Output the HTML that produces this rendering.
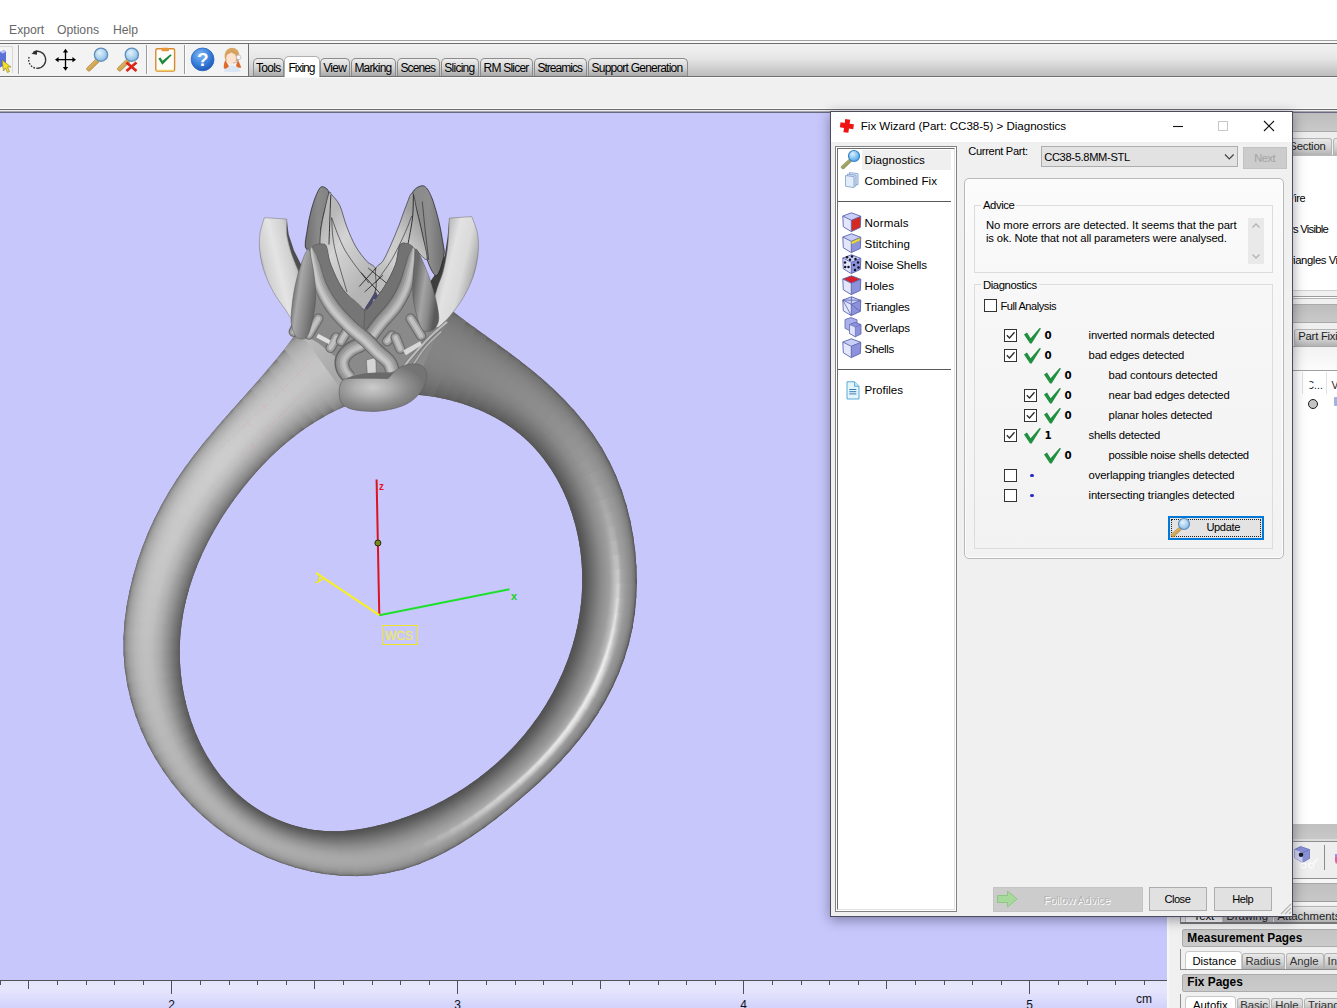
<!DOCTYPE html>
<html><head><meta charset="utf-8"><title>Fix Wizard</title>
<style>
html,body{margin:0;padding:0;}
body{width:1337px;height:1008px;overflow:hidden;position:relative;background:#fff;font-family:"Liberation Sans",sans-serif;font-size:12px;color:#000;}
.a{position:absolute;}
.t{position:absolute;white-space:nowrap;line-height:1;}
/* menu */
.menu{color:#686868;font-size:12.2px;top:23.500px;}
/* toolbar */
#tbtop{left:0;top:40px;width:1337px;height:1px;background:#a2a2a2;}
#tbtop2{left:0;top:41px;width:1337px;height:2px;background:#f9f9f9;border-bottom:1px solid #6e6e6e;}
#tb{left:0;top:44px;width:1337px;height:32px;background:#f3f3f3;}
#tabstrip{left:248px;top:44px;width:1089px;height:32px;background:linear-gradient(#f1f1f1 0%,#e6e6e6 45%,#bdbdbd 100%);border-left:1px solid #6e6e6e;}
#tbbot{left:0;top:76px;width:1337px;height:1px;background:#707070;}
#ribbon{left:0;top:77px;width:1337px;height:31px;background:#f0f0f0;border-top:1px solid #fafafa;box-sizing:border-box;}
#rb1{left:0;top:108px;width:1337px;height:1px;background:#fafafa;}
#rb2{left:0;top:109px;width:1337px;height:1px;background:#6a6a6a;border-bottom:1px solid #ededf0;}
#rb3{left:0;top:111px;width:1337px;height:1px;background:#a5a5ac;border-bottom:1px solid #6a6a82;}
.tab{position:absolute;top:58px;height:18px;box-sizing:border-box;border:1px solid #8c8c8c;border-bottom:none;border-radius:5px 5px 0 0;background:linear-gradient(#eeeeee,#d4d4d4 50%,#a8a8a8);font-size:12px;letter-spacing:-0.35px;line-height:1;padding-top:4px;text-align:center;white-space:nowrap;color:#000;}
.tab.sel{background:#fff;top:56px;height:21px;padding-top:6px;border-color:#b0b0b0;}
/* viewport */
#vp{left:0;top:113px;width:1167px;height:866px;background:#c7c7fc;overflow:hidden;}
#ruler{left:0;top:979px;width:1167px;height:29px;background:linear-gradient(#c7c7fc 0,#c7c7fc 1px,#50505a 1px,#50505a 2px,#e4e4fb 2px,#e6e6fd 10px,#d2d2fb 29px);}
/* right panel */
#rp{left:1167px;top:113px;width:170px;height:895px;background:#f0f0f0;}

/* dialog */
#dlg{left:830px;top:111px;width:463px;height:806px;background:#f0f0f0;box-sizing:border-box;border:1px solid #4c4c5c;box-shadow:0 3px 12px 0 rgba(0,0,30,.38);}
#dtitle{left:831px;top:112px;width:461px;height:30px;background:#fff;}
.seg{font-size:11.6px;}
.li{position:absolute;left:865px;white-space:nowrap;line-height:1;font-size:11.6px;}
.tx{position:absolute;white-space:nowrap;line-height:1;font-size:11.300px;}
.cb{position:absolute;width:13px;height:13px;box-sizing:border-box;border:1px solid #333;background:#fff;}
.btn{position:absolute;box-sizing:border-box;border:1px solid #adadad;background:#e1e1e1;text-align:center;font-size:12px;line-height:1;white-space:nowrap;}
.grp{position:absolute;box-sizing:border-box;border:1px solid #dcdcdc;}
.grpl{position:absolute;background:#f8f8f8;padding:0 2px;font-size:11.300px;line-height:1;white-space:nowrap;}
</style></head><body>
<!-- menu bar -->
<div class="t menu" style="left:9px">Export</div>
<div class="t menu" style="left:57px">Options</div>
<div class="t menu" style="left:113px">Help</div>
<!-- toolbar -->
<div class="a" id="tbtop"></div><div class="a" id="tbtop2"></div>
<div class="a" id="tb"></div>
<div class="a" id="tabstrip"></div>
<div class="a" id="tbbot"></div>
<div class="a" id="ribbon"></div>
<div class="a" id="rb1"></div><div class="a" id="rb2"></div><div class="a" id="rb3"></div>
<!-- toolbar icons -->
<svg class="a" style="left:0;top:44px" width="248" height="32" viewBox="0 44 248 32">
<defs>
<radialGradient id="lens" cx="40%" cy="35%" r="70%"><stop offset="0" stop-color="#e4f3fc"/><stop offset=".6" stop-color="#a9d0ee"/><stop offset="1" stop-color="#7fb2dc"/></radialGradient>
<linearGradient id="hand" x1="0" y1="0" x2="1" y2="1"><stop offset="0" stop-color="#efcf7e"/><stop offset="1" stop-color="#b98533"/></linearGradient>
<radialGradient id="helpg" cx="40%" cy="30%" r="75%"><stop offset="0" stop-color="#7fb6f4"/><stop offset=".55" stop-color="#3b82dd"/><stop offset="1" stop-color="#1c55b4"/></radialGradient>
</defs>
<!-- pressed button box + cube/cursor -->
<path d="M0 46.5H12.5V73" fill="none" stroke="#d8d8d8"/>
<path d="M0 52l4 -2 2 1.5v13l-6 3z" fill="#5b6fd8"/><path d="M0 52l4 -2 2 1.5 -3 2z" fill="#b8c4f4"/>
<path d="M2 60l1.5 11 2 -3 2 4.5 2 -1 -2 -4.5 3.5 0z" fill="#f2e02c" stroke="#8a7a10" stroke-width=".6"/>
<!-- separators -->
<path d="M18.5 45V74M146.500 45V74M184.500 45V74" stroke="#9c9c9c"/><path d="M19.5 45V74M147.500 45V74M185.500 45V74" stroke="#fdfdfd"/>
<!-- rotate -->
<path d="M33.21 52.29A8.5 8.5 0 1 1 37.94 68.27" fill="none" stroke="#333" stroke-width="1.300"/>
<path d="M37.94 68.27A8.5 8.5 0 0 1 29.21 56.89" fill="none" stroke="#333" stroke-width="1.300" stroke-dasharray="1.700 1.300"/>
<path d="M31.300 53.800l5.800 -3.800 -.2 4.800z" fill="#2a2a2a"/>
<!-- move -->
<path d="M57 59.700H74M65.500 51V68.500" stroke="#000" stroke-width="1.300"/>
<path d="M65.500 48.800l2.600 3.600h-5.200zM65.500 70.700l2.600 -3.600h-5.200zM55 59.700l3.600 -2.600v5.200zM76 59.700l-3.600 -2.600v5.200z" fill="#000"/>
<!-- zoom -->
<path d="M96.300 58.700l3 3 -9.600 9.200c-1.200 1 -4 -1.500 -3 -2.800z" fill="url(#hand)" stroke="#a9792c" stroke-width=".6"/>
<circle cx="101" cy="54.700" r="6.600" fill="url(#lens)" stroke="#5b8dbd" stroke-width="1.300"/>
<!-- zoom x -->
<path d="M127.100 58.700l3 3 -9.600 9.200c-1.200 1 -4 -1.500 -3 -2.800z" fill="url(#hand)" stroke="#a9792c" stroke-width=".6"/>
<circle cx="131.800" cy="54.700" r="6.600" fill="url(#lens)" stroke="#5b8dbd" stroke-width="1.300"/>
<path d="M126.500 62.500l10 8.500M136.500 62.500l-10 8.500" stroke="#dc2418" stroke-width="2.700"/>
<!-- clipboard -->
<rect x="155.800" y="48.800" width="18.800" height="22.300" rx="1.500" fill="#fffef8" stroke="#d98b2f" stroke-width="1.400"/>
<path d="M156.500 70.400h17.400" stroke="#f0d060" stroke-width="1.200"/>
<rect x="161.500" y="47.800" width="7.500" height="3.400" rx="1" fill="#e9963a"/>
<path d="M158.300 58.600l2.200 -1 2 3.200 8 -6.500 1.200 1 -9.400 9.500z" fill="#1c8a3c"/>
<!-- help -->
<circle cx="202.600" cy="59.400" r="11.400" fill="url(#helpg)" stroke="#2a63bd" stroke-width=".8"/>
<text x="202.700" y="66.300" font-family="Liberation Sans,sans-serif" font-weight="bold" font-size="19" fill="#fff" text-anchor="middle">?</text>
<!-- support person -->
<path d="M223.800 71.600c.6 -4 3.600 -6 8 -6s7.800 2 8.600 6c-4.500 1 -12 1 -16.600 0z" fill="#dbe6f5"/>
<path d="M225.200 60c-1 3 -1.800 5.500 -1.300 8.500 2 .5 4 -.5 5 -2.500zM238 60c1.300 2.500 2.300 5 3.300 7.500 -2 .8 -4.300 0 -5.300 -2z" fill="#de6a2c"/>
<path d="M224.600 56c0 -5.500 4 -8.200 7.400 -8.200 4 0 7.300 2.800 7.300 8 0 2 -.5 4 -1.500 5.500h-11.500c-1.200 -1.500 -1.700 -3.300 -1.700 -5.300z" fill="#d9a666"/>
<ellipse cx="231.200" cy="58.300" rx="4.900" ry="6" fill="#fde2cf"/>
<path d="M225.800 54.500c1 -3.500 4 -5 7 -4.500 2.500 .5 4.500 2 5.200 4.500 -2.500 0 -5 -.8 -6.800 -2.300 -1.400 1.500 -3.400 2.300 -5.400 2.300z" fill="#d4a262"/>
<circle cx="238.600" cy="57.300" r="2.300" fill="#f6f6fa" stroke="#b4b4c4" stroke-width=".7"/>
<path d="M238.300 59.800c-.8 2.500 -3 3.300 -5.300 3" fill="none" stroke="#a4a4b0" stroke-width=".8"/>
</svg>
<!-- ribbon tabs -->
<div class="tab" style="left:253px;width:31px"></div>
<div class="t" style="letter-spacing:-0.703px;left:256.0px;top:61.64px;font-size:12px;">Tools</div>
<div class="tab sel" style="left:284px;width:36px"></div>
<div class="t" style="letter-spacing:-1.053px;left:288.6px;top:61.64px;font-size:12px;">Fixing</div>
<div class="tab" style="left:320px;width:30px"></div>
<div class="t" style="letter-spacing:-0.749px;left:323.3px;top:61.64px;font-size:12px;">View</div>
<div class="tab" style="left:351px;width:45px"></div>
<div class="t" style="letter-spacing:-0.812px;left:354.4px;top:61.64px;font-size:12px;">Marking</div>
<div class="tab" style="left:397px;width:43px"></div>
<div class="t" style="letter-spacing:-0.905px;left:400.5px;top:61.64px;font-size:12px;">Scenes</div>
<div class="tab" style="left:441px;width:38px"></div>
<div class="t" style="letter-spacing:-0.737px;left:444.3px;top:61.64px;font-size:12px;">Slicing</div>
<div class="tab" style="left:480px;width:53px"></div>
<div class="t" style="letter-spacing:-0.768px;left:483.5px;top:61.64px;font-size:12px;">RM Slicer</div>
<div class="tab" style="left:534px;width:53px"></div>
<div class="t" style="letter-spacing:-0.960px;left:537.4px;top:61.64px;font-size:12px;">Streamics</div>
<div class="tab" style="left:588px;width:100px"></div>
<div class="t" style="letter-spacing:-0.769px;left:591.5px;top:61.64px;font-size:12px;">Support Generation</div>
<!-- viewport -->
<div class="a" id="vp"></div>
<div class="a" id="ruler"></div>
<svg class="a" style="left:0;top:113px" width="1167" height="866" viewBox="0 113 1167 866">
<defs><linearGradient id="b0" gradientUnits="userSpaceOnUse" x1="343.3" y1="407.2" x2="292.2" y2="338.6"><stop offset="0" stop-color="#6c6c6c"/><stop offset="0.04" stop-color="#848484"/><stop offset="0.1" stop-color="#949494"/><stop offset="0.2" stop-color="#a7a7a7"/><stop offset="0.35" stop-color="#bbbbbb"/><stop offset="0.5" stop-color="#c4c4c4"/><stop offset="0.6" stop-color="#c4c4c4"/><stop offset="0.66" stop-color="#c2c2c2"/><stop offset="0.72" stop-color="#bfbfbf"/><stop offset="0.8" stop-color="#b9b9b9"/><stop offset="0.9" stop-color="#ababab"/><stop offset="0.96" stop-color="#9c9c9c"/><stop offset="1" stop-color="#808080"/></linearGradient><linearGradient id="b1" gradientUnits="userSpaceOnUse" x1="329.4" y1="413.8" x2="280.4" y2="354.1"><stop offset="0" stop-color="#6b6b6b"/><stop offset="0.04" stop-color="#838383"/><stop offset="0.1" stop-color="#949494"/><stop offset="0.2" stop-color="#a7a7a7"/><stop offset="0.35" stop-color="#bbbbbb"/><stop offset="0.5" stop-color="#c5c5c5"/><stop offset="0.6" stop-color="#c5c5c5"/><stop offset="0.66" stop-color="#c3c3c3"/><stop offset="0.72" stop-color="#c0c0c0"/><stop offset="0.8" stop-color="#bababa"/><stop offset="0.9" stop-color="#ababab"/><stop offset="0.96" stop-color="#9c9c9c"/><stop offset="1" stop-color="#7f7f7f"/></linearGradient><linearGradient id="b2" gradientUnits="userSpaceOnUse" x1="319.3" y1="419.4" x2="272.4" y2="364.0"><stop offset="0" stop-color="#6a6a6a"/><stop offset="0.04" stop-color="#838383"/><stop offset="0.1" stop-color="#939393"/><stop offset="0.2" stop-color="#a7a7a7"/><stop offset="0.35" stop-color="#bcbcbc"/><stop offset="0.5" stop-color="#c6c6c6"/><stop offset="0.6" stop-color="#c6c6c6"/><stop offset="0.66" stop-color="#c4c4c4"/><stop offset="0.72" stop-color="#c1c1c1"/><stop offset="0.8" stop-color="#bbbbbb"/><stop offset="0.9" stop-color="#acacac"/><stop offset="0.96" stop-color="#9c9c9c"/><stop offset="1" stop-color="#7e7e7e"/></linearGradient><linearGradient id="b3" gradientUnits="userSpaceOnUse" x1="309.3" y1="425.7" x2="264.0" y2="373.8"><stop offset="0" stop-color="#6a6a6a"/><stop offset="0.04" stop-color="#828282"/><stop offset="0.1" stop-color="#929292"/><stop offset="0.2" stop-color="#a6a6a6"/><stop offset="0.35" stop-color="#bcbcbc"/><stop offset="0.5" stop-color="#c7c7c7"/><stop offset="0.6" stop-color="#c7c7c7"/><stop offset="0.66" stop-color="#c5c5c5"/><stop offset="0.72" stop-color="#c2c2c2"/><stop offset="0.8" stop-color="#bbbbbb"/><stop offset="0.9" stop-color="#acacac"/><stop offset="0.96" stop-color="#9c9c9c"/><stop offset="1" stop-color="#7e7e7e"/></linearGradient><linearGradient id="b4" gradientUnits="userSpaceOnUse" x1="299.4" y1="432.6" x2="255.1" y2="384.0"><stop offset="0" stop-color="#696969"/><stop offset="0.04" stop-color="#818181"/><stop offset="0.1" stop-color="#919191"/><stop offset="0.2" stop-color="#a6a6a6"/><stop offset="0.35" stop-color="#bcbcbc"/><stop offset="0.5" stop-color="#c8c8c8"/><stop offset="0.6" stop-color="#c8c8c8"/><stop offset="0.66" stop-color="#c6c6c6"/><stop offset="0.72" stop-color="#c3c3c3"/><stop offset="0.8" stop-color="#bcbcbc"/><stop offset="0.9" stop-color="#adadad"/><stop offset="0.96" stop-color="#9c9c9c"/><stop offset="1" stop-color="#7d7d7d"/></linearGradient><linearGradient id="b5" gradientUnits="userSpaceOnUse" x1="289.9" y1="439.9" x2="246.0" y2="394.3"><stop offset="0" stop-color="#686868"/><stop offset="0.04" stop-color="#808080"/><stop offset="0.1" stop-color="#919191"/><stop offset="0.2" stop-color="#a6a6a6"/><stop offset="0.35" stop-color="#bdbdbd"/><stop offset="0.5" stop-color="#c8c8c8"/><stop offset="0.6" stop-color="#c9c9c9"/><stop offset="0.66" stop-color="#c7c7c7"/><stop offset="0.72" stop-color="#c4c4c4"/><stop offset="0.8" stop-color="#bdbdbd"/><stop offset="0.9" stop-color="#adadad"/><stop offset="0.96" stop-color="#9c9c9c"/><stop offset="1" stop-color="#7c7c7c"/></linearGradient><linearGradient id="b6" gradientUnits="userSpaceOnUse" x1="280.6" y1="447.8" x2="236.8" y2="404.6"><stop offset="0" stop-color="#686868"/><stop offset="0.04" stop-color="#7f7f7f"/><stop offset="0.1" stop-color="#909090"/><stop offset="0.2" stop-color="#a5a5a5"/><stop offset="0.35" stop-color="#bdbdbd"/><stop offset="0.5" stop-color="#c9c9c9"/><stop offset="0.6" stop-color="#cacaca"/><stop offset="0.66" stop-color="#c8c8c8"/><stop offset="0.72" stop-color="#c5c5c5"/><stop offset="0.8" stop-color="#bebebe"/><stop offset="0.9" stop-color="#aeaeae"/><stop offset="0.96" stop-color="#9d9d9d"/><stop offset="1" stop-color="#7c7c7c"/></linearGradient><linearGradient id="b7" gradientUnits="userSpaceOnUse" x1="271.3" y1="456.5" x2="227.7" y2="414.9"><stop offset="0" stop-color="#676767"/><stop offset="0.04" stop-color="#7e7e7e"/><stop offset="0.1" stop-color="#8f8f8f"/><stop offset="0.2" stop-color="#a5a5a5"/><stop offset="0.35" stop-color="#bebebe"/><stop offset="0.5" stop-color="#cacaca"/><stop offset="0.6" stop-color="#cbcbcb"/><stop offset="0.66" stop-color="#c9c9c9"/><stop offset="0.72" stop-color="#c6c6c6"/><stop offset="0.8" stop-color="#bfbfbf"/><stop offset="0.9" stop-color="#aeaeae"/><stop offset="0.96" stop-color="#9d9d9d"/><stop offset="1" stop-color="#7b7b7b"/></linearGradient><linearGradient id="b8" gradientUnits="userSpaceOnUse" x1="262.4" y1="465.5" x2="218.5" y2="425.5"><stop offset="0" stop-color="#666666"/><stop offset="0.04" stop-color="#7d7d7d"/><stop offset="0.1" stop-color="#8e8e8e"/><stop offset="0.2" stop-color="#a5a5a5"/><stop offset="0.35" stop-color="#bebebe"/><stop offset="0.5" stop-color="#cbcbcb"/><stop offset="0.6" stop-color="#cccccc"/><stop offset="0.66" stop-color="#cacaca"/><stop offset="0.72" stop-color="#c7c7c7"/><stop offset="0.8" stop-color="#bfbfbf"/><stop offset="0.9" stop-color="#afafaf"/><stop offset="0.96" stop-color="#9d9d9d"/><stop offset="1" stop-color="#7a7a7a"/></linearGradient><linearGradient id="b9" gradientUnits="userSpaceOnUse" x1="253.8" y1="474.9" x2="209.1" y2="436.6"><stop offset="0" stop-color="#666666"/><stop offset="0.04" stop-color="#7c7c7c"/><stop offset="0.1" stop-color="#8d8d8d"/><stop offset="0.2" stop-color="#a4a4a4"/><stop offset="0.35" stop-color="#bebebe"/><stop offset="0.5" stop-color="#cccccc"/><stop offset="0.6" stop-color="#cdcdcd"/><stop offset="0.66" stop-color="#cccccc"/><stop offset="0.72" stop-color="#c8c8c8"/><stop offset="0.8" stop-color="#c0c0c0"/><stop offset="0.9" stop-color="#afafaf"/><stop offset="0.96" stop-color="#9d9d9d"/><stop offset="1" stop-color="#7a7a7a"/></linearGradient><linearGradient id="b10" gradientUnits="userSpaceOnUse" x1="245.6" y1="484.6" x2="199.8" y2="448.0"><stop offset="0" stop-color="#656565"/><stop offset="0.04" stop-color="#7b7b7b"/><stop offset="0.1" stop-color="#8c8c8c"/><stop offset="0.2" stop-color="#a3a3a3"/><stop offset="0.35" stop-color="#bebebe"/><stop offset="0.5" stop-color="#cccccc"/><stop offset="0.6" stop-color="#cdcdcd"/><stop offset="0.66" stop-color="#cccccc"/><stop offset="0.72" stop-color="#c8c8c8"/><stop offset="0.8" stop-color="#c0c0c0"/><stop offset="0.9" stop-color="#afafaf"/><stop offset="0.96" stop-color="#9d9d9d"/><stop offset="1" stop-color="#797979"/></linearGradient><linearGradient id="b11" gradientUnits="userSpaceOnUse" x1="237.8" y1="494.7" x2="190.8" y2="459.6"><stop offset="0" stop-color="#646464"/><stop offset="0.04" stop-color="#7a7a7a"/><stop offset="0.1" stop-color="#8a8a8a"/><stop offset="0.2" stop-color="#a2a2a2"/><stop offset="0.35" stop-color="#bdbdbd"/><stop offset="0.5" stop-color="#cbcbcb"/><stop offset="0.6" stop-color="#cdcdcd"/><stop offset="0.66" stop-color="#cbcbcb"/><stop offset="0.72" stop-color="#c7c7c7"/><stop offset="0.8" stop-color="#c0c0c0"/><stop offset="0.9" stop-color="#aeaeae"/><stop offset="0.96" stop-color="#9c9c9c"/><stop offset="1" stop-color="#787878"/></linearGradient><linearGradient id="b12" gradientUnits="userSpaceOnUse" x1="230.2" y1="505.2" x2="182.1" y2="471.8"><stop offset="0" stop-color="#646464"/><stop offset="0.04" stop-color="#787878"/><stop offset="0.1" stop-color="#898989"/><stop offset="0.2" stop-color="#a0a0a0"/><stop offset="0.35" stop-color="#bbbbbb"/><stop offset="0.5" stop-color="#cacaca"/><stop offset="0.6" stop-color="#cccccc"/><stop offset="0.66" stop-color="#cacaca"/><stop offset="0.72" stop-color="#c7c7c7"/><stop offset="0.8" stop-color="#bfbfbf"/><stop offset="0.9" stop-color="#aeaeae"/><stop offset="0.96" stop-color="#9b9b9b"/><stop offset="1" stop-color="#787878"/></linearGradient><linearGradient id="b13" gradientUnits="userSpaceOnUse" x1="223.0" y1="515.9" x2="173.7" y2="484.4"><stop offset="0" stop-color="#636363"/><stop offset="0.04" stop-color="#767676"/><stop offset="0.1" stop-color="#878787"/><stop offset="0.2" stop-color="#9e9e9e"/><stop offset="0.35" stop-color="#bababa"/><stop offset="0.5" stop-color="#c9c9c9"/><stop offset="0.6" stop-color="#cbcbcb"/><stop offset="0.66" stop-color="#c9c9c9"/><stop offset="0.72" stop-color="#c6c6c6"/><stop offset="0.8" stop-color="#bebebe"/><stop offset="0.9" stop-color="#adadad"/><stop offset="0.96" stop-color="#9a9a9a"/><stop offset="1" stop-color="#777777"/></linearGradient><linearGradient id="b14" gradientUnits="userSpaceOnUse" x1="216.5" y1="526.6" x2="165.8" y2="497.4"><stop offset="0" stop-color="#626262"/><stop offset="0.04" stop-color="#757575"/><stop offset="0.1" stop-color="#858585"/><stop offset="0.2" stop-color="#9d9d9d"/><stop offset="0.35" stop-color="#b9b9b9"/><stop offset="0.5" stop-color="#c8c8c8"/><stop offset="0.6" stop-color="#cacaca"/><stop offset="0.66" stop-color="#c9c9c9"/><stop offset="0.72" stop-color="#c5c5c5"/><stop offset="0.8" stop-color="#bebebe"/><stop offset="0.9" stop-color="#acacac"/><stop offset="0.96" stop-color="#9a9a9a"/><stop offset="1" stop-color="#767676"/></linearGradient><linearGradient id="b15" gradientUnits="userSpaceOnUse" x1="210.2" y1="537.7" x2="158.6" y2="510.8"><stop offset="0" stop-color="#616161"/><stop offset="0.04" stop-color="#737373"/><stop offset="0.1" stop-color="#838383"/><stop offset="0.2" stop-color="#9b9b9b"/><stop offset="0.35" stop-color="#b7b7b7"/><stop offset="0.5" stop-color="#c7c7c7"/><stop offset="0.6" stop-color="#c9c9c9"/><stop offset="0.66" stop-color="#c8c8c8"/><stop offset="0.72" stop-color="#c5c5c5"/><stop offset="0.8" stop-color="#bdbdbd"/><stop offset="0.9" stop-color="#ababab"/><stop offset="0.96" stop-color="#999999"/><stop offset="1" stop-color="#757575"/></linearGradient><linearGradient id="b16" gradientUnits="userSpaceOnUse" x1="204.5" y1="549.1" x2="151.9" y2="524.5"><stop offset="0" stop-color="#606060"/><stop offset="0.04" stop-color="#727272"/><stop offset="0.1" stop-color="#828282"/><stop offset="0.2" stop-color="#999999"/><stop offset="0.35" stop-color="#b6b6b6"/><stop offset="0.5" stop-color="#c7c7c7"/><stop offset="0.6" stop-color="#c9c9c9"/><stop offset="0.66" stop-color="#c7c7c7"/><stop offset="0.72" stop-color="#c4c4c4"/><stop offset="0.8" stop-color="#bcbcbc"/><stop offset="0.9" stop-color="#ababab"/><stop offset="0.96" stop-color="#989898"/><stop offset="1" stop-color="#747474"/></linearGradient><linearGradient id="b17" gradientUnits="userSpaceOnUse" x1="199.3" y1="560.6" x2="145.9" y2="538.5"><stop offset="0" stop-color="#5f5f5f"/><stop offset="0.04" stop-color="#707070"/><stop offset="0.1" stop-color="#808080"/><stop offset="0.2" stop-color="#989898"/><stop offset="0.35" stop-color="#b5b5b5"/><stop offset="0.5" stop-color="#c6c6c6"/><stop offset="0.6" stop-color="#c8c8c8"/><stop offset="0.66" stop-color="#c6c6c6"/><stop offset="0.72" stop-color="#c3c3c3"/><stop offset="0.8" stop-color="#bbbbbb"/><stop offset="0.9" stop-color="#aaaaaa"/><stop offset="0.96" stop-color="#979797"/><stop offset="1" stop-color="#737373"/></linearGradient><linearGradient id="b18" gradientUnits="userSpaceOnUse" x1="194.7" y1="572.2" x2="140.5" y2="552.7"><stop offset="0" stop-color="#5e5e5e"/><stop offset="0.04" stop-color="#6f6f6f"/><stop offset="0.1" stop-color="#7e7e7e"/><stop offset="0.2" stop-color="#969696"/><stop offset="0.35" stop-color="#b4b4b4"/><stop offset="0.5" stop-color="#c5c5c5"/><stop offset="0.6" stop-color="#c7c7c7"/><stop offset="0.66" stop-color="#c6c6c6"/><stop offset="0.72" stop-color="#c2c2c2"/><stop offset="0.8" stop-color="#bbbbbb"/><stop offset="0.9" stop-color="#a9a9a9"/><stop offset="0.96" stop-color="#969696"/><stop offset="1" stop-color="#727272"/></linearGradient><linearGradient id="b19" gradientUnits="userSpaceOnUse" x1="190.7" y1="584.0" x2="135.8" y2="567.1"><stop offset="0" stop-color="#5d5d5d"/><stop offset="0.04" stop-color="#6d6d6d"/><stop offset="0.1" stop-color="#7c7c7c"/><stop offset="0.2" stop-color="#949494"/><stop offset="0.35" stop-color="#b2b2b2"/><stop offset="0.5" stop-color="#c4c4c4"/><stop offset="0.6" stop-color="#c6c6c6"/><stop offset="0.66" stop-color="#c5c5c5"/><stop offset="0.72" stop-color="#c2c2c2"/><stop offset="0.8" stop-color="#bababa"/><stop offset="0.9" stop-color="#a8a8a8"/><stop offset="0.96" stop-color="#969696"/><stop offset="1" stop-color="#717171"/></linearGradient><linearGradient id="b20" gradientUnits="userSpaceOnUse" x1="187.2" y1="595.9" x2="131.9" y2="581.6"><stop offset="0" stop-color="#5c5c5c"/><stop offset="0.04" stop-color="#6b6b6b"/><stop offset="0.1" stop-color="#7b7b7b"/><stop offset="0.2" stop-color="#939393"/><stop offset="0.35" stop-color="#b1b1b1"/><stop offset="0.5" stop-color="#c3c3c3"/><stop offset="0.6" stop-color="#c5c5c5"/><stop offset="0.66" stop-color="#c4c4c4"/><stop offset="0.72" stop-color="#c1c1c1"/><stop offset="0.8" stop-color="#b9b9b9"/><stop offset="0.9" stop-color="#a8a8a8"/><stop offset="0.96" stop-color="#959595"/><stop offset="1" stop-color="#707070"/></linearGradient><linearGradient id="b21" gradientUnits="userSpaceOnUse" x1="184.4" y1="608.1" x2="128.5" y2="596.6"><stop offset="0" stop-color="#5b5b5b"/><stop offset="0.04" stop-color="#6a6a6a"/><stop offset="0.1" stop-color="#797979"/><stop offset="0.2" stop-color="#919191"/><stop offset="0.35" stop-color="#afafaf"/><stop offset="0.5" stop-color="#c1c1c1"/><stop offset="0.6" stop-color="#c4c4c4"/><stop offset="0.66" stop-color="#c3c3c3"/><stop offset="0.72" stop-color="#c0c0c0"/><stop offset="0.8" stop-color="#b8b8b8"/><stop offset="0.9" stop-color="#a7a7a7"/><stop offset="0.96" stop-color="#949494"/><stop offset="1" stop-color="#6f6f6f"/></linearGradient><linearGradient id="b22" gradientUnits="userSpaceOnUse" x1="182.2" y1="620.1" x2="126.0" y2="611.8"><stop offset="0" stop-color="#5a5a5a"/><stop offset="0.04" stop-color="#696969"/><stop offset="0.1" stop-color="#777777"/><stop offset="0.2" stop-color="#8f8f8f"/><stop offset="0.35" stop-color="#aeaeae"/><stop offset="0.5" stop-color="#c0c0c0"/><stop offset="0.6" stop-color="#c3c3c3"/><stop offset="0.66" stop-color="#c2c2c2"/><stop offset="0.72" stop-color="#bfbfbf"/><stop offset="0.8" stop-color="#b7b7b7"/><stop offset="0.9" stop-color="#a6a6a6"/><stop offset="0.96" stop-color="#939393"/><stop offset="1" stop-color="#6e6e6e"/></linearGradient><linearGradient id="b23" gradientUnits="userSpaceOnUse" x1="180.7" y1="632.3" x2="124.3" y2="627.4"><stop offset="0" stop-color="#595959"/><stop offset="0.04" stop-color="#676767"/><stop offset="0.1" stop-color="#767676"/><stop offset="0.2" stop-color="#8e8e8e"/><stop offset="0.35" stop-color="#acacac"/><stop offset="0.5" stop-color="#bfbfbf"/><stop offset="0.6" stop-color="#c2c2c2"/><stop offset="0.66" stop-color="#c1c1c1"/><stop offset="0.72" stop-color="#bdbdbd"/><stop offset="0.8" stop-color="#b6b6b6"/><stop offset="0.9" stop-color="#a5a5a5"/><stop offset="0.96" stop-color="#929292"/><stop offset="1" stop-color="#6d6d6d"/></linearGradient><linearGradient id="b24" gradientUnits="userSpaceOnUse" x1="179.9" y1="644.6" x2="123.6" y2="643.4"><stop offset="0" stop-color="#585858"/><stop offset="0.04" stop-color="#666666"/><stop offset="0.1" stop-color="#747474"/><stop offset="0.2" stop-color="#8c8c8c"/><stop offset="0.35" stop-color="#ababab"/><stop offset="0.5" stop-color="#bdbdbd"/><stop offset="0.6" stop-color="#c1c1c1"/><stop offset="0.66" stop-color="#bfbfbf"/><stop offset="0.72" stop-color="#bcbcbc"/><stop offset="0.8" stop-color="#b5b5b5"/><stop offset="0.9" stop-color="#a4a4a4"/><stop offset="0.96" stop-color="#919191"/><stop offset="1" stop-color="#6c6c6c"/></linearGradient><linearGradient id="b25" gradientUnits="userSpaceOnUse" x1="179.9" y1="656.8" x2="124.2" y2="659.4"><stop offset="0" stop-color="#585858"/><stop offset="0.04" stop-color="#656565"/><stop offset="0.1" stop-color="#737373"/><stop offset="0.2" stop-color="#8a8a8a"/><stop offset="0.35" stop-color="#a9a9a9"/><stop offset="0.5" stop-color="#bcbcbc"/><stop offset="0.6" stop-color="#bfbfbf"/><stop offset="0.66" stop-color="#bebebe"/><stop offset="0.72" stop-color="#bbbbbb"/><stop offset="0.8" stop-color="#b4b4b4"/><stop offset="0.9" stop-color="#a3a3a3"/><stop offset="0.96" stop-color="#909090"/><stop offset="1" stop-color="#6c6c6c"/></linearGradient><linearGradient id="b26" gradientUnits="userSpaceOnUse" x1="180.5" y1="669.0" x2="125.9" y2="675.2"><stop offset="0" stop-color="#585858"/><stop offset="0.04" stop-color="#646464"/><stop offset="0.1" stop-color="#727272"/><stop offset="0.2" stop-color="#898989"/><stop offset="0.35" stop-color="#a8a8a8"/><stop offset="0.5" stop-color="#bbbbbb"/><stop offset="0.6" stop-color="#bebebe"/><stop offset="0.66" stop-color="#bdbdbd"/><stop offset="0.72" stop-color="#bababa"/><stop offset="0.8" stop-color="#b3b3b3"/><stop offset="0.9" stop-color="#a2a2a2"/><stop offset="0.96" stop-color="#8f8f8f"/><stop offset="1" stop-color="#6c6c6c"/></linearGradient><linearGradient id="b27" gradientUnits="userSpaceOnUse" x1="181.8" y1="681.2" x2="128.8" y2="690.9"><stop offset="0" stop-color="#575757"/><stop offset="0.04" stop-color="#636363"/><stop offset="0.1" stop-color="#717171"/><stop offset="0.2" stop-color="#888888"/><stop offset="0.35" stop-color="#a6a6a6"/><stop offset="0.5" stop-color="#b9b9b9"/><stop offset="0.6" stop-color="#bdbdbd"/><stop offset="0.66" stop-color="#bcbcbc"/><stop offset="0.72" stop-color="#b9b9b9"/><stop offset="0.8" stop-color="#b2b2b2"/><stop offset="0.9" stop-color="#a1a1a1"/><stop offset="0.96" stop-color="#8f8f8f"/><stop offset="1" stop-color="#6b6b6b"/></linearGradient><linearGradient id="b28" gradientUnits="userSpaceOnUse" x1="183.9" y1="693.5" x2="132.7" y2="706.0"><stop offset="0" stop-color="#575757"/><stop offset="0.04" stop-color="#626262"/><stop offset="0.1" stop-color="#707070"/><stop offset="0.2" stop-color="#868686"/><stop offset="0.35" stop-color="#a5a5a5"/><stop offset="0.5" stop-color="#b8b8b8"/><stop offset="0.6" stop-color="#bcbcbc"/><stop offset="0.66" stop-color="#bbbbbb"/><stop offset="0.72" stop-color="#b8b8b8"/><stop offset="0.8" stop-color="#b1b1b1"/><stop offset="0.9" stop-color="#a0a0a0"/><stop offset="0.96" stop-color="#8e8e8e"/><stop offset="1" stop-color="#6b6b6b"/></linearGradient><linearGradient id="b29" gradientUnits="userSpaceOnUse" x1="186.6" y1="705.6" x2="137.6" y2="720.9"><stop offset="0" stop-color="#575757"/><stop offset="0.04" stop-color="#616161"/><stop offset="0.1" stop-color="#6e6e6e"/><stop offset="0.2" stop-color="#858585"/><stop offset="0.35" stop-color="#a4a4a4"/><stop offset="0.5" stop-color="#b7b7b7"/><stop offset="0.6" stop-color="#bbbbbb"/><stop offset="0.66" stop-color="#bababa"/><stop offset="0.72" stop-color="#b7b7b7"/><stop offset="0.8" stop-color="#b0b0b0"/><stop offset="0.9" stop-color="#a0a0a0"/><stop offset="0.96" stop-color="#8e8e8e"/><stop offset="1" stop-color="#6b6b6b"/></linearGradient><linearGradient id="b30" gradientUnits="userSpaceOnUse" x1="190.0" y1="717.4" x2="143.6" y2="735.3"><stop offset="0" stop-color="#565656"/><stop offset="0.04" stop-color="#606060"/><stop offset="0.1" stop-color="#6d6d6d"/><stop offset="0.2" stop-color="#848484"/><stop offset="0.35" stop-color="#a2a2a2"/><stop offset="0.5" stop-color="#b5b5b5"/><stop offset="0.6" stop-color="#b9b9b9"/><stop offset="0.66" stop-color="#b9b9b9"/><stop offset="0.72" stop-color="#b6b6b6"/><stop offset="0.8" stop-color="#afafaf"/><stop offset="0.9" stop-color="#9f9f9f"/><stop offset="0.96" stop-color="#8d8d8d"/><stop offset="1" stop-color="#6b6b6b"/></linearGradient><linearGradient id="b31" gradientUnits="userSpaceOnUse" x1="194.1" y1="728.9" x2="150.4" y2="749.2"><stop offset="0" stop-color="#565656"/><stop offset="0.04" stop-color="#5f5f5f"/><stop offset="0.1" stop-color="#6c6c6c"/><stop offset="0.2" stop-color="#828282"/><stop offset="0.35" stop-color="#a1a1a1"/><stop offset="0.5" stop-color="#b4b4b4"/><stop offset="0.6" stop-color="#b8b8b8"/><stop offset="0.66" stop-color="#b7b7b7"/><stop offset="0.72" stop-color="#b5b5b5"/><stop offset="0.8" stop-color="#aeaeae"/><stop offset="0.9" stop-color="#9e9e9e"/><stop offset="0.96" stop-color="#8d8d8d"/><stop offset="1" stop-color="#6a6a6a"/></linearGradient><linearGradient id="b32" gradientUnits="userSpaceOnUse" x1="198.9" y1="740.3" x2="157.9" y2="762.4"><stop offset="0" stop-color="#565656"/><stop offset="0.04" stop-color="#5f5f5f"/><stop offset="0.1" stop-color="#6b6b6b"/><stop offset="0.2" stop-color="#818181"/><stop offset="0.35" stop-color="#9f9f9f"/><stop offset="0.5" stop-color="#b3b3b3"/><stop offset="0.6" stop-color="#b7b7b7"/><stop offset="0.66" stop-color="#b6b6b6"/><stop offset="0.72" stop-color="#b4b4b4"/><stop offset="0.8" stop-color="#adadad"/><stop offset="0.9" stop-color="#9d9d9d"/><stop offset="0.96" stop-color="#8c8c8c"/><stop offset="1" stop-color="#6a6a6a"/></linearGradient><linearGradient id="b33" gradientUnits="userSpaceOnUse" x1="204.6" y1="751.4" x2="166.3" y2="775.1"><stop offset="0" stop-color="#555555"/><stop offset="0.04" stop-color="#5e5e5e"/><stop offset="0.1" stop-color="#6a6a6a"/><stop offset="0.2" stop-color="#808080"/><stop offset="0.35" stop-color="#9e9e9e"/><stop offset="0.5" stop-color="#b1b1b1"/><stop offset="0.6" stop-color="#b6b6b6"/><stop offset="0.66" stop-color="#b5b5b5"/><stop offset="0.72" stop-color="#b3b3b3"/><stop offset="0.8" stop-color="#acacac"/><stop offset="0.9" stop-color="#9d9d9d"/><stop offset="0.96" stop-color="#8b8b8b"/><stop offset="1" stop-color="#6a6a6a"/></linearGradient><linearGradient id="b34" gradientUnits="userSpaceOnUse" x1="210.8" y1="761.9" x2="175.5" y2="787.2"><stop offset="0" stop-color="#555555"/><stop offset="0.04" stop-color="#5d5d5d"/><stop offset="0.1" stop-color="#696969"/><stop offset="0.2" stop-color="#7e7e7e"/><stop offset="0.35" stop-color="#9c9c9c"/><stop offset="0.5" stop-color="#b0b0b0"/><stop offset="0.6" stop-color="#b5b5b5"/><stop offset="0.66" stop-color="#b4b4b4"/><stop offset="0.72" stop-color="#b2b2b2"/><stop offset="0.8" stop-color="#ababab"/><stop offset="0.9" stop-color="#9c9c9c"/><stop offset="0.96" stop-color="#8b8b8b"/><stop offset="1" stop-color="#6a6a6a"/></linearGradient><linearGradient id="b35" gradientUnits="userSpaceOnUse" x1="217.8" y1="771.9" x2="185.5" y2="798.8"><stop offset="0" stop-color="#555555"/><stop offset="0.04" stop-color="#5c5c5c"/><stop offset="0.1" stop-color="#686868"/><stop offset="0.2" stop-color="#7d7d7d"/><stop offset="0.35" stop-color="#9b9b9b"/><stop offset="0.5" stop-color="#afafaf"/><stop offset="0.6" stop-color="#b3b3b3"/><stop offset="0.66" stop-color="#b3b3b3"/><stop offset="0.72" stop-color="#b1b1b1"/><stop offset="0.8" stop-color="#ababab"/><stop offset="0.9" stop-color="#9b9b9b"/><stop offset="0.96" stop-color="#8a8a8a"/><stop offset="1" stop-color="#696969"/></linearGradient><linearGradient id="b36" gradientUnits="userSpaceOnUse" x1="225.6" y1="781.5" x2="196.0" y2="809.6"><stop offset="0" stop-color="#545454"/><stop offset="0.04" stop-color="#5c5c5c"/><stop offset="0.1" stop-color="#676767"/><stop offset="0.2" stop-color="#7c7c7c"/><stop offset="0.35" stop-color="#999999"/><stop offset="0.5" stop-color="#adadad"/><stop offset="0.6" stop-color="#b2b2b2"/><stop offset="0.66" stop-color="#b2b2b2"/><stop offset="0.72" stop-color="#b0b0b0"/><stop offset="0.8" stop-color="#aaaaaa"/><stop offset="0.9" stop-color="#9b9b9b"/><stop offset="0.96" stop-color="#8a8a8a"/><stop offset="1" stop-color="#696969"/></linearGradient><linearGradient id="b37" gradientUnits="userSpaceOnUse" x1="234.1" y1="790.5" x2="207.1" y2="819.7"><stop offset="0" stop-color="#545454"/><stop offset="0.04" stop-color="#5b5b5b"/><stop offset="0.1" stop-color="#666666"/><stop offset="0.2" stop-color="#7b7b7b"/><stop offset="0.35" stop-color="#989898"/><stop offset="0.5" stop-color="#acacac"/><stop offset="0.6" stop-color="#b1b1b1"/><stop offset="0.66" stop-color="#b1b1b1"/><stop offset="0.72" stop-color="#afafaf"/><stop offset="0.8" stop-color="#a9a9a9"/><stop offset="0.9" stop-color="#9a9a9a"/><stop offset="0.96" stop-color="#898989"/><stop offset="1" stop-color="#696969"/></linearGradient><linearGradient id="b38" gradientUnits="userSpaceOnUse" x1="243.1" y1="798.6" x2="219.1" y2="829.3"><stop offset="0" stop-color="#545454"/><stop offset="0.04" stop-color="#5a5a5a"/><stop offset="0.1" stop-color="#656565"/><stop offset="0.2" stop-color="#7a7a7a"/><stop offset="0.35" stop-color="#979797"/><stop offset="0.5" stop-color="#ababab"/><stop offset="0.6" stop-color="#b0b0b0"/><stop offset="0.66" stop-color="#b0b0b0"/><stop offset="0.72" stop-color="#aeaeae"/><stop offset="0.8" stop-color="#a8a8a8"/><stop offset="0.9" stop-color="#999999"/><stop offset="0.96" stop-color="#898989"/><stop offset="1" stop-color="#696969"/></linearGradient><linearGradient id="b39" gradientUnits="userSpaceOnUse" x1="252.9" y1="805.9" x2="231.5" y2="838.0"><stop offset="0" stop-color="#535353"/><stop offset="0.04" stop-color="#5a5a5a"/><stop offset="0.1" stop-color="#656565"/><stop offset="0.2" stop-color="#797979"/><stop offset="0.35" stop-color="#959595"/><stop offset="0.5" stop-color="#a9a9a9"/><stop offset="0.6" stop-color="#afafaf"/><stop offset="0.66" stop-color="#afafaf"/><stop offset="0.72" stop-color="#adadad"/><stop offset="0.8" stop-color="#a7a7a7"/><stop offset="0.9" stop-color="#999999"/><stop offset="0.96" stop-color="#888888"/><stop offset="1" stop-color="#696969"/></linearGradient><linearGradient id="b40" gradientUnits="userSpaceOnUse" x1="263.3" y1="812.4" x2="244.2" y2="845.7"><stop offset="0" stop-color="#535353"/><stop offset="0.04" stop-color="#595959"/><stop offset="0.1" stop-color="#646464"/><stop offset="0.2" stop-color="#787878"/><stop offset="0.35" stop-color="#949494"/><stop offset="0.5" stop-color="#a8a8a8"/><stop offset="0.6" stop-color="#adadad"/><stop offset="0.66" stop-color="#aeaeae"/><stop offset="0.72" stop-color="#acacac"/><stop offset="0.8" stop-color="#a6a6a6"/><stop offset="0.9" stop-color="#989898"/><stop offset="0.96" stop-color="#888888"/><stop offset="1" stop-color="#686868"/></linearGradient><linearGradient id="b41" gradientUnits="userSpaceOnUse" x1="274.1" y1="817.9" x2="257.6" y2="852.8"><stop offset="0" stop-color="#535353"/><stop offset="0.04" stop-color="#595959"/><stop offset="0.1" stop-color="#636363"/><stop offset="0.2" stop-color="#777777"/><stop offset="0.35" stop-color="#939393"/><stop offset="0.5" stop-color="#a6a6a6"/><stop offset="0.6" stop-color="#acacac"/><stop offset="0.66" stop-color="#acacac"/><stop offset="0.72" stop-color="#ababab"/><stop offset="0.8" stop-color="#a5a5a5"/><stop offset="0.9" stop-color="#979797"/><stop offset="0.96" stop-color="#878787"/><stop offset="1" stop-color="#686868"/></linearGradient><linearGradient id="b42" gradientUnits="userSpaceOnUse" x1="285.4" y1="822.6" x2="271.4" y2="859.0"><stop offset="0" stop-color="#525252"/><stop offset="0.04" stop-color="#585858"/><stop offset="0.1" stop-color="#626262"/><stop offset="0.2" stop-color="#767676"/><stop offset="0.35" stop-color="#929292"/><stop offset="0.5" stop-color="#a5a5a5"/><stop offset="0.6" stop-color="#ababab"/><stop offset="0.66" stop-color="#acacac"/><stop offset="0.72" stop-color="#aaaaaa"/><stop offset="0.8" stop-color="#a4a4a4"/><stop offset="0.9" stop-color="#979797"/><stop offset="0.96" stop-color="#878787"/><stop offset="1" stop-color="#686868"/></linearGradient><linearGradient id="b43" gradientUnits="userSpaceOnUse" x1="297.1" y1="826.3" x2="285.5" y2="864.3"><stop offset="0" stop-color="#525252"/><stop offset="0.04" stop-color="#585858"/><stop offset="0.1" stop-color="#626262"/><stop offset="0.2" stop-color="#757575"/><stop offset="0.35" stop-color="#919191"/><stop offset="0.5" stop-color="#a5a5a5"/><stop offset="0.6" stop-color="#ababab"/><stop offset="0.66" stop-color="#ababab"/><stop offset="0.72" stop-color="#a9a9a9"/><stop offset="0.8" stop-color="#a4a4a4"/><stop offset="0.9" stop-color="#969696"/><stop offset="0.96" stop-color="#878787"/><stop offset="1" stop-color="#686868"/></linearGradient><linearGradient id="b44" gradientUnits="userSpaceOnUse" x1="309.1" y1="829.0" x2="300.2" y2="868.7"><stop offset="0" stop-color="#525252"/><stop offset="0.04" stop-color="#575757"/><stop offset="0.1" stop-color="#616161"/><stop offset="0.2" stop-color="#747474"/><stop offset="0.35" stop-color="#909090"/><stop offset="0.5" stop-color="#a4a4a4"/><stop offset="0.6" stop-color="#aaaaaa"/><stop offset="0.66" stop-color="#aaaaaa"/><stop offset="0.72" stop-color="#a9a9a9"/><stop offset="0.8" stop-color="#a4a4a4"/><stop offset="0.9" stop-color="#969696"/><stop offset="0.96" stop-color="#868686"/><stop offset="1" stop-color="#676767"/></linearGradient><linearGradient id="b45" gradientUnits="userSpaceOnUse" x1="320.9" y1="830.6" x2="315.0" y2="872.1"><stop offset="0" stop-color="#515151"/><stop offset="0.04" stop-color="#565656"/><stop offset="0.1" stop-color="#606060"/><stop offset="0.2" stop-color="#737373"/><stop offset="0.35" stop-color="#8f8f8f"/><stop offset="0.5" stop-color="#a3a3a3"/><stop offset="0.6" stop-color="#a9a9a9"/><stop offset="0.66" stop-color="#aaaaaa"/><stop offset="0.72" stop-color="#a8a8a8"/><stop offset="0.8" stop-color="#a3a3a3"/><stop offset="0.9" stop-color="#969696"/><stop offset="0.96" stop-color="#868686"/><stop offset="1" stop-color="#676767"/></linearGradient><linearGradient id="b46" gradientUnits="userSpaceOnUse" x1="332.9" y1="831.2" x2="330.3" y2="874.4"><stop offset="0" stop-color="#515151"/><stop offset="0.04" stop-color="#565656"/><stop offset="0.1" stop-color="#606060"/><stop offset="0.2" stop-color="#727272"/><stop offset="0.35" stop-color="#8e8e8e"/><stop offset="0.5" stop-color="#a2a2a2"/><stop offset="0.6" stop-color="#a8a8a8"/><stop offset="0.66" stop-color="#a9a9a9"/><stop offset="0.72" stop-color="#a8a8a8"/><stop offset="0.8" stop-color="#a3a3a3"/><stop offset="0.9" stop-color="#959595"/><stop offset="0.96" stop-color="#868686"/><stop offset="1" stop-color="#676767"/></linearGradient><linearGradient id="b47" gradientUnits="userSpaceOnUse" x1="345.1" y1="830.8" x2="345.9" y2="875.7"><stop offset="0" stop-color="#515151"/><stop offset="0.04" stop-color="#555555"/><stop offset="0.1" stop-color="#5f5f5f"/><stop offset="0.2" stop-color="#727272"/><stop offset="0.35" stop-color="#8d8d8d"/><stop offset="0.5" stop-color="#a1a1a1"/><stop offset="0.6" stop-color="#a8a8a8"/><stop offset="0.66" stop-color="#a9a9a9"/><stop offset="0.72" stop-color="#a7a7a7"/><stop offset="0.8" stop-color="#a2a2a2"/><stop offset="0.9" stop-color="#959595"/><stop offset="0.96" stop-color="#858585"/><stop offset="1" stop-color="#676767"/></linearGradient><linearGradient id="b48" gradientUnits="userSpaceOnUse" x1="357.3" y1="829.4" x2="361.4" y2="875.7"><stop offset="0" stop-color="#505050"/><stop offset="0.04" stop-color="#555555"/><stop offset="0.1" stop-color="#5e5e5e"/><stop offset="0.2" stop-color="#717171"/><stop offset="0.35" stop-color="#8c8c8c"/><stop offset="0.5" stop-color="#a0a0a0"/><stop offset="0.6" stop-color="#a7a7a7"/><stop offset="0.66" stop-color="#a8a8a8"/><stop offset="0.72" stop-color="#a7a7a7"/><stop offset="0.8" stop-color="#a2a2a2"/><stop offset="0.9" stop-color="#959595"/><stop offset="0.96" stop-color="#858585"/><stop offset="1" stop-color="#666666"/></linearGradient><linearGradient id="b49" gradientUnits="userSpaceOnUse" x1="369.6" y1="827.3" x2="377.2" y2="874.4"><stop offset="0" stop-color="#505050"/><stop offset="0.04" stop-color="#545454"/><stop offset="0.1" stop-color="#5e5e5e"/><stop offset="0.2" stop-color="#707070"/><stop offset="0.35" stop-color="#8b8b8b"/><stop offset="0.5" stop-color="#a0a0a0"/><stop offset="0.6" stop-color="#a6a6a6"/><stop offset="0.66" stop-color="#a7a7a7"/><stop offset="0.72" stop-color="#a6a6a6"/><stop offset="0.8" stop-color="#a2a2a2"/><stop offset="0.9" stop-color="#949494"/><stop offset="0.96" stop-color="#858585"/><stop offset="1" stop-color="#666666"/></linearGradient><linearGradient id="b50" gradientUnits="userSpaceOnUse" x1="381.8" y1="824.5" x2="393.0" y2="871.6"><stop offset="0" stop-color="#505050"/><stop offset="0.04" stop-color="#545454"/><stop offset="0.1" stop-color="#5d5d5d"/><stop offset="0.2" stop-color="#707070"/><stop offset="0.35" stop-color="#8b8b8b"/><stop offset="0.5" stop-color="#9f9f9f"/><stop offset="0.6" stop-color="#a6a6a6"/><stop offset="0.66" stop-color="#a7a7a7"/><stop offset="0.72" stop-color="#a6a6a6"/><stop offset="0.8" stop-color="#a1a1a1"/><stop offset="0.9" stop-color="#949494"/><stop offset="0.96" stop-color="#848484"/><stop offset="1" stop-color="#656565"/></linearGradient><linearGradient id="b51" gradientUnits="userSpaceOnUse" x1="394.0" y1="821.0" x2="408.6" y2="867.5"><stop offset="0" stop-color="#505050"/><stop offset="0.04" stop-color="#545454"/><stop offset="0.1" stop-color="#5d5d5d"/><stop offset="0.2" stop-color="#6f6f6f"/><stop offset="0.35" stop-color="#8a8a8a"/><stop offset="0.5" stop-color="#9e9e9e"/><stop offset="0.6" stop-color="#a5a5a5"/><stop offset="0.66" stop-color="#a6a6a6"/><stop offset="0.72" stop-color="#a5a5a5"/><stop offset="0.8" stop-color="#a0a0a0"/><stop offset="0.9" stop-color="#939393"/><stop offset="0.96" stop-color="#838383"/><stop offset="1" stop-color="#646464"/></linearGradient><linearGradient id="b52" gradientUnits="userSpaceOnUse" x1="406.1" y1="817.0" x2="423.4" y2="862.2"><stop offset="0" stop-color="#505050"/><stop offset="0.04" stop-color="#545454"/><stop offset="0.1" stop-color="#5d5d5d"/><stop offset="0.2" stop-color="#6f6f6f"/><stop offset="0.35" stop-color="#8a8a8a"/><stop offset="0.5" stop-color="#9e9e9e"/><stop offset="0.6" stop-color="#a5a5a5"/><stop offset="0.66" stop-color="#a9a9a9"/><stop offset="0.72" stop-color="#a7a7a7"/><stop offset="0.8" stop-color="#a0a0a0"/><stop offset="0.9" stop-color="#929292"/><stop offset="0.96" stop-color="#828282"/><stop offset="1" stop-color="#626262"/></linearGradient><linearGradient id="b53" gradientUnits="userSpaceOnUse" x1="418.0" y1="812.3" x2="437.5" y2="855.9"><stop offset="0" stop-color="#505050"/><stop offset="0.04" stop-color="#545454"/><stop offset="0.1" stop-color="#5d5d5d"/><stop offset="0.2" stop-color="#6f6f6f"/><stop offset="0.35" stop-color="#8a8a8a"/><stop offset="0.5" stop-color="#9d9d9d"/><stop offset="0.6" stop-color="#a6a6a6"/><stop offset="0.66" stop-color="#b0b0b0"/><stop offset="0.72" stop-color="#acacac"/><stop offset="0.8" stop-color="#9f9f9f"/><stop offset="0.9" stop-color="#919191"/><stop offset="0.96" stop-color="#818181"/><stop offset="1" stop-color="#616161"/></linearGradient><linearGradient id="b54" gradientUnits="userSpaceOnUse" x1="429.7" y1="807.2" x2="451.1" y2="848.8"><stop offset="0" stop-color="#505050"/><stop offset="0.04" stop-color="#545454"/><stop offset="0.1" stop-color="#5d5d5d"/><stop offset="0.2" stop-color="#6f6f6f"/><stop offset="0.35" stop-color="#898989"/><stop offset="0.5" stop-color="#9d9d9d"/><stop offset="0.6" stop-color="#a7a7a7"/><stop offset="0.66" stop-color="#b7b7b7"/><stop offset="0.72" stop-color="#b0b0b0"/><stop offset="0.8" stop-color="#9f9f9f"/><stop offset="0.9" stop-color="#909090"/><stop offset="0.96" stop-color="#808080"/><stop offset="1" stop-color="#5f5f5f"/></linearGradient><linearGradient id="b55" gradientUnits="userSpaceOnUse" x1="441.1" y1="801.5" x2="464.2" y2="841.1"><stop offset="0" stop-color="#505050"/><stop offset="0.04" stop-color="#545454"/><stop offset="0.1" stop-color="#5d5d5d"/><stop offset="0.2" stop-color="#6f6f6f"/><stop offset="0.35" stop-color="#898989"/><stop offset="0.5" stop-color="#9c9c9c"/><stop offset="0.6" stop-color="#a8a8a8"/><stop offset="0.66" stop-color="#bdbdbd"/><stop offset="0.72" stop-color="#b5b5b5"/><stop offset="0.8" stop-color="#9f9f9f"/><stop offset="0.9" stop-color="#909090"/><stop offset="0.96" stop-color="#7f7f7f"/><stop offset="1" stop-color="#5e5e5e"/></linearGradient><linearGradient id="b56" gradientUnits="userSpaceOnUse" x1="452.5" y1="795.2" x2="476.6" y2="832.9"><stop offset="0" stop-color="#505050"/><stop offset="0.04" stop-color="#545454"/><stop offset="0.1" stop-color="#5d5d5d"/><stop offset="0.2" stop-color="#6e6e6e"/><stop offset="0.35" stop-color="#898989"/><stop offset="0.5" stop-color="#9c9c9c"/><stop offset="0.6" stop-color="#a9a9a9"/><stop offset="0.66" stop-color="#c4c4c4"/><stop offset="0.72" stop-color="#bababa"/><stop offset="0.8" stop-color="#9e9e9e"/><stop offset="0.9" stop-color="#8f8f8f"/><stop offset="0.96" stop-color="#7e7e7e"/><stop offset="1" stop-color="#5c5c5c"/></linearGradient><linearGradient id="b57" gradientUnits="userSpaceOnUse" x1="463.4" y1="788.5" x2="488.4" y2="824.5"><stop offset="0" stop-color="#505050"/><stop offset="0.04" stop-color="#545454"/><stop offset="0.1" stop-color="#5d5d5d"/><stop offset="0.2" stop-color="#6e6e6e"/><stop offset="0.35" stop-color="#888888"/><stop offset="0.5" stop-color="#9c9c9c"/><stop offset="0.6" stop-color="#aaaaaa"/><stop offset="0.66" stop-color="#cbcbcb"/><stop offset="0.72" stop-color="#bebebe"/><stop offset="0.8" stop-color="#9e9e9e"/><stop offset="0.9" stop-color="#8e8e8e"/><stop offset="0.96" stop-color="#7d7d7d"/><stop offset="1" stop-color="#5b5b5b"/></linearGradient><linearGradient id="b58" gradientUnits="userSpaceOnUse" x1="474.0" y1="781.2" x2="499.9" y2="815.7"><stop offset="0" stop-color="#505050"/><stop offset="0.04" stop-color="#545454"/><stop offset="0.1" stop-color="#5d5d5d"/><stop offset="0.2" stop-color="#6e6e6e"/><stop offset="0.35" stop-color="#888888"/><stop offset="0.5" stop-color="#9b9b9b"/><stop offset="0.6" stop-color="#aaaaaa"/><stop offset="0.66" stop-color="#d0d0d0"/><stop offset="0.72" stop-color="#c2c2c2"/><stop offset="0.8" stop-color="#9d9d9d"/><stop offset="0.9" stop-color="#8d8d8d"/><stop offset="0.96" stop-color="#7c7c7c"/><stop offset="1" stop-color="#595959"/></linearGradient><linearGradient id="b59" gradientUnits="userSpaceOnUse" x1="484.3" y1="773.4" x2="511.1" y2="806.6"><stop offset="0" stop-color="#505050"/><stop offset="0.04" stop-color="#545454"/><stop offset="0.1" stop-color="#5d5d5d"/><stop offset="0.2" stop-color="#6e6e6e"/><stop offset="0.35" stop-color="#888888"/><stop offset="0.5" stop-color="#9b9b9b"/><stop offset="0.6" stop-color="#ababab"/><stop offset="0.66" stop-color="#d4d4d4"/><stop offset="0.72" stop-color="#c5c5c5"/><stop offset="0.8" stop-color="#9d9d9d"/><stop offset="0.9" stop-color="#8d8d8d"/><stop offset="0.96" stop-color="#7b7b7b"/><stop offset="1" stop-color="#585858"/></linearGradient><linearGradient id="b60" gradientUnits="userSpaceOnUse" x1="494.2" y1="765.3" x2="522.0" y2="797.4"><stop offset="0" stop-color="#505050"/><stop offset="0.04" stop-color="#545454"/><stop offset="0.1" stop-color="#5d5d5d"/><stop offset="0.2" stop-color="#6e6e6e"/><stop offset="0.35" stop-color="#878787"/><stop offset="0.5" stop-color="#9a9a9a"/><stop offset="0.6" stop-color="#ababab"/><stop offset="0.66" stop-color="#d9d9d9"/><stop offset="0.72" stop-color="#c8c8c8"/><stop offset="0.8" stop-color="#9c9c9c"/><stop offset="0.9" stop-color="#8c8c8c"/><stop offset="0.96" stop-color="#7a7a7a"/><stop offset="1" stop-color="#565656"/></linearGradient><linearGradient id="b61" gradientUnits="userSpaceOnUse" x1="503.6" y1="756.7" x2="532.8" y2="788.0"><stop offset="0" stop-color="#505050"/><stop offset="0.04" stop-color="#545454"/><stop offset="0.1" stop-color="#5c5c5c"/><stop offset="0.2" stop-color="#6e6e6e"/><stop offset="0.35" stop-color="#878787"/><stop offset="0.5" stop-color="#9a9a9a"/><stop offset="0.6" stop-color="#acacac"/><stop offset="0.66" stop-color="#dddddd"/><stop offset="0.72" stop-color="#cbcbcb"/><stop offset="0.8" stop-color="#9c9c9c"/><stop offset="0.9" stop-color="#8b8b8b"/><stop offset="0.96" stop-color="#797979"/><stop offset="1" stop-color="#555555"/></linearGradient><linearGradient id="b62" gradientUnits="userSpaceOnUse" x1="512.8" y1="747.5" x2="543.4" y2="778.2"><stop offset="0" stop-color="#505050"/><stop offset="0.04" stop-color="#545454"/><stop offset="0.1" stop-color="#5c5c5c"/><stop offset="0.2" stop-color="#6e6e6e"/><stop offset="0.35" stop-color="#878787"/><stop offset="0.5" stop-color="#9a9a9a"/><stop offset="0.6" stop-color="#acacac"/><stop offset="0.66" stop-color="#e2e2e2"/><stop offset="0.72" stop-color="#cecece"/><stop offset="0.8" stop-color="#9c9c9c"/><stop offset="0.9" stop-color="#8b8b8b"/><stop offset="0.96" stop-color="#787878"/><stop offset="1" stop-color="#545454"/></linearGradient><linearGradient id="b63" gradientUnits="userSpaceOnUse" x1="521.5" y1="737.9" x2="554.0" y2="767.9"><stop offset="0" stop-color="#505050"/><stop offset="0.04" stop-color="#545454"/><stop offset="0.1" stop-color="#5c5c5c"/><stop offset="0.2" stop-color="#6d6d6d"/><stop offset="0.35" stop-color="#878787"/><stop offset="0.5" stop-color="#9a9a9a"/><stop offset="0.6" stop-color="#adadad"/><stop offset="0.66" stop-color="#e6e6e6"/><stop offset="0.72" stop-color="#d1d1d1"/><stop offset="0.8" stop-color="#9c9c9c"/><stop offset="0.9" stop-color="#8b8b8b"/><stop offset="0.96" stop-color="#787878"/><stop offset="1" stop-color="#545454"/></linearGradient><linearGradient id="b64" gradientUnits="userSpaceOnUse" x1="529.6" y1="728.1" x2="564.1" y2="757.2"><stop offset="0" stop-color="#505050"/><stop offset="0.04" stop-color="#545454"/><stop offset="0.1" stop-color="#5c5c5c"/><stop offset="0.2" stop-color="#6d6d6d"/><stop offset="0.35" stop-color="#878787"/><stop offset="0.5" stop-color="#999999"/><stop offset="0.6" stop-color="#adadad"/><stop offset="0.66" stop-color="#e9e9e9"/><stop offset="0.72" stop-color="#d3d3d3"/><stop offset="0.8" stop-color="#9c9c9c"/><stop offset="0.9" stop-color="#8a8a8a"/><stop offset="0.96" stop-color="#787878"/><stop offset="1" stop-color="#545454"/></linearGradient><linearGradient id="b65" gradientUnits="userSpaceOnUse" x1="537.1" y1="717.8" x2="573.8" y2="746.1"><stop offset="0" stop-color="#505050"/><stop offset="0.04" stop-color="#545454"/><stop offset="0.1" stop-color="#5c5c5c"/><stop offset="0.2" stop-color="#6d6d6d"/><stop offset="0.35" stop-color="#878787"/><stop offset="0.5" stop-color="#999999"/><stop offset="0.6" stop-color="#adadad"/><stop offset="0.66" stop-color="#eaeaea"/><stop offset="0.72" stop-color="#d4d4d4"/><stop offset="0.8" stop-color="#9b9b9b"/><stop offset="0.9" stop-color="#8a8a8a"/><stop offset="0.96" stop-color="#787878"/><stop offset="1" stop-color="#545454"/></linearGradient><linearGradient id="b66" gradientUnits="userSpaceOnUse" x1="544.2" y1="707.2" x2="583.2" y2="734.4"><stop offset="0" stop-color="#505050"/><stop offset="0.04" stop-color="#545454"/><stop offset="0.1" stop-color="#5c5c5c"/><stop offset="0.2" stop-color="#6d6d6d"/><stop offset="0.35" stop-color="#868686"/><stop offset="0.5" stop-color="#999999"/><stop offset="0.6" stop-color="#adadad"/><stop offset="0.66" stop-color="#ebebeb"/><stop offset="0.72" stop-color="#d5d5d5"/><stop offset="0.8" stop-color="#9b9b9b"/><stop offset="0.9" stop-color="#8a8a8a"/><stop offset="0.96" stop-color="#787878"/><stop offset="1" stop-color="#545454"/></linearGradient><linearGradient id="b67" gradientUnits="userSpaceOnUse" x1="550.6" y1="696.5" x2="592.1" y2="722.0"><stop offset="0" stop-color="#505050"/><stop offset="0.04" stop-color="#545454"/><stop offset="0.1" stop-color="#5c5c5c"/><stop offset="0.2" stop-color="#6d6d6d"/><stop offset="0.35" stop-color="#868686"/><stop offset="0.5" stop-color="#999999"/><stop offset="0.6" stop-color="#adadad"/><stop offset="0.66" stop-color="#ececec"/><stop offset="0.72" stop-color="#d5d5d5"/><stop offset="0.8" stop-color="#9b9b9b"/><stop offset="0.9" stop-color="#8a8a8a"/><stop offset="0.96" stop-color="#787878"/><stop offset="1" stop-color="#545454"/></linearGradient><linearGradient id="b68" gradientUnits="userSpaceOnUse" x1="556.6" y1="685.3" x2="600.4" y2="709.2"><stop offset="0" stop-color="#505050"/><stop offset="0.04" stop-color="#545454"/><stop offset="0.1" stop-color="#5c5c5c"/><stop offset="0.2" stop-color="#6d6d6d"/><stop offset="0.35" stop-color="#868686"/><stop offset="0.5" stop-color="#999999"/><stop offset="0.6" stop-color="#aeaeae"/><stop offset="0.66" stop-color="#ededed"/><stop offset="0.72" stop-color="#d6d6d6"/><stop offset="0.8" stop-color="#9b9b9b"/><stop offset="0.9" stop-color="#8a8a8a"/><stop offset="0.96" stop-color="#787878"/><stop offset="1" stop-color="#545454"/></linearGradient><linearGradient id="b69" gradientUnits="userSpaceOnUse" x1="562.0" y1="673.8" x2="607.9" y2="696.0"><stop offset="0" stop-color="#505050"/><stop offset="0.04" stop-color="#545454"/><stop offset="0.1" stop-color="#5c5c5c"/><stop offset="0.2" stop-color="#6d6d6d"/><stop offset="0.35" stop-color="#878787"/><stop offset="0.5" stop-color="#999999"/><stop offset="0.6" stop-color="#afafaf"/><stop offset="0.66" stop-color="#efefef"/><stop offset="0.72" stop-color="#d8d8d8"/><stop offset="0.8" stop-color="#9c9c9c"/><stop offset="0.9" stop-color="#8a8a8a"/><stop offset="0.96" stop-color="#787878"/><stop offset="1" stop-color="#545454"/></linearGradient><linearGradient id="b70" gradientUnits="userSpaceOnUse" x1="566.7" y1="662.3" x2="614.6" y2="682.4"><stop offset="0" stop-color="#505050"/><stop offset="0.04" stop-color="#545454"/><stop offset="0.1" stop-color="#5d5d5d"/><stop offset="0.2" stop-color="#6e6e6e"/><stop offset="0.35" stop-color="#878787"/><stop offset="0.5" stop-color="#9a9a9a"/><stop offset="0.6" stop-color="#b1b1b1"/><stop offset="0.66" stop-color="#f0f0f0"/><stop offset="0.72" stop-color="#d4d4d4"/><stop offset="0.8" stop-color="#9c9c9c"/><stop offset="0.9" stop-color="#8b8b8b"/><stop offset="0.96" stop-color="#787878"/><stop offset="1" stop-color="#545454"/></linearGradient><linearGradient id="b71" gradientUnits="userSpaceOnUse" x1="570.8" y1="650.5" x2="620.7" y2="668.2"><stop offset="0" stop-color="#505050"/><stop offset="0.04" stop-color="#545454"/><stop offset="0.1" stop-color="#5d5d5d"/><stop offset="0.2" stop-color="#6e6e6e"/><stop offset="0.35" stop-color="#888888"/><stop offset="0.5" stop-color="#9b9b9b"/><stop offset="0.6" stop-color="#b4b4b4"/><stop offset="0.66" stop-color="#efefef"/><stop offset="0.72" stop-color="#cbcbcb"/><stop offset="0.8" stop-color="#9b9b9b"/><stop offset="0.9" stop-color="#8b8b8b"/><stop offset="0.96" stop-color="#787878"/><stop offset="1" stop-color="#545454"/></linearGradient><linearGradient id="b72" gradientUnits="userSpaceOnUse" x1="574.4" y1="638.6" x2="625.8" y2="653.4"><stop offset="0" stop-color="#505050"/><stop offset="0.04" stop-color="#545454"/><stop offset="0.1" stop-color="#5d5d5d"/><stop offset="0.2" stop-color="#6f6f6f"/><stop offset="0.35" stop-color="#898989"/><stop offset="0.5" stop-color="#9c9c9c"/><stop offset="0.6" stop-color="#b8b8b8"/><stop offset="0.66" stop-color="#ececec"/><stop offset="0.72" stop-color="#c3c3c3"/><stop offset="0.8" stop-color="#9b9b9b"/><stop offset="0.9" stop-color="#8b8b8b"/><stop offset="0.96" stop-color="#787878"/><stop offset="1" stop-color="#545454"/></linearGradient><linearGradient id="b73" gradientUnits="userSpaceOnUse" x1="577.3" y1="626.5" x2="630.0" y2="638.2"><stop offset="0" stop-color="#505050"/><stop offset="0.04" stop-color="#545454"/><stop offset="0.1" stop-color="#5d5d5d"/><stop offset="0.2" stop-color="#6f6f6f"/><stop offset="0.35" stop-color="#8a8a8a"/><stop offset="0.5" stop-color="#9d9d9d"/><stop offset="0.6" stop-color="#bbbbbb"/><stop offset="0.66" stop-color="#e8e8e8"/><stop offset="0.72" stop-color="#bcbcbc"/><stop offset="0.8" stop-color="#9b9b9b"/><stop offset="0.9" stop-color="#8b8b8b"/><stop offset="0.96" stop-color="#787878"/><stop offset="1" stop-color="#545454"/></linearGradient><linearGradient id="b74" gradientUnits="userSpaceOnUse" x1="579.5" y1="614.2" x2="633.2" y2="622.8"><stop offset="0" stop-color="#505050"/><stop offset="0.04" stop-color="#545454"/><stop offset="0.1" stop-color="#5d5d5d"/><stop offset="0.2" stop-color="#707070"/><stop offset="0.35" stop-color="#8b8b8b"/><stop offset="0.5" stop-color="#9e9e9e"/><stop offset="0.6" stop-color="#bebebe"/><stop offset="0.66" stop-color="#e3e3e3"/><stop offset="0.72" stop-color="#b6b6b6"/><stop offset="0.8" stop-color="#9b9b9b"/><stop offset="0.9" stop-color="#8b8b8b"/><stop offset="0.96" stop-color="#787878"/><stop offset="1" stop-color="#545454"/></linearGradient><linearGradient id="b75" gradientUnits="userSpaceOnUse" x1="581.1" y1="601.8" x2="635.2" y2="607.4"><stop offset="0" stop-color="#505050"/><stop offset="0.04" stop-color="#545454"/><stop offset="0.1" stop-color="#5e5e5e"/><stop offset="0.2" stop-color="#707070"/><stop offset="0.35" stop-color="#8b8b8b"/><stop offset="0.5" stop-color="#9e9e9e"/><stop offset="0.6" stop-color="#c0c0c0"/><stop offset="0.66" stop-color="#dddddd"/><stop offset="0.72" stop-color="#b1b1b1"/><stop offset="0.8" stop-color="#9b9b9b"/><stop offset="0.9" stop-color="#8b8b8b"/><stop offset="0.96" stop-color="#787878"/><stop offset="1" stop-color="#545454"/></linearGradient><linearGradient id="b76" gradientUnits="userSpaceOnUse" x1="582.0" y1="589.4" x2="636.4" y2="591.8"><stop offset="0" stop-color="#505050"/><stop offset="0.04" stop-color="#545454"/><stop offset="0.1" stop-color="#5e5e5e"/><stop offset="0.2" stop-color="#707070"/><stop offset="0.35" stop-color="#8b8b8b"/><stop offset="0.5" stop-color="#9e9e9e"/><stop offset="0.6" stop-color="#c0c0c0"/><stop offset="0.66" stop-color="#d4d4d4"/><stop offset="0.72" stop-color="#acacac"/><stop offset="0.8" stop-color="#9a9a9a"/><stop offset="0.9" stop-color="#8a8a8a"/><stop offset="0.96" stop-color="#787878"/><stop offset="1" stop-color="#545454"/></linearGradient><linearGradient id="b77" gradientUnits="userSpaceOnUse" x1="582.2" y1="577.0" x2="636.5" y2="576.2"><stop offset="0" stop-color="#505050"/><stop offset="0.04" stop-color="#545454"/><stop offset="0.1" stop-color="#5e5e5e"/><stop offset="0.2" stop-color="#707070"/><stop offset="0.35" stop-color="#8b8b8b"/><stop offset="0.5" stop-color="#9e9e9e"/><stop offset="0.6" stop-color="#bfbfbf"/><stop offset="0.66" stop-color="#cacaca"/><stop offset="0.72" stop-color="#a7a7a7"/><stop offset="0.8" stop-color="#999999"/><stop offset="0.9" stop-color="#898989"/><stop offset="0.96" stop-color="#777777"/><stop offset="1" stop-color="#545454"/></linearGradient><linearGradient id="b78" gradientUnits="userSpaceOnUse" x1="581.7" y1="564.9" x2="635.9" y2="560.9"><stop offset="0" stop-color="#505050"/><stop offset="0.04" stop-color="#545454"/><stop offset="0.1" stop-color="#5e5e5e"/><stop offset="0.2" stop-color="#707070"/><stop offset="0.35" stop-color="#8b8b8b"/><stop offset="0.5" stop-color="#9e9e9e"/><stop offset="0.6" stop-color="#bcbcbc"/><stop offset="0.66" stop-color="#c0c0c0"/><stop offset="0.72" stop-color="#a4a4a4"/><stop offset="0.8" stop-color="#989898"/><stop offset="0.9" stop-color="#888888"/><stop offset="0.96" stop-color="#777777"/><stop offset="1" stop-color="#545454"/></linearGradient><linearGradient id="b79" gradientUnits="userSpaceOnUse" x1="580.5" y1="552.5" x2="634.4" y2="545.6"><stop offset="0" stop-color="#505050"/><stop offset="0.04" stop-color="#545454"/><stop offset="0.1" stop-color="#5e5e5e"/><stop offset="0.2" stop-color="#707070"/><stop offset="0.35" stop-color="#8b8b8b"/><stop offset="0.5" stop-color="#9e9e9e"/><stop offset="0.6" stop-color="#b7b7b7"/><stop offset="0.66" stop-color="#b6b6b6"/><stop offset="0.72" stop-color="#a1a1a1"/><stop offset="0.8" stop-color="#989898"/><stop offset="0.9" stop-color="#888888"/><stop offset="0.96" stop-color="#767676"/><stop offset="1" stop-color="#545454"/></linearGradient><linearGradient id="b80" gradientUnits="userSpaceOnUse" x1="578.6" y1="540.2" x2="632.1" y2="530.5"><stop offset="0" stop-color="#505050"/><stop offset="0.04" stop-color="#555555"/><stop offset="0.1" stop-color="#5e5e5e"/><stop offset="0.2" stop-color="#717171"/><stop offset="0.35" stop-color="#8c8c8c"/><stop offset="0.5" stop-color="#9d9d9d"/><stop offset="0.6" stop-color="#b2b2b2"/><stop offset="0.66" stop-color="#aeaeae"/><stop offset="0.72" stop-color="#9f9f9f"/><stop offset="0.8" stop-color="#979797"/><stop offset="0.9" stop-color="#878787"/><stop offset="0.96" stop-color="#767676"/><stop offset="1" stop-color="#545454"/></linearGradient><linearGradient id="b81" gradientUnits="userSpaceOnUse" x1="576.0" y1="528.3" x2="628.9" y2="515.3"><stop offset="0" stop-color="#515151"/><stop offset="0.04" stop-color="#565656"/><stop offset="0.1" stop-color="#5f5f5f"/><stop offset="0.2" stop-color="#727272"/><stop offset="0.35" stop-color="#8c8c8c"/><stop offset="0.5" stop-color="#9d9d9d"/><stop offset="0.6" stop-color="#adadad"/><stop offset="0.66" stop-color="#a8a8a8"/><stop offset="0.72" stop-color="#9e9e9e"/><stop offset="0.8" stop-color="#969696"/><stop offset="0.9" stop-color="#878787"/><stop offset="0.96" stop-color="#767676"/><stop offset="1" stop-color="#555555"/></linearGradient><linearGradient id="b82" gradientUnits="userSpaceOnUse" x1="572.8" y1="516.5" x2="624.8" y2="500.4"><stop offset="0" stop-color="#515151"/><stop offset="0.04" stop-color="#575757"/><stop offset="0.1" stop-color="#606060"/><stop offset="0.2" stop-color="#737373"/><stop offset="0.35" stop-color="#8c8c8c"/><stop offset="0.5" stop-color="#9c9c9c"/><stop offset="0.6" stop-color="#aaaaaa"/><stop offset="0.66" stop-color="#a4a4a4"/><stop offset="0.72" stop-color="#9c9c9c"/><stop offset="0.8" stop-color="#959595"/><stop offset="0.9" stop-color="#868686"/><stop offset="0.96" stop-color="#767676"/><stop offset="1" stop-color="#565656"/></linearGradient><linearGradient id="b83" gradientUnits="userSpaceOnUse" x1="568.9" y1="505.0" x2="619.8" y2="485.8"><stop offset="0" stop-color="#525252"/><stop offset="0.04" stop-color="#575757"/><stop offset="0.1" stop-color="#616161"/><stop offset="0.2" stop-color="#737373"/><stop offset="0.35" stop-color="#8b8b8b"/><stop offset="0.5" stop-color="#9a9a9a"/><stop offset="0.6" stop-color="#a4a4a4"/><stop offset="0.66" stop-color="#9f9f9f"/><stop offset="0.72" stop-color="#999999"/><stop offset="0.8" stop-color="#939393"/><stop offset="0.9" stop-color="#848484"/><stop offset="0.96" stop-color="#757575"/><stop offset="1" stop-color="#575757"/></linearGradient><linearGradient id="b84" gradientUnits="userSpaceOnUse" x1="564.2" y1="493.6" x2="613.9" y2="471.3"><stop offset="0" stop-color="#525252"/><stop offset="0.04" stop-color="#585858"/><stop offset="0.1" stop-color="#626262"/><stop offset="0.2" stop-color="#737373"/><stop offset="0.35" stop-color="#8a8a8a"/><stop offset="0.5" stop-color="#989898"/><stop offset="0.6" stop-color="#9f9f9f"/><stop offset="0.66" stop-color="#9b9b9b"/><stop offset="0.72" stop-color="#979797"/><stop offset="0.8" stop-color="#919191"/><stop offset="0.9" stop-color="#838383"/><stop offset="0.96" stop-color="#747474"/><stop offset="1" stop-color="#585858"/></linearGradient><linearGradient id="b85" gradientUnits="userSpaceOnUse" x1="558.8" y1="482.6" x2="606.8" y2="457.1"><stop offset="0" stop-color="#535353"/><stop offset="0.04" stop-color="#595959"/><stop offset="0.1" stop-color="#626262"/><stop offset="0.2" stop-color="#737373"/><stop offset="0.35" stop-color="#898989"/><stop offset="0.5" stop-color="#969696"/><stop offset="0.6" stop-color="#9a9a9a"/><stop offset="0.66" stop-color="#979797"/><stop offset="0.72" stop-color="#949494"/><stop offset="0.8" stop-color="#8f8f8f"/><stop offset="0.9" stop-color="#828282"/><stop offset="0.96" stop-color="#737373"/><stop offset="1" stop-color="#585858"/></linearGradient><linearGradient id="b86" gradientUnits="userSpaceOnUse" x1="552.9" y1="472.3" x2="598.8" y2="443.3"><stop offset="0" stop-color="#535353"/><stop offset="0.04" stop-color="#5a5a5a"/><stop offset="0.1" stop-color="#636363"/><stop offset="0.2" stop-color="#737373"/><stop offset="0.35" stop-color="#888888"/><stop offset="0.5" stop-color="#949494"/><stop offset="0.6" stop-color="#969696"/><stop offset="0.66" stop-color="#959595"/><stop offset="0.72" stop-color="#929292"/><stop offset="0.8" stop-color="#8d8d8d"/><stop offset="0.9" stop-color="#808080"/><stop offset="0.96" stop-color="#737373"/><stop offset="1" stop-color="#595959"/></linearGradient><linearGradient id="b87" gradientUnits="userSpaceOnUse" x1="546.3" y1="462.5" x2="590.1" y2="430.5"><stop offset="0" stop-color="#545454"/><stop offset="0.04" stop-color="#5a5a5a"/><stop offset="0.1" stop-color="#636363"/><stop offset="0.2" stop-color="#737373"/><stop offset="0.35" stop-color="#878787"/><stop offset="0.5" stop-color="#929292"/><stop offset="0.6" stop-color="#939393"/><stop offset="0.66" stop-color="#929292"/><stop offset="0.72" stop-color="#909090"/><stop offset="0.8" stop-color="#8b8b8b"/><stop offset="0.9" stop-color="#7f7f7f"/><stop offset="0.96" stop-color="#727272"/><stop offset="1" stop-color="#5a5a5a"/></linearGradient><linearGradient id="b88" gradientUnits="userSpaceOnUse" x1="538.9" y1="453.1" x2="580.7" y2="418.4"><stop offset="0" stop-color="#545454"/><stop offset="0.04" stop-color="#5b5b5b"/><stop offset="0.1" stop-color="#646464"/><stop offset="0.2" stop-color="#727272"/><stop offset="0.35" stop-color="#868686"/><stop offset="0.5" stop-color="#909090"/><stop offset="0.6" stop-color="#919191"/><stop offset="0.66" stop-color="#909090"/><stop offset="0.72" stop-color="#8e8e8e"/><stop offset="0.8" stop-color="#898989"/><stop offset="0.9" stop-color="#7d7d7d"/><stop offset="0.96" stop-color="#727272"/><stop offset="1" stop-color="#5b5b5b"/></linearGradient><linearGradient id="b89" gradientUnits="userSpaceOnUse" x1="531.0" y1="444.5" x2="570.7" y2="406.7"><stop offset="0" stop-color="#555555"/><stop offset="0.04" stop-color="#5c5c5c"/><stop offset="0.1" stop-color="#646464"/><stop offset="0.2" stop-color="#727272"/><stop offset="0.35" stop-color="#848484"/><stop offset="0.5" stop-color="#8e8e8e"/><stop offset="0.6" stop-color="#8f8f8f"/><stop offset="0.66" stop-color="#8e8e8e"/><stop offset="0.72" stop-color="#8b8b8b"/><stop offset="0.8" stop-color="#878787"/><stop offset="0.9" stop-color="#7c7c7c"/><stop offset="0.96" stop-color="#717171"/><stop offset="1" stop-color="#5c5c5c"/></linearGradient><linearGradient id="b90" gradientUnits="userSpaceOnUse" x1="522.5" y1="436.5" x2="560.1" y2="395.7"><stop offset="0" stop-color="#555555"/><stop offset="0.04" stop-color="#5c5c5c"/><stop offset="0.1" stop-color="#656565"/><stop offset="0.2" stop-color="#727272"/><stop offset="0.35" stop-color="#848484"/><stop offset="0.5" stop-color="#8d8d8d"/><stop offset="0.6" stop-color="#8d8d8d"/><stop offset="0.66" stop-color="#8c8c8c"/><stop offset="0.72" stop-color="#8a8a8a"/><stop offset="0.8" stop-color="#858585"/><stop offset="0.9" stop-color="#7b7b7b"/><stop offset="0.96" stop-color="#717171"/><stop offset="1" stop-color="#5c5c5c"/></linearGradient><linearGradient id="b91" gradientUnits="userSpaceOnUse" x1="513.4" y1="429.3" x2="549.2" y2="385.3"><stop offset="0" stop-color="#565656"/><stop offset="0.04" stop-color="#5d5d5d"/><stop offset="0.1" stop-color="#666666"/><stop offset="0.2" stop-color="#737373"/><stop offset="0.35" stop-color="#848484"/><stop offset="0.5" stop-color="#8c8c8c"/><stop offset="0.6" stop-color="#8c8c8c"/><stop offset="0.66" stop-color="#8b8b8b"/><stop offset="0.72" stop-color="#898989"/><stop offset="0.8" stop-color="#848484"/><stop offset="0.9" stop-color="#7b7b7b"/><stop offset="0.96" stop-color="#717171"/><stop offset="1" stop-color="#5d5d5d"/></linearGradient><linearGradient id="b92" gradientUnits="userSpaceOnUse" x1="503.7" y1="422.7" x2="538.1" y2="375.5"><stop offset="0" stop-color="#565656"/><stop offset="0.04" stop-color="#5e5e5e"/><stop offset="0.1" stop-color="#666666"/><stop offset="0.2" stop-color="#737373"/><stop offset="0.35" stop-color="#838383"/><stop offset="0.5" stop-color="#8b8b8b"/><stop offset="0.6" stop-color="#8b8b8b"/><stop offset="0.66" stop-color="#8a8a8a"/><stop offset="0.72" stop-color="#888888"/><stop offset="0.8" stop-color="#848484"/><stop offset="0.9" stop-color="#7a7a7a"/><stop offset="0.96" stop-color="#717171"/><stop offset="1" stop-color="#5e5e5e"/></linearGradient><linearGradient id="b93" gradientUnits="userSpaceOnUse" x1="493.5" y1="416.8" x2="526.7" y2="366.2"><stop offset="0" stop-color="#575757"/><stop offset="0.04" stop-color="#5f5f5f"/><stop offset="0.1" stop-color="#676767"/><stop offset="0.2" stop-color="#747474"/><stop offset="0.35" stop-color="#838383"/><stop offset="0.5" stop-color="#8a8a8a"/><stop offset="0.6" stop-color="#8a8a8a"/><stop offset="0.66" stop-color="#898989"/><stop offset="0.72" stop-color="#878787"/><stop offset="0.8" stop-color="#838383"/><stop offset="0.9" stop-color="#7a7a7a"/><stop offset="0.96" stop-color="#717171"/><stop offset="1" stop-color="#5f5f5f"/></linearGradient><linearGradient id="b94" gradientUnits="userSpaceOnUse" x1="482.9" y1="411.6" x2="515.2" y2="357.3"><stop offset="0" stop-color="#585858"/><stop offset="0.04" stop-color="#606060"/><stop offset="0.1" stop-color="#686868"/><stop offset="0.2" stop-color="#747474"/><stop offset="0.35" stop-color="#838383"/><stop offset="0.5" stop-color="#898989"/><stop offset="0.6" stop-color="#898989"/><stop offset="0.66" stop-color="#888888"/><stop offset="0.72" stop-color="#868686"/><stop offset="0.8" stop-color="#828282"/><stop offset="0.9" stop-color="#797979"/><stop offset="0.96" stop-color="#717171"/><stop offset="1" stop-color="#606060"/></linearGradient><linearGradient id="b95" gradientUnits="userSpaceOnUse" x1="472.1" y1="407.2" x2="503.9" y2="348.9"><stop offset="0" stop-color="#595959"/><stop offset="0.04" stop-color="#616161"/><stop offset="0.1" stop-color="#696969"/><stop offset="0.2" stop-color="#757575"/><stop offset="0.35" stop-color="#828282"/><stop offset="0.5" stop-color="#888888"/><stop offset="0.6" stop-color="#888888"/><stop offset="0.66" stop-color="#878787"/><stop offset="0.72" stop-color="#858585"/><stop offset="0.8" stop-color="#818181"/><stop offset="0.9" stop-color="#797979"/><stop offset="0.96" stop-color="#707070"/><stop offset="1" stop-color="#606060"/></linearGradient><linearGradient id="b96" gradientUnits="userSpaceOnUse" x1="461.3" y1="403.4" x2="492.6" y2="340.7"><stop offset="0" stop-color="#595959"/><stop offset="0.04" stop-color="#626262"/><stop offset="0.1" stop-color="#6a6a6a"/><stop offset="0.2" stop-color="#757575"/><stop offset="0.35" stop-color="#828282"/><stop offset="0.5" stop-color="#878787"/><stop offset="0.6" stop-color="#878787"/><stop offset="0.66" stop-color="#868686"/><stop offset="0.72" stop-color="#848484"/><stop offset="0.8" stop-color="#808080"/><stop offset="0.9" stop-color="#797979"/><stop offset="0.96" stop-color="#707070"/><stop offset="1" stop-color="#616161"/></linearGradient><linearGradient id="b97" gradientUnits="userSpaceOnUse" x1="450.3" y1="400.3" x2="481.7" y2="332.8"><stop offset="0" stop-color="#5a5a5a"/><stop offset="0.04" stop-color="#636363"/><stop offset="0.1" stop-color="#6b6b6b"/><stop offset="0.2" stop-color="#757575"/><stop offset="0.35" stop-color="#828282"/><stop offset="0.5" stop-color="#868686"/><stop offset="0.6" stop-color="#868686"/><stop offset="0.66" stop-color="#858585"/><stop offset="0.72" stop-color="#838383"/><stop offset="0.8" stop-color="#7f7f7f"/><stop offset="0.9" stop-color="#787878"/><stop offset="0.96" stop-color="#707070"/><stop offset="1" stop-color="#626262"/></linearGradient><linearGradient id="b98" gradientUnits="userSpaceOnUse" x1="439.3" y1="397.8" x2="471.2" y2="325.2"><stop offset="0" stop-color="#5b5b5b"/><stop offset="0.04" stop-color="#646464"/><stop offset="0.1" stop-color="#6b6b6b"/><stop offset="0.2" stop-color="#767676"/><stop offset="0.35" stop-color="#818181"/><stop offset="0.5" stop-color="#858585"/><stop offset="0.6" stop-color="#858585"/><stop offset="0.66" stop-color="#848484"/><stop offset="0.72" stop-color="#828282"/><stop offset="0.8" stop-color="#7f7f7f"/><stop offset="0.9" stop-color="#787878"/><stop offset="0.96" stop-color="#717171"/><stop offset="1" stop-color="#636363"/></linearGradient><linearGradient id="b99" gradientUnits="userSpaceOnUse" x1="421.9" y1="395.4" x2="456.5" y2="314.2"><stop offset="0" stop-color="#5c5c5c"/><stop offset="0.04" stop-color="#656565"/><stop offset="0.1" stop-color="#6c6c6c"/><stop offset="0.2" stop-color="#767676"/><stop offset="0.35" stop-color="#818181"/><stop offset="0.5" stop-color="#848484"/><stop offset="0.6" stop-color="#848484"/><stop offset="0.66" stop-color="#838383"/><stop offset="0.72" stop-color="#818181"/><stop offset="0.8" stop-color="#7e7e7e"/><stop offset="0.9" stop-color="#777777"/><stop offset="0.96" stop-color="#717171"/><stop offset="1" stop-color="#646464"/></linearGradient></defs>
<path d="M300.0 328.1L297.8 331.2L295.6 334.3L293.4 337.3L291.1 340.4L288.8 343.4L286.5 346.4L284.2 349.4L281.8 352.4L279.4 355.4L277.0 358.4L274.6 361.3L272.2 364.2L269.7 367.2L267.2 370.1L264.7 373.0L262.2 375.9L259.7 378.8L257.2 381.7L254.7 384.5L252.1 387.4L249.6 390.3L247.1 393.1L244.5 396.0L241.9 398.9L239.4 401.7L236.8 404.6L234.3 407.5L231.7 410.3L229.2 413.2L226.7 416.1L224.1 419.0L221.6 421.8L219.1 424.7L216.6 427.6L214.1 430.6L211.6 433.5L209.2 436.4L206.7 439.3L204.3 442.3L201.9 445.3L199.5 448.2L197.2 451.2L194.8 454.2L192.5 457.3L190.2 460.3L188.0 463.4L185.7 466.5L183.5 469.6L181.3 472.7L179.2 475.8L177.1 479.0L175.0 482.2L173.0 485.4L171.0 488.6L169.0 491.9L167.1 495.2L165.2 498.5L163.3 501.8L161.5 505.1L159.7 508.5L157.9 511.9L156.2 515.3L154.5 518.7L152.9 522.2L151.3 525.6L149.7 529.1L148.2 532.6L146.7 536.1L145.3 539.7L143.9 543.2L142.6 546.8L141.2 550.4L140.0 554.0L138.7 557.6L137.5 561.3L136.4 564.9L135.3 568.6L134.2 572.3L133.2 576.0L132.2 579.7L131.3 583.5L130.4 587.2L129.6 591.0L128.8 594.8L128.0 598.6L127.3 602.4L126.7 606.2L126.1 610.0L125.6 613.8L125.1 617.7L124.7 621.5L124.3 625.3L124.0 629.2L123.8 633.0L123.6 636.8L123.5 640.7L123.5 644.5L123.5 648.3L123.6 652.1L123.8 656.0L124.0 659.8L124.3 663.5L124.7 667.3L125.2 671.1L125.7 674.9L126.3 678.6L126.9 682.4L127.6 686.1L128.4 689.8L129.2 693.5L130.1 697.2L131.1 700.9L132.1 704.5L133.2 708.2L134.3 711.8L135.5 715.4L136.8 719.0L138.1 722.5L139.5 726.1L140.9 729.6L142.4 733.1L144.0 736.5L145.6 740.0L147.3 743.4L149.0 746.8L150.8 750.2L152.6 753.5L154.5 756.8L156.4 760.1L158.4 763.3L160.5 766.6L162.5 769.7L164.7 772.9L166.9 776.0L169.1 779.1L171.4 782.2L173.8 785.2L176.2 788.2L178.6 791.1L181.1 794.0L183.6 796.9L186.2 799.8L188.8 802.6L191.5 805.3L194.2 808.0L196.9 810.7L199.7 813.3L202.6 815.9L205.5 818.4L208.4 820.9L211.4 823.4L214.4 825.8L217.4 828.2L220.5 830.5L223.6 832.7L226.8 834.9L230.0 837.1L233.2 839.2L236.5 841.3L239.8 843.3L243.1 845.2L246.5 847.1L249.9 849.0L253.3 850.8L256.7 852.5L260.2 854.2L263.7 855.8L267.2 857.4L270.8 858.9L274.3 860.3L277.9 861.7L281.5 863.0L285.2 864.3L288.8 865.5L292.5 866.6L296.2 867.7L299.9 868.7L303.6 869.7L307.3 870.6L311.0 871.4L314.7 872.2L318.5 872.9L322.3 873.5L326.0 874.0L329.8 874.5L333.6 875.0L337.3 875.3L341.1 875.6L344.9 875.8L348.7 875.9L352.5 876.0L356.2 876.0L360.0 875.9L363.8 875.7L367.6 875.5L371.3 875.2L375.1 874.8L378.8 874.3L382.6 873.8L386.3 873.2L390.0 872.5L393.7 871.7L397.4 870.8L401.1 869.9L404.7 868.8L408.4 867.7L412.0 866.6L415.6 865.3L419.2 864.0L422.7 862.6L426.3 861.1L429.8 859.6L433.3 858.0L436.8 856.4L440.3 854.7L443.7 852.9L447.1 851.1L450.5 849.3L453.9 847.4L457.2 845.4L460.5 843.4L463.8 841.4L467.1 839.3L470.3 837.2L473.5 835.1L476.7 832.9L479.9 830.7L483.0 828.5L486.1 826.3L489.1 824.0L492.2 821.7L495.2 819.4L498.2 817.0L501.2 814.7L504.2 812.3L507.2 809.9L510.1 807.5L513.1 805.0L516.0 802.6L518.9 800.1L521.8 797.6L524.7 795.1L527.6 792.6L530.5 790.1L533.4 787.5L536.2 785.0L539.0 782.4L541.8 779.8L544.6 777.2L547.3 774.5L550.1 771.8L552.8 769.1L555.5 766.4L558.1 763.7L560.8 760.9L563.4 758.1L565.9 755.3L568.5 752.4L571.0 749.5L573.5 746.6L575.9 743.7L578.3 740.7L580.7 737.8L583.0 734.7L585.3 731.7L587.6 728.6L589.8 725.5L592.0 722.3L594.1 719.2L596.2 716.0L598.3 712.8L600.3 709.5L602.3 706.2L604.2 702.9L606.0 699.6L607.9 696.3L609.6 692.9L611.4 689.5L613.0 686.1L614.7 682.6L616.2 679.2L617.7 675.7L619.2 672.2L620.6 668.6L622.0 665.1L623.3 661.5L624.5 657.9L625.7 654.3L626.8 650.6L627.9 647.0L628.9 643.3L629.8 639.6L630.7 635.9L631.5 632.2L632.3 628.4L633.0 624.7L633.6 620.9L634.2 617.1L634.7 613.3L635.1 609.5L635.5 605.7L635.9 601.8L636.1 598.0L636.4 594.2L636.5 590.3L636.6 586.5L636.7 582.6L636.7 578.8L636.6 574.9L636.5 571.1L636.4 567.2L636.1 563.4L635.9 559.5L635.6 555.7L635.2 551.9L634.8 548.0L634.3 544.2L633.8 540.4L633.2 536.6L632.6 532.9L631.9 529.1L631.2 525.3L630.4 521.6L629.6 517.9L628.7 514.2L627.8 510.5L626.8 506.8L625.7 503.1L624.6 499.5L623.5 495.9L622.3 492.2L621.0 488.7L619.7 485.1L618.3 481.6L616.9 478.0L615.4 474.5L613.9 471.1L612.3 467.6L610.6 464.2L608.9 460.8L607.2 457.4L605.3 454.1L603.5 450.8L601.5 447.5L599.5 444.3L597.5 441.0L595.4 437.9L593.2 434.7L591.0 431.6L588.8 428.5L586.4 425.4L584.1 422.4L581.7 419.4L579.3 416.4L576.8 413.5L574.3 410.6L571.7 407.7L569.1 404.9L566.5 402.0L563.8 399.3L561.1 396.5L558.4 393.8L555.6 391.1L552.8 388.5L550.0 385.9L547.2 383.3L544.3 380.8L541.4 378.3L538.5 375.8L535.6 373.3L532.6 370.9L529.7 368.5L526.7 366.1L523.7 363.8L520.7 361.4L517.6 359.1L514.6 356.8L511.6 354.5L508.5 352.3L505.4 350.0L502.3 347.7L499.3 345.5L496.2 343.3L493.1 341.0L490.0 338.8L486.9 336.6L483.8 334.3L480.7 332.1L477.6 329.9L474.5 327.6L471.4 325.4L468.3 323.1L465.3 320.9L462.2 318.6L459.1 316.3L456.1 314.0L453.0 311.7L450.0 309.4L447.0 307.0L410.1 394.1L413.1 394.3L416.2 394.5L419.2 394.8L422.3 395.1L425.4 395.4L428.4 395.9L431.5 396.3L434.6 396.8L437.7 397.4L440.8 398.0L443.9 398.7L446.9 399.4L450.0 400.1L453.1 400.9L456.1 401.8L459.2 402.7L462.2 403.6L465.3 404.6L468.3 405.7L471.3 406.8L474.3 407.9L477.2 409.1L480.2 410.3L483.1 411.6L486.0 412.9L488.8 414.3L491.7 415.8L494.5 417.2L497.3 418.8L500.0 420.4L502.7 422.0L505.4 423.7L508.0 425.4L510.6 427.2L513.2 429.0L515.7 430.9L518.1 432.8L520.6 434.8L522.9 436.8L525.3 438.8L527.5 441.0L529.8 443.1L532.0 445.3L534.1 447.6L536.2 449.9L538.2 452.2L540.2 454.6L542.2 457.0L544.1 459.4L545.9 461.9L547.8 464.4L549.5 467.0L551.2 469.6L552.9 472.2L554.5 474.9L556.1 477.6L557.6 480.3L559.1 483.0L560.6 485.8L562.0 488.6L563.3 491.5L564.6 494.3L565.8 497.2L567.1 500.1L568.2 503.0L569.3 506.0L570.4 508.9L571.4 511.9L572.4 514.9L573.3 518.0L574.2 521.0L575.0 524.1L575.8 527.1L576.6 530.2L577.3 533.3L577.9 536.4L578.5 539.5L579.1 542.6L579.6 545.8L580.1 548.9L580.5 552.0L580.9 555.2L581.2 558.3L581.5 561.5L581.7 564.6L581.9 567.8L582.1 570.9L582.2 574.1L582.2 577.2L582.3 580.4L582.2 583.5L582.1 586.7L582.0 589.8L581.9 592.9L581.7 596.1L581.4 599.2L581.1 602.3L580.8 605.4L580.4 608.5L580.0 611.6L579.5 614.7L579.0 617.8L578.4 620.9L577.9 623.9L577.2 627.0L576.6 630.0L575.8 633.1L575.1 636.1L574.3 639.1L573.5 642.1L572.6 645.1L571.7 648.1L570.7 651.1L569.8 654.1L568.7 657.0L567.7 659.9L566.6 662.9L565.4 665.8L564.3 668.7L563.1 671.6L561.8 674.4L560.5 677.3L559.2 680.1L557.9 682.9L556.5 685.7L555.0 688.5L553.6 691.3L552.1 694.0L550.6 696.8L549.0 699.5L547.4 702.2L545.8 704.9L544.1 707.5L542.4 710.2L540.7 712.8L538.9 715.4L537.2 717.9L535.3 720.5L533.5 723.0L531.6 725.5L529.7 728.0L527.7 730.5L525.8 732.9L523.8 735.4L521.7 737.8L519.7 740.1L517.6 742.5L515.5 744.8L513.3 747.1L511.1 749.4L508.9 751.6L506.7 753.8L504.4 756.0L502.2 758.2L499.9 760.3L497.5 762.4L495.2 764.5L492.8 766.6L490.4 768.6L488.0 770.6L485.5 772.6L483.0 774.6L480.5 776.5L478.0 778.4L475.5 780.2L472.9 782.1L470.3 783.9L467.7 785.7L465.1 787.4L462.5 789.2L459.8 790.8L457.1 792.5L454.4 794.1L451.7 795.7L449.0 797.3L446.2 798.8L443.4 800.4L440.7 801.8L437.9 803.3L435.0 804.7L432.2 806.1L429.4 807.4L426.5 808.7L423.6 810.0L420.7 811.3L417.8 812.5L414.9 813.7L412.0 814.8L409.1 816.0L406.1 817.0L403.1 818.1L400.2 819.1L397.2 820.1L394.2 821.0L391.2 822.0L388.2 822.8L385.1 823.7L382.1 824.5L379.1 825.2L376.0 826.0L373.0 826.7L369.9 827.3L366.8 827.9L363.8 828.5L360.7 829.0L357.6 829.5L354.5 829.9L351.4 830.3L348.3 830.6L345.2 830.9L342.1 831.1L339.0 831.2L335.8 831.3L332.7 831.3L329.6 831.2L326.5 831.1L323.4 830.9L320.2 830.6L317.1 830.3L314.0 829.9L310.9 829.4L307.7 828.9L304.6 828.2L301.5 827.5L298.5 826.8L295.4 825.9L292.3 825.0L289.3 824.1L286.3 823.0L283.3 821.9L280.3 820.8L277.4 819.6L274.5 818.3L271.6 816.9L268.8 815.5L266.0 814.1L263.2 812.5L260.5 811.0L257.8 809.3L255.2 807.6L252.6 805.9L250.1 804.1L247.6 802.2L245.1 800.3L242.7 798.4L240.4 796.4L238.0 794.3L235.8 792.2L233.5 790.1L231.4 787.9L229.2 785.7L227.1 783.4L225.1 781.1L223.1 778.8L221.1 776.4L219.2 773.9L217.3 771.5L215.5 768.9L213.7 766.4L212.0 763.8L210.3 761.2L208.6 758.6L207.0 755.9L205.5 753.2L203.9 750.4L202.5 747.7L201.1 744.9L199.7 742.1L198.3 739.2L197.1 736.3L195.8 733.4L194.6 730.5L193.5 727.6L192.4 724.6L191.3 721.6L190.3 718.6L189.3 715.6L188.4 712.6L187.5 709.5L186.7 706.5L185.9 703.4L185.2 700.3L184.5 697.2L183.9 694.1L183.3 691.0L182.7 687.8L182.2 684.7L181.8 681.5L181.4 678.4L181.0 675.2L180.7 672.1L180.4 668.9L180.2 665.7L180.0 662.6L179.9 659.4L179.8 656.2L179.7 653.1L179.7 649.9L179.8 646.8L179.9 643.6L180.0 640.5L180.2 637.3L180.5 634.2L180.8 631.1L181.1 628.0L181.5 624.9L181.9 621.8L182.4 618.7L182.9 615.6L183.4 612.5L184.0 609.5L184.6 606.4L185.3 603.4L186.0 600.3L186.8 597.3L187.6 594.3L188.4 591.3L189.3 588.3L190.2 585.3L191.1 582.3L192.1 579.3L193.1 576.4L194.2 573.4L195.3 570.5L196.4 567.6L197.5 564.6L198.7 561.7L200.0 558.9L201.2 556.0L202.5 553.1L203.9 550.3L205.2 547.4L206.6 544.6L208.0 541.8L209.5 539.0L211.0 536.2L212.5 533.5L214.0 530.7L215.6 528.0L217.2 525.3L218.8 522.6L220.4 519.9L222.1 517.2L223.8 514.6L225.5 511.9L227.3 509.3L229.1 506.7L230.9 504.1L232.7 501.5L234.5 499.0L236.4 496.4L238.3 493.9L240.2 491.4L242.1 488.9L244.1 486.4L246.1 484.0L248.1 481.6L250.1 479.2L252.1 476.8L254.2 474.4L256.3 472.1L258.4 469.7L260.5 467.4L262.6 465.2L264.8 462.9L267.0 460.7L269.2 458.5L271.4 456.3L273.7 454.1L275.9 452.0L278.2 449.9L280.5 447.8L282.9 445.7L285.3 443.7L287.6 441.7L290.1 439.7L292.5 437.8L294.9 435.9L297.4 434.0L299.9 432.1L302.5 430.3L305.0 428.5L307.6 426.7L310.2 425.0L312.8 423.3L315.5 421.6L318.1 420.0L320.9 418.4L323.6 416.9L326.3 415.3L329.1 413.8L331.9 412.4L334.7 410.9L337.6 409.6L340.5 408.2L343.4 406.9L346.3 405.6L349.3 404.4L352.2 403.2Z" fill="#666"/>
<path d="M352.2 403.2L300.0 328.1L279.7 355.5L329.0 413.5Z" fill="url(#b0)"/>
<path d="M334.4 411.1L284.4 349.2L274.0 362.0L321.4 418.0Z" fill="url(#b1)"/>
<path d="M324.4 416.4L276.4 359.1L265.8 371.7L311.3 424.2Z" fill="url(#b2)"/>
<path d="M314.3 422.4L268.3 368.8L257.1 381.9L301.2 431.0Z" fill="url(#b3)"/>
<path d="M304.3 429.0L259.7 378.9L247.8 392.3L291.7 438.3Z" fill="url(#b4)"/>
<path d="M294.6 436.2L250.6 389.2L238.7 402.6L282.4 446.0Z" fill="url(#b5)"/>
<path d="M285.2 443.7L241.4 399.5L229.5 412.9L273.1 454.5Z" fill="url(#b6)"/>
<path d="M275.9 452.0L232.2 409.8L220.4 423.2L263.9 463.6Z" fill="url(#b7)"/>
<path d="M266.7 460.9L223.1 420.1L211.0 434.2L255.5 472.7Z" fill="url(#b8)"/>
<path d="M258.1 470.0L213.8 430.9L201.5 445.6L247.0 482.7Z" fill="url(#b9)"/>
<path d="M249.6 479.7L204.4 442.2L192.5 457.2L239.3 492.4Z" fill="url(#b10)"/>
<path d="M241.7 489.5L195.2 453.8L183.7 469.1L231.5 503.0Z" fill="url(#b11)"/>
<path d="M233.9 499.9L186.4 465.5L175.1 481.7L224.2 513.8Z" fill="url(#b12)"/>
<path d="M226.4 510.6L177.7 478.0L167.2 494.7L217.6 524.3Z" fill="url(#b13)"/>
<path d="M219.7 521.2L169.6 490.8L159.8 508.0L211.4 535.3Z" fill="url(#b14)"/>
<path d="M213.3 532.0L162.1 504.0L153.0 521.6L205.4 546.9Z" fill="url(#b15)"/>
<path d="M207.2 543.5L155.1 517.6L146.8 535.5L200.1 558.2Z" fill="url(#b16)"/>
<path d="M201.8 554.8L148.7 531.4L141.3 549.8L195.4 569.8Z" fill="url(#b17)"/>
<path d="M196.9 566.3L143.0 545.5L136.4 564.3L191.2 581.5Z" fill="url(#b18)"/>
<path d="M192.5 578.0L138.0 560.0L132.4 578.4L187.6 593.5Z" fill="url(#b19)"/>
<path d="M188.8 589.9L133.7 574.1L128.9 593.5L184.7 605.6Z" fill="url(#b20)"/>
<path d="M185.6 602.0L130.0 589.1L126.1 608.7L182.4 617.8Z" fill="url(#b21)"/>
<path d="M183.1 614.2L127.0 604.2L124.2 624.0L180.8 629.7Z" fill="url(#b22)"/>
<path d="M181.3 626.1L124.9 619.5L123.3 640.0L179.8 642.3Z" fill="url(#b23)"/>
<path d="M180.2 638.6L123.7 635.3L123.6 656.5L179.6 654.3Z" fill="url(#b24)"/>
<path d="M179.7 650.7L123.6 651.6L125.0 671.9L180.1 666.6Z" fill="url(#b25)"/>
<path d="M180.0 662.9L124.7 667.2L127.8 688.0L181.3 678.8Z" fill="url(#b26)"/>
<path d="M181.0 675.1L127.1 683.2L131.5 703.1L183.1 690.9Z" fill="url(#b27)"/>
<path d="M182.6 687.3L130.4 698.5L136.2 718.0L185.8 703.4Z" fill="url(#b28)"/>
<path d="M185.1 699.7L134.9 713.5L142.0 732.6L189.0 715.1Z" fill="url(#b29)"/>
<path d="M188.1 711.6L140.4 728.2L148.7 746.8L193.0 726.7Z" fill="url(#b30)"/>
<path d="M191.9 723.2L146.8 742.5L156.1 759.9L197.6 738.0Z" fill="url(#b31)"/>
<path d="M196.3 734.6L154.0 755.9L164.3 772.7L203.2 749.4Z" fill="url(#b32)"/>
<path d="M201.6 745.9L161.9 768.8L173.4 785.0L209.4 760.2Z" fill="url(#b33)"/>
<path d="M207.6 756.9L170.7 781.3L183.2 796.7L216.0 770.0Z" fill="url(#b34)"/>
<path d="M214.1 767.0L180.3 793.2L193.7 807.8L223.7 779.9Z" fill="url(#b35)"/>
<path d="M221.5 776.9L190.6 804.5L204.5 817.8L232.1 789.0Z" fill="url(#b36)"/>
<path d="M229.7 786.2L201.3 814.7L216.5 827.7L241.2 797.3Z" fill="url(#b37)"/>
<path d="M238.5 794.8L213.0 824.7L229.0 836.7L250.5 804.6Z" fill="url(#b38)"/>
<path d="M247.7 802.4L225.3 833.9L241.5 844.5L261.1 811.5Z" fill="url(#b39)"/>
<path d="M258.0 809.4L237.8 842.0L254.6 851.6L271.7 817.2Z" fill="url(#b40)"/>
<path d="M268.5 815.4L250.7 849.4L268.7 858.2L283.0 822.0Z" fill="url(#b41)"/>
<path d="M279.7 820.5L264.5 856.2L282.4 863.5L294.7 825.9Z" fill="url(#b42)"/>
<path d="M291.2 824.7L278.3 861.8L297.2 868.2L306.6 828.8Z" fill="url(#b43)"/>
<path d="M303.0 827.9L292.8 866.7L312.0 871.8L318.7 830.7Z" fill="url(#b44)"/>
<path d="M315.1 830.0L307.6 870.7L327.0 874.4L330.2 831.4Z" fill="url(#b45)"/>
<path d="M326.7 831.1L322.5 873.5L342.7 875.9L342.9 831.2Z" fill="url(#b46)"/>
<path d="M339.2 831.2L338.1 875.4L358.3 876.2L354.7 830.1Z" fill="url(#b47)"/>
<path d="M351.1 830.3L353.7 876.0L373.9 875.2L367.2 828.0Z" fill="url(#b48)"/>
<path d="M363.5 828.6L369.2 875.4L389.9 872.7L379.4 825.3Z" fill="url(#b49)"/>
<path d="M375.7 826.0L385.2 873.3L405.6 868.9L391.5 822.0Z" fill="url(#b50)"/>
<path d="M387.8 822.9L400.9 869.9L421.0 863.6L403.9 817.9Z" fill="url(#b51)"/>
<path d="M400.2 819.1L416.4 865.0L434.8 857.6L415.6 813.6Z" fill="url(#b52)"/>
<path d="M412.0 814.8L430.5 859.3L448.5 850.6L427.6 808.4Z" fill="url(#b53)"/>
<path d="M424.0 809.9L444.4 852.6L461.9 842.8L438.8 802.9Z" fill="url(#b54)"/>
<path d="M435.4 804.5L457.9 845.1L474.3 834.8L450.4 796.7Z" fill="url(#b55)"/>
<path d="M446.9 798.5L470.5 837.1L486.3 826.2L461.5 789.9Z" fill="url(#b56)"/>
<path d="M458.1 791.9L482.7 828.7L497.5 817.7L471.8 783.0Z" fill="url(#b57)"/>
<path d="M468.7 785.0L494.1 820.2L509.1 808.4L482.4 775.2Z" fill="url(#b58)"/>
<path d="M479.2 777.5L505.7 811.1L519.9 799.3L492.5 767.0Z" fill="url(#b59)"/>
<path d="M489.4 769.4L516.6 802.1L530.7 790.0L501.8 758.7Z" fill="url(#b60)"/>
<path d="M498.9 761.2L527.5 792.8L541.2 780.4L511.1 749.5Z" fill="url(#b61)"/>
<path d="M508.3 752.2L538.1 783.3L552.0 770.1L519.9 740.0Z" fill="url(#b62)"/>
<path d="M517.3 742.8L548.8 773.1L562.3 759.5L528.3 730.1Z" fill="url(#b63)"/>
<path d="M525.7 733.0L559.1 762.6L572.1 748.5L535.7 720.1Z" fill="url(#b64)"/>
<path d="M533.4 723.1L569.1 751.7L581.4 737.1L543.1 709.4Z" fill="url(#b65)"/>
<path d="M540.9 712.5L578.6 740.5L590.6 724.7L549.5 698.8Z" fill="url(#b66)"/>
<path d="M547.5 702.0L587.8 728.3L599.0 712.0L555.5 687.8Z" fill="url(#b67)"/>
<path d="M553.7 691.1L596.4 715.7L606.7 698.8L561.2 676.1Z" fill="url(#b68)"/>
<path d="M559.5 679.5L604.3 702.7L613.6 685.3L566.0 664.7Z" fill="url(#b69)"/>
<path d="M564.5 668.1L611.5 689.3L619.7 671.3L570.3 653.0Z" fill="url(#b70)"/>
<path d="M568.9 656.5L617.8 675.5L625.2 656.5L573.9 641.1Z" fill="url(#b71)"/>
<path d="M572.8 644.6L623.5 660.8L629.6 641.4L576.9 629.0Z" fill="url(#b72)"/>
<path d="M576.0 632.6L628.2 645.9L633.0 626.0L579.3 616.7Z" fill="url(#b73)"/>
<path d="M578.5 620.4L631.9 630.6L635.3 610.3L581.0 604.4Z" fill="url(#b74)"/>
<path d="M580.5 608.1L634.5 615.0L636.5 595.2L582.1 591.9Z" fill="url(#b75)"/>
<path d="M581.7 595.6L636.0 599.8L636.9 579.1L582.4 579.4Z" fill="url(#b76)"/>
<path d="M582.2 583.1L636.7 583.9L636.3 563.9L582.0 567.3Z" fill="url(#b77)"/>
<path d="M582.1 571.0L636.4 568.5L635.0 548.6L581.0 555.2Z" fill="url(#b78)"/>
<path d="M581.3 558.8L635.3 553.2L632.9 533.4L579.2 542.5Z" fill="url(#b79)"/>
<path d="M579.7 546.3L633.4 538.0L629.9 518.5L576.8 530.6Z" fill="url(#b80)"/>
<path d="M577.5 534.2L630.7 523.0L625.9 503.1L573.7 518.8Z" fill="url(#b81)"/>
<path d="M574.6 522.4L627.0 507.7L621.2 488.8L569.9 507.2Z" fill="url(#b82)"/>
<path d="M571.0 510.7L622.6 493.2L615.4 474.1L565.5 495.9Z" fill="url(#b83)"/>
<path d="M566.7 499.3L617.1 478.5L608.7 459.9L560.0 484.5Z" fill="url(#b84)"/>
<path d="M561.6 487.9L610.6 464.2L600.7 445.7L554.2 474.1Z" fill="url(#b85)"/>
<path d="M555.9 477.2L603.0 450.0L592.0 432.7L547.9 464.4Z" fill="url(#b86)"/>
<path d="M549.8 467.4L594.6 436.7L582.9 420.6L540.6 454.8Z" fill="url(#b87)"/>
<path d="M542.8 457.7L585.6 424.3L573.0 408.9L532.7 445.8Z" fill="url(#b88)"/>
<path d="M535.0 448.6L575.9 412.4L562.4 397.7L524.5 437.9Z" fill="url(#b89)"/>
<path d="M526.9 440.3L565.5 401.1L551.4 387.0L515.5 430.5Z" fill="url(#b90)"/>
<path d="M518.1 432.8L554.7 390.2L540.4 377.3L505.9 423.8Z" fill="url(#b91)"/>
<path d="M508.7 425.8L543.7 380.3L529.1 367.9L495.7 417.7Z" fill="url(#b92)"/>
<path d="M498.7 419.6L532.4 370.8L517.5 358.9L485.2 412.4Z" fill="url(#b93)"/>
<path d="M488.3 414.1L520.9 361.6L506.2 350.5L474.2 407.7Z" fill="url(#b94)"/>
<path d="M477.5 409.2L509.6 353.1L494.7 342.1L463.5 403.9Z" fill="url(#b95)"/>
<path d="M466.8 405.1L498.1 344.7L483.7 334.2L452.6 400.7Z" fill="url(#b96)"/>
<path d="M455.8 401.7L487.0 336.7L473.1 326.6L441.5 398.0Z" fill="url(#b97)"/>
<path d="M444.8 398.9L476.3 328.9L463.0 319.2L430.4 396.0Z" fill="url(#b98)"/>
<path d="M433.7 396.7L466.0 321.5L447.0 307.0L410.1 394.1Z" fill="url(#b99)"/>
<g fill="none" stroke="#e39aa4" stroke-width=".6" opacity=".55"><path d="M309.500 363.500L217.800 451" stroke-dasharray="7 3 2 2 5 4 3 3"/><path d="M303 392L232 466" stroke-dasharray="4 3 6 2 2 3 8 4"/><path d="M296 371l5 5M280 387l6 5M262 404l6 6M246 421l5 5M268 425l7 6M250 443l6 5"/></g>
<defs><linearGradient id="hL" gradientUnits="userSpaceOnUse" x1="259.9" y1="264.8" x2="298.5" y2="255.8"><stop offset="0" stop-color="#9c9c9c"/><stop offset="0.12" stop-color="#d0d0d0"/><stop offset="0.45" stop-color="#e4e4e4"/><stop offset="0.8" stop-color="#d0d0d0"/><stop offset="1" stop-color="#a8a8a8"/></linearGradient><linearGradient id="hR" gradientUnits="userSpaceOnUse" x1="440.3" y1="255.8" x2="478.0" y2="264.8"><stop offset="0" stop-color="#b8b8b8"/><stop offset="0.3" stop-color="#e2e2e2"/><stop offset="0.65" stop-color="#dadada"/><stop offset="0.9" stop-color="#b4b4b4"/><stop offset="1" stop-color="#8c8c8c"/></linearGradient><linearGradient id="hBL" gradientUnits="userSpaceOnUse" x1="307.4" y1="219.9" x2="329.0" y2="219.9"><stop offset="0" stop-color="#747474"/><stop offset="0.5" stop-color="#8a8a8a"/><stop offset="1" stop-color="#828282"/></linearGradient><linearGradient id="hBR" gradientUnits="userSpaceOnUse" x1="415.1" y1="219.9" x2="443.9" y2="219.9"><stop offset="0" stop-color="#8a8a8a"/><stop offset="0.5" stop-color="#8e8e8e"/><stop offset="1" stop-color="#6e6e6e"/></linearGradient><linearGradient id="hVL" gradientUnits="userSpaceOnUse" x1="321.8" y1="228.9" x2="375.7" y2="268.3"><stop offset="0" stop-color="#b8b8b8"/><stop offset="0.35" stop-color="#d4d4d4"/><stop offset="0.7" stop-color="#c4c4c4"/><stop offset="1" stop-color="#b4b4b4"/></linearGradient><linearGradient id="hVR" gradientUnits="userSpaceOnUse" x1="425.9" y1="228.9" x2="375.7" y2="268.3"><stop offset="0" stop-color="#a0a0a0"/><stop offset="0.35" stop-color="#c6c6c6"/><stop offset="0.7" stop-color="#d0d0d0"/><stop offset="1" stop-color="#bcbcbc"/></linearGradient><linearGradient id="hTL" gradientUnits="userSpaceOnUse" x1="291.6" y1="291.7" x2="315.5" y2="295.3"><stop offset="0" stop-color="#606060"/><stop offset="0.3" stop-color="#a8a8a8"/><stop offset="0.6" stop-color="#8e8e8e"/><stop offset="1" stop-color="#6a6a6a"/></linearGradient><linearGradient id="hTR" gradientUnits="userSpaceOnUse" x1="413.4" y1="291.7" x2="437.6" y2="295.3"><stop offset="0" stop-color="#6a6a6a"/><stop offset="0.4" stop-color="#a4a4a4"/><stop offset="0.7" stop-color="#8a8a8a"/><stop offset="1" stop-color="#5a5a5a"/></linearGradient><radialGradient id="hC" gradientUnits="userSpaceOnUse" cx="372.5" cy="387.4" r="52" gradientTransform="translate(372.5 387.4) scale(1 .5) translate(-372.5 -387.4)"><stop offset="0" stop-color="#cccccc"/><stop offset=".35" stop-color="#b0b0b0"/><stop offset=".7" stop-color="#8c8c8c"/><stop offset="1" stop-color="#747474"/></radialGradient><linearGradient id="hE" gradientUnits="userSpaceOnUse" x1="295.5" y1="329.9" x2="340.6" y2="376.3"><stop offset="0" stop-color="#c2c2c2"/><stop offset="1" stop-color="#a6a6a6"/></linearGradient></defs>
<path d="M291.6 335.1L301.4 331.2L317.4 335.1L340.6 350.6L343.2 376.3L341.1 389.2L301.9 335.1Z" fill="url(#hE)"/>
<path d="M295.7 329.9L307.0 309.2L316.4 286.5L365.4 318.6L412.5 286.5L421.9 309.2L446.4 324.2L433.3 343.1L421.9 369.5L395.6 377.0L346.5 377.0L337.1 358.2L318.3 343.1Z" fill="#8a8a8a"/>
<path d="M286.8 219.0L288.6 234.2L294.0 250.4L301.2 264.8L309.2 282.7L303.9 289.9L295.8 268.3L290.4 250.4L286.4 234.2Z" fill="#4e4e4e"/>
<path d="M264.4 217.7C264.4 217.7 286.8 219.0 286.8 219.0C286.8 219.0 286.2 229.0 286.8 234.2C287.4 239.5 288.9 245.3 290.4 250.4C291.9 255.5 294.0 260.0 295.8 264.8C297.6 269.5 299.8 273.1 301.2 279.1C302.5 285.1 304.9 293.8 303.9 300.7C302.8 307.5 298.2 319.2 294.9 320.4C291.6 321.6 287.7 312.6 284.1 307.8C280.5 303.0 276.6 297.7 273.3 291.7C270.0 285.7 266.6 278.5 264.4 271.9C262.1 265.4 260.6 258.5 259.9 252.2C259.1 245.9 259.1 240.0 259.9 234.2C260.6 228.5 264.4 217.7 264.4 217.7Z" fill="url(#hL)" stroke="#707070" stroke-width="0.5" stroke-linejoin="round"/>
<path d="M449.3 218.1L447.5 237.8L444.8 255.8L436.7 271.9L429.5 282.7L433.1 304.2L440.3 300.7L440.3 286.3L443.9 275.5L448.4 255.8L450.1 236.0Z" fill="#3e3e3e"/>
<path d="M449.3 218.1C449.3 218.1 471.7 216.6 471.7 216.6C471.7 216.6 476.6 228.0 477.6 234.2C478.7 240.5 478.7 247.1 478.0 254.0C477.3 260.9 475.9 268.3 473.5 275.5C471.1 282.7 467.7 290.2 463.6 297.1C459.6 303.9 453.7 311.7 449.3 316.8C444.8 321.9 440.0 327.3 436.7 327.6C433.4 327.9 429.5 324.9 429.5 318.6C429.5 312.3 434.4 297.7 436.7 289.9C438.9 282.1 441.3 278.2 443.0 271.9C444.7 265.7 446.0 258.2 446.9 252.2C447.8 246.2 448.1 241.7 448.5 236.0C448.9 230.3 449.3 218.1 449.3 218.1Z" fill="url(#hR)" stroke="#6a6a6a" stroke-width="0.5" stroke-linejoin="round"/>
<path d="M446.4 322.4C443.6 324.9 435.5 331.5 429.5 337.4C423.5 343.4 415.7 352.2 410.6 358.2C405.6 364.1 401.2 370.7 399.3 373.3" fill="none" stroke="#6e6e6e" stroke-width="3.6" stroke-linecap="round" stroke-linejoin="round"/>
<path d="M446.4 322.4C443.6 324.9 435.5 331.5 429.5 337.4C423.5 343.4 415.7 352.2 410.6 358.2C405.6 364.1 401.2 370.7 399.3 373.3" fill="none" stroke="#a4a4a4" stroke-width="2.664" stroke-linecap="round" stroke-linejoin="round"/>
<path d="M446.4 322.4C443.6 324.9 435.5 331.5 429.5 337.4C423.5 343.4 415.7 352.2 410.6 358.2C405.6 364.1 401.2 370.7 399.3 373.3" fill="none" stroke="#c0c0c0" stroke-width="1.4400000000000002" stroke-linecap="round" stroke-linejoin="round"/>
<path d="M440.8 331.8C438.3 334.3 430.4 341.2 425.7 346.9C421.0 352.5 415.7 361.0 412.5 365.7C409.4 370.4 407.8 373.6 406.9 375.1" fill="none" stroke="#6e6e6e" stroke-width="3" stroke-linecap="round" stroke-linejoin="round"/>
<path d="M440.8 331.8C438.3 334.3 430.4 341.2 425.7 346.9C421.0 352.5 415.7 361.0 412.5 365.7C409.4 370.4 407.8 373.6 406.9 375.1" fill="none" stroke="#9c9c9c" stroke-width="2.2199999999999998" stroke-linecap="round" stroke-linejoin="round"/>
<path d="M440.8 331.8C438.3 334.3 430.4 341.2 425.7 346.9C421.0 352.5 415.7 361.0 412.5 365.7C409.4 370.4 407.8 373.6 406.9 375.1" fill="none" stroke="#b4b4b4" stroke-width="1.2000000000000002" stroke-linecap="round" stroke-linejoin="round"/>
<path d="M321.8 186.7C323.9 186.4 328.5 188.9 329.0 193.0C329.4 197.0 325.8 204.9 324.5 210.9C323.1 216.9 321.6 222.6 320.9 228.9C320.2 235.1 322.8 245.3 320.4 248.6C317.9 251.9 308.2 251.9 306.0 248.6C303.9 245.3 306.6 235.1 307.4 228.9C308.3 222.6 309.5 216.6 311.0 210.9C312.5 205.2 314.6 198.8 316.4 194.7C318.2 190.7 319.7 187.0 321.8 186.7Z" fill="url(#hBL)" stroke="#1a1a1a" stroke-width="0.7" stroke-linejoin="round"/>
<path d="M423.2 185.8C426.4 186.4 428.8 190.9 431.3 196.5C433.8 202.2 436.5 212.1 438.5 219.9C440.4 227.7 442.1 237.2 443.0 243.2C443.9 249.2 444.9 250.4 443.9 255.8C442.8 261.2 439.4 274.6 436.7 275.5C434.0 276.4 430.1 268.0 427.7 261.2C425.3 254.3 424.1 242.6 422.3 234.2C420.5 225.9 418.6 217.8 416.9 210.9C415.3 204.0 411.4 197.1 412.5 193.0C413.5 188.8 420.1 185.2 423.2 185.8Z" fill="url(#hBR)" stroke="#1a1a1a" stroke-width="0.7" stroke-linejoin="round"/>
<path d="M329.0 193.0C330.2 190.3 329.9 192.7 331.7 194.7C333.5 196.8 337.2 200.1 339.8 205.5C342.3 210.9 344.2 220.2 346.9 227.1C349.6 233.9 352.6 241.1 355.9 246.8C359.2 252.5 363.4 257.4 366.7 261.2C370.0 264.9 374.2 264.5 375.7 269.2C377.2 274.0 377.4 283.2 375.7 289.9C373.9 296.6 370.3 309.6 364.9 309.6C359.5 309.6 349.0 297.4 343.3 289.9C337.7 282.4 333.8 272.2 330.8 264.8C327.8 257.3 327.1 248.0 325.4 245.0C323.7 242.0 321.1 249.5 320.4 246.8C319.6 244.1 320.2 234.8 320.9 228.9C321.6 222.9 323.1 216.9 324.5 210.9C325.8 204.9 327.8 195.6 329.0 193.0Z" fill="url(#hVL)" stroke="#222" stroke-width="0.6" stroke-linejoin="round"/>
<path d="M412.5 193.0C410.7 192.1 408.4 200.1 406.2 205.5C403.9 210.9 401.7 218.4 399.0 225.3C396.3 232.1 392.7 240.8 390.0 246.8C387.3 252.8 385.2 257.4 382.8 261.2C380.4 264.9 376.9 264.5 375.7 269.2C374.5 274.0 377.4 283.2 375.7 289.9C373.9 296.6 366.1 306.6 364.9 309.6C363.7 312.6 365.2 311.7 368.5 307.8C371.8 303.9 380.1 293.5 384.6 286.3C389.1 279.1 392.7 271.8 395.4 264.8C398.1 257.7 397.8 247.0 400.8 244.1C403.8 241.3 409.0 245.2 413.4 247.7C417.7 250.2 425.3 261.6 426.8 259.4C428.3 257.1 424.0 242.3 422.3 234.2C420.7 226.2 418.6 217.8 416.9 210.9C415.3 204.0 414.2 193.8 412.5 193.0Z" fill="url(#hVR)" stroke="#222" stroke-width="0.6" stroke-linejoin="round"/>
<path d="M330.8 195.1C330.6 198.9 330.2 209.9 329.9 218.1C329.6 226.2 329.1 239.8 329.0 244.1" fill="none" stroke="#111" stroke-width="0.8" stroke-linecap="round" stroke-linejoin="round"/>
<path d="M331.7 218.1C332.1 222.9 331.8 234.5 334.4 246.8C336.9 259.1 344.8 284.2 346.9 291.7" fill="none" stroke="#222" stroke-width="0.6" stroke-linecap="round" stroke-linejoin="round"/>
<path d="M331.7 218.1C333.9 223.5 339.0 239.6 345.1 250.4C351.3 261.2 364.6 277.3 368.5 282.7" fill="none" stroke="#222" stroke-width="0.6" stroke-linecap="round" stroke-linejoin="round"/>
<path d="M413.4 195.1C413.2 198.9 413.4 209.9 412.5 218.1C411.6 226.2 408.7 239.8 408.0 244.1" fill="none" stroke="#111" stroke-width="0.8" stroke-linecap="round" stroke-linejoin="round"/>
<path d="M411.6 216.3C410.4 219.3 407.7 227.1 404.4 234.2C401.1 241.4 396.6 251.3 391.8 259.4C387.0 267.4 378.3 278.8 375.7 282.7" fill="none" stroke="#222" stroke-width="0.6" stroke-linecap="round" stroke-linejoin="round"/>
<path d="M422.3 201.9C422.8 206.4 424.0 219.3 425.0 228.9C426.1 238.4 428.0 254.3 428.6 259.4" fill="none" stroke="#222" stroke-width="0.6" stroke-linecap="round" stroke-linejoin="round"/>
<path d="M375.7 268.3L359.5 286.3" fill="none" stroke="#111" stroke-width="0.8" stroke-linecap="round" stroke-linejoin="round"/>
<path d="M382.8 275.5L364.9 291.7" fill="none" stroke="#111" stroke-width="0.7" stroke-linecap="round" stroke-linejoin="round"/>
<path d="M361.3 272.8L379.2 292.6" fill="none" stroke="#111" stroke-width="0.8" stroke-linecap="round" stroke-linejoin="round"/>
<path d="M368.5 268.3L388.2 284.5" fill="none" stroke="#111" stroke-width="0.7" stroke-linecap="round" stroke-linejoin="round"/>
<path d="M364.9 309.6L364.9 334.9" fill="none" stroke="#555" stroke-width="0.6" stroke-linecap="round" stroke-linejoin="round"/>
<path d="M375.7 291.3L379.6 298.9L367.6 310.0L364.9 308.2Z" fill="#4a4a6a"/>
<path d="M373.9 298.9L377.8 300.7L370.6 307.5Z" fill="#c0c0f0"/>
<path d="M311.9 247.7C313.0 244.4 322.3 242.2 325.4 245.0C328.5 247.8 327.8 257.3 330.8 264.8C333.8 272.2 338.0 282.4 343.3 289.9C348.7 297.4 359.5 302.7 363.1 309.6C366.7 316.5 364.6 326.7 364.9 331.2C365.2 335.7 366.4 336.9 364.9 336.6C363.4 336.3 360.1 334.2 355.9 329.4C351.7 324.6 344.5 315.0 339.8 307.8C335.0 300.7 330.6 293.5 327.2 286.3C323.7 279.1 321.7 271.2 319.1 264.8C316.6 258.3 310.9 251.0 311.9 247.7Z" fill="#767676" stroke="#444" stroke-width="0.4" stroke-linejoin="round"/>
<path d="M400.8 244.1C403.8 241.3 412.4 244.3 413.4 247.7C414.3 251.1 408.9 258.3 406.5 264.8C404.2 271.2 402.3 279.6 399.3 286.3C396.4 293.0 392.8 299.3 388.6 305.1C384.4 311.0 378.2 316.1 374.2 321.3C370.3 326.5 366.4 338.2 364.9 336.6C363.3 334.9 364.3 316.2 364.9 311.4C365.5 306.6 365.2 312.0 368.5 307.8C371.8 303.6 380.1 293.5 384.6 286.3C389.1 279.1 392.7 271.8 395.4 264.8C398.1 257.7 397.8 247.0 400.8 244.1Z" fill="#727272" stroke="#444" stroke-width="0.4" stroke-linejoin="round"/>
<path d="M308.8 334.6C310.4 331.9 316.7 321.3 318.3 318.6" fill="none" stroke="#6e6e6e" stroke-width="10.5" stroke-linecap="round" stroke-linejoin="round"/>
<path d="M308.8 334.6C310.4 331.9 316.7 321.3 318.3 318.6" fill="none" stroke="#a0a0a0" stroke-width="7.77" stroke-linecap="round" stroke-linejoin="round"/>
<path d="M308.8 334.6C310.4 331.9 316.7 321.3 318.3 318.6" fill="none" stroke="#c0c0c0" stroke-width="4.2" stroke-linecap="round" stroke-linejoin="round"/>
<path d="M330.5 347.8C331.5 346.1 335.2 339.2 336.2 337.4" fill="none" stroke="#6e6e6e" stroke-width="10.5" stroke-linecap="round" stroke-linejoin="round"/>
<path d="M330.5 347.8C331.5 346.1 335.2 339.2 336.2 337.4" fill="none" stroke="#a0a0a0" stroke-width="7.77" stroke-linecap="round" stroke-linejoin="round"/>
<path d="M330.5 347.8C331.5 346.1 335.2 339.2 336.2 337.4" fill="none" stroke="#c0c0c0" stroke-width="4.2" stroke-linecap="round" stroke-linejoin="round"/>
<path d="M340.9 341.2C341.8 339.6 345.6 333.4 346.5 331.8" fill="none" stroke="#6e6e6e" stroke-width="10.5" stroke-linecap="round" stroke-linejoin="round"/>
<path d="M340.9 341.2C341.8 339.6 345.6 333.4 346.5 331.8" fill="none" stroke="#a0a0a0" stroke-width="7.77" stroke-linecap="round" stroke-linejoin="round"/>
<path d="M340.9 341.2C341.8 339.6 345.6 333.4 346.5 331.8" fill="none" stroke="#c0c0c0" stroke-width="4.2" stroke-linecap="round" stroke-linejoin="round"/>
<path d="M387.1 341.2C387.9 340.3 391.0 336.5 391.8 335.6" fill="none" stroke="#6e6e6e" stroke-width="10.5" stroke-linecap="round" stroke-linejoin="round"/>
<path d="M387.1 341.2C387.9 340.3 391.0 336.5 391.8 335.6" fill="none" stroke="#a0a0a0" stroke-width="7.77" stroke-linecap="round" stroke-linejoin="round"/>
<path d="M387.1 341.2C387.9 340.3 391.0 336.5 391.8 335.6" fill="none" stroke="#c0c0c0" stroke-width="4.2" stroke-linecap="round" stroke-linejoin="round"/>
<path d="M400.3 348.8C399.5 346.9 396.3 339.3 395.6 337.4" fill="none" stroke="#6e6e6e" stroke-width="10.5" stroke-linecap="round" stroke-linejoin="round"/>
<path d="M400.3 348.8C399.5 346.9 396.3 339.3 395.6 337.4" fill="none" stroke="#a0a0a0" stroke-width="7.77" stroke-linecap="round" stroke-linejoin="round"/>
<path d="M400.3 348.8C399.5 346.9 396.3 339.3 395.6 337.4" fill="none" stroke="#c0c0c0" stroke-width="4.2" stroke-linecap="round" stroke-linejoin="round"/>
<path d="M421.0 335.6C419.3 332.7 412.4 321.4 410.6 318.6" fill="none" stroke="#6e6e6e" stroke-width="10.5" stroke-linecap="round" stroke-linejoin="round"/>
<path d="M421.0 335.6C419.3 332.7 412.4 321.4 410.6 318.6" fill="none" stroke="#a0a0a0" stroke-width="7.77" stroke-linecap="round" stroke-linejoin="round"/>
<path d="M421.0 335.6C419.3 332.7 412.4 321.4 410.6 318.6" fill="none" stroke="#c0c0c0" stroke-width="4.2" stroke-linecap="round" stroke-linejoin="round"/>
<path d="M293.8 331.8C294.4 330.5 296.9 325.5 297.5 324.2" fill="none" stroke="#6e6e6e" stroke-width="10.5" stroke-linecap="round" stroke-linejoin="round"/>
<path d="M293.8 331.8C294.4 330.5 296.9 325.5 297.5 324.2" fill="none" stroke="#a0a0a0" stroke-width="7.77" stroke-linecap="round" stroke-linejoin="round"/>
<path d="M293.8 331.8C294.4 330.5 296.9 325.5 297.5 324.2" fill="none" stroke="#c0c0c0" stroke-width="4.2" stroke-linecap="round" stroke-linejoin="round"/>
<path d="M318.3 333.7L330.5 340.3L328.6 344.0L316.4 337.4Z" fill="#e0e0e0"/>
<path d="M403.1 350.6L420.1 341.2L421.9 345.0L405.9 355.3Z" fill="#d8d8d8"/>
<path d="M366.3 360.1L375.8 357.2L376.3 373.3L367.3 374.2Z" fill="#d4d4d4" stroke="#555" stroke-width="0.5" stroke-linejoin="round"/>
<path d="M412.8 247.6L412.3 248.2L411.7 248.9L411.2 249.8L410.6 250.8L409.9 251.9L409.3 253.0L408.7 254.1L408.1 255.2L407.8 256.2L407.5 257.1L407.2 258.0L406.9 258.8L406.6 259.7L406.2 260.7L405.8 262.0L405.2 263.6L404.6 265.7L403.8 268.1L403.1 270.7L402.2 273.5L401.4 276.3L400.4 279.0L399.5 281.5L398.5 283.8L397.5 286.0L396.5 288.2L395.4 290.3L394.3 292.4L393.1 294.5L391.8 296.6L390.4 298.7L389.0 300.7L387.5 302.7L386.0 304.8L384.2 306.9L382.3 309.0L380.4 311.2L378.3 313.5L376.3 315.8L374.3 318.2L372.3 320.7L370.3 323.3L368.5 325.7L366.7 328.1L365.0 330.4L363.3 332.4L361.8 334.1L360.4 335.5L359.1 336.5L357.7 337.4L356.1 338.2L354.3 339.0L352.4 339.9L350.2 340.9L348.0 342.1L345.8 343.5L344.0 345.0L342.5 346.4L341.0 347.9L339.6 349.4L338.4 351.1L337.3 352.8L336.3 354.7L335.4 356.7L334.8 358.8L334.5 361.0L334.5 363.1L334.6 365.1L334.9 367.0L335.3 368.7L335.8 370.4L336.4 372.1L337.4 374.0L338.5 375.8L339.7 377.4L340.8 378.9L341.9 380.1L342.8 381.1L343.5 381.9L344.0 382.4L354.9 373.6L354.3 372.9L353.5 371.9L352.7 370.9L351.9 369.9L351.1 368.8L350.5 367.9L350.1 367.2L349.9 366.7L349.7 366.0L349.5 365.2L349.3 364.3L349.2 363.6L349.2 362.9L349.3 362.4L349.3 362.0L349.5 361.7L349.7 361.2L350.0 360.6L350.5 359.9L351.2 359.2L351.9 358.3L352.9 357.5L353.9 356.6L354.9 355.8L355.8 355.2L357.0 354.5L358.6 353.8L360.6 352.9L362.8 351.9L365.3 350.6L367.9 349.0L370.5 347.0L372.8 344.7L374.9 342.3L376.9 339.9L378.9 337.4L380.7 334.9L382.5 332.4L384.3 330.1L386.0 328.0L387.8 325.9L389.8 323.7L391.8 321.6L393.8 319.3L395.9 317.0L398.0 314.6L400.0 312.1L401.8 309.6L403.4 307.0L404.9 304.5L406.3 302.0L407.6 299.4L408.9 296.9L410.0 294.2L411.1 291.6L412.1 288.8L412.9 285.8L413.6 282.6L414.2 279.5L414.7 276.3L415.2 273.3L415.6 270.5L415.9 268.1L416.1 265.9L416.3 264.1L416.4 262.5L416.4 261.2L416.4 260.0L416.3 259.1L416.2 258.2L416.1 257.3L416.1 256.4L415.8 255.2L415.6 254.0L415.3 252.7L415.1 251.5L414.8 250.4L414.5 249.3L414.2 248.5L413.9 247.8Z" fill="#646464"/>
<path d="M412.9 247.6L412.5 248.2L412.0 249.0L411.5 249.9L411.0 250.9L410.5 252.0L409.9 253.1L409.4 254.2L408.9 255.3L408.6 256.3L408.3 257.2L408.1 258.1L407.8 258.9L407.5 259.8L407.2 260.9L406.8 262.2L406.3 263.8L405.7 265.9L405.0 268.3L404.2 271.0L403.5 273.8L402.6 276.6L401.7 279.3L400.8 281.9L399.8 284.3L398.8 286.5L397.8 288.8L396.7 291.0L395.6 293.1L394.4 295.3L393.1 297.4L391.7 299.5L390.2 301.6L388.8 303.6L387.1 305.7L385.3 307.9L383.4 310.0L381.5 312.2L379.5 314.5L377.4 316.8L375.4 319.2L373.4 321.6L371.5 324.2L369.7 326.6L367.9 329.0L366.1 331.3L364.5 333.4L362.8 335.2L361.4 336.6L360.0 337.7L358.5 338.7L356.8 339.5L354.9 340.4L353.0 341.2L350.9 342.2L348.7 343.4L346.7 344.7L345.0 346.1L343.5 347.5L342.1 348.9L340.8 350.4L339.6 351.9L338.5 353.6L337.6 355.3L336.8 357.2L336.3 359.2L336.0 361.2L335.9 363.1L336.0 364.9L336.3 366.7L336.7 368.4L337.2 370.0L337.7 371.6L338.6 373.4L339.7 375.1L340.8 376.6L341.9 378.0L343.0 379.2L343.9 380.2L344.6 381.0L345.1 381.5L354.2 374.2L353.7 373.4L352.9 372.5L352.0 371.5L351.2 370.4L350.4 369.4L349.8 368.4L349.3 367.6L349.1 367.0L348.8 366.3L348.6 365.4L348.4 364.5L348.3 363.7L348.3 363.0L348.3 362.3L348.4 361.8L348.6 361.4L348.9 360.8L349.2 360.1L349.8 359.4L350.5 358.6L351.3 357.7L352.2 356.8L353.3 355.9L354.3 355.0L355.3 354.4L356.6 353.7L358.2 352.9L360.2 352.1L362.4 351.0L364.8 349.8L367.4 348.2L369.8 346.2L372.1 344.0L374.2 341.7L376.2 339.3L378.1 336.8L380.0 334.3L381.8 331.9L383.5 329.5L385.3 327.4L387.1 325.2L389.0 323.1L391.1 320.9L393.1 318.7L395.2 316.4L397.2 314.0L399.2 311.5L401.0 309.0L402.6 306.5L404.1 304.0L405.5 301.5L406.8 299.0L408.0 296.5L409.2 293.9L410.2 291.2L411.2 288.5L412.1 285.5L412.8 282.4L413.4 279.3L414.0 276.2L414.4 273.2L414.8 270.4L415.2 267.9L415.4 265.8L415.6 264.0L415.8 262.4L415.8 261.1L415.8 260.0L415.8 259.0L415.7 258.1L415.6 257.3L415.6 256.3L415.4 255.2L415.2 253.9L415.0 252.7L414.8 251.5L414.6 250.3L414.4 249.3L414.1 248.4L413.8 247.8Z" fill="#8c8c8c"/>
<path d="M413.1 247.7L412.7 248.2L412.3 249.0L411.9 249.9L411.5 251.0L411.1 252.1L410.7 253.2L410.3 254.4L409.8 255.4L409.6 256.5L409.4 257.4L409.2 258.2L408.9 259.1L408.7 260.0L408.4 261.1L408.1 262.4L407.6 264.1L407.0 266.2L406.4 268.6L405.7 271.3L405.0 274.1L404.2 277.0L403.3 279.8L402.4 282.4L401.4 284.9L400.5 287.2L399.4 289.5L398.3 291.8L397.2 294.0L396.0 296.2L394.6 298.3L393.3 300.5L391.8 302.6L390.2 304.8L388.6 306.9L386.7 309.1L384.8 311.3L382.8 313.5L380.8 315.7L378.8 318.0L376.8 320.3L374.9 322.8L373.0 325.3L371.1 327.7L369.3 330.2L367.6 332.5L365.8 334.6L364.2 336.4L362.6 338.0L361.0 339.2L359.4 340.3L357.6 341.2L355.7 342.1L353.7 342.9L351.7 343.8L349.7 344.9L347.8 346.2L346.2 347.5L344.7 348.8L343.4 350.2L342.2 351.6L341.0 353.0L340.0 354.5L339.2 356.1L338.5 357.8L338.0 359.5L337.7 361.3L337.7 363.1L337.8 364.8L338.0 366.4L338.4 368.0L338.8 369.4L339.4 370.9L340.1 372.6L341.1 374.1L342.2 375.6L343.2 376.9L344.3 378.1L345.2 379.1L345.9 379.9L346.4 380.5L353.6 374.7L353.0 374.0L352.2 373.0L351.4 372.0L350.5 371.0L349.7 369.9L349.0 368.9L348.5 368.0L348.3 367.3L348.0 366.5L347.8 365.6L347.6 364.7L347.5 363.8L347.4 363.0L347.5 362.2L347.6 361.6L347.8 361.1L348.0 360.4L348.5 359.7L349.1 358.9L349.8 358.0L350.6 357.1L351.6 356.1L352.7 355.2L353.8 354.3L354.8 353.6L356.2 352.9L357.8 352.1L359.8 351.2L362.0 350.2L364.4 349.0L366.8 347.4L369.2 345.6L371.4 343.4L373.5 341.1L375.5 338.7L377.4 336.2L379.2 333.8L381.0 331.3L382.8 329.0L384.6 326.8L386.4 324.6L388.4 322.5L390.4 320.3L392.4 318.1L394.5 315.8L396.5 313.4L398.4 311.0L400.3 308.5L401.8 306.0L403.3 303.6L404.7 301.1L406.0 298.6L407.2 296.1L408.4 293.5L409.4 290.9L410.4 288.2L411.3 285.3L412.0 282.2L412.7 279.1L413.2 276.0L413.7 273.0L414.1 270.2L414.5 267.8L414.8 265.6L415.0 263.8L415.2 262.3L415.2 261.0L415.2 259.9L415.2 258.9L415.2 258.1L415.1 257.2L415.1 256.2L415.0 255.1L414.8 253.9L414.7 252.6L414.5 251.4L414.4 250.3L414.2 249.3L414.0 248.4L413.8 247.8Z" fill="#9a9a9a"/>
<path d="M413.2 247.7L413.0 248.3L412.8 249.1L412.5 250.0L412.3 251.1L412.0 252.2L411.7 253.4L411.4 254.5L411.1 255.6L410.9 256.6L410.8 257.5L410.6 258.4L410.5 259.3L410.3 260.2L410.0 261.4L409.7 262.8L409.3 264.5L408.8 266.6L408.2 269.0L407.6 271.7L406.9 274.6L406.2 277.5L405.4 280.3L404.5 283.1L403.6 285.7L402.6 288.1L401.6 290.5L400.5 292.8L399.3 295.1L398.1 297.3L396.7 299.6L395.3 301.8L393.8 304.0L392.2 306.3L390.5 308.5L388.6 310.7L386.6 312.9L384.6 315.1L382.6 317.3L380.6 319.6L378.7 321.9L376.8 324.3L374.9 326.7L373.1 329.2L371.3 331.6L369.5 334.0L367.7 336.1L365.9 338.1L364.2 339.8L362.4 341.2L360.6 342.3L358.6 343.4L356.7 344.3L354.7 345.1L352.8 346.0L350.9 347.0L349.2 348.1L347.7 349.4L346.4 350.6L345.1 351.8L344.0 353.1L343.0 354.4L342.1 355.8L341.3 357.1L340.7 358.6L340.3 360.0L340.1 361.5L340.0 363.0L340.1 364.5L340.3 366.0L340.6 367.4L341.0 368.7L341.5 370.1L342.1 371.5L343.0 372.9L344.0 374.2L345.0 375.5L346.0 376.6L346.9 377.7L347.6 378.5L348.1 379.1L352.9 375.3L352.3 374.5L351.6 373.6L350.7 372.6L349.8 371.5L349.0 370.4L348.3 369.4L347.8 368.5L347.4 367.7L347.1 366.8L346.9 365.8L346.7 364.8L346.5 363.9L346.5 363.0L346.5 362.2L346.7 361.4L346.9 360.8L347.2 360.0L347.7 359.2L348.3 358.3L349.0 357.4L349.9 356.4L350.9 355.4L352.1 354.5L353.2 353.5L354.4 352.8L355.8 352.0L357.5 351.2L359.4 350.4L361.6 349.4L363.9 348.2L366.3 346.7L368.6 344.8L370.8 342.8L372.8 340.5L374.7 338.1L376.6 335.7L378.5 333.2L380.3 330.7L382.1 328.4L383.9 326.2L385.7 324.0L387.7 321.9L389.7 319.7L391.7 317.4L393.7 315.1L395.7 312.8L397.7 310.4L399.5 308.0L401.0 305.5L402.5 303.1L403.9 300.6L405.2 298.2L406.4 295.7L407.5 293.1L408.6 290.6L409.6 287.9L410.4 285.0L411.2 282.0L411.9 278.9L412.4 275.8L413.0 272.9L413.4 270.1L413.8 267.6L414.1 265.5L414.4 263.7L414.5 262.2L414.6 260.9L414.6 259.8L414.6 258.9L414.6 258.0L414.6 257.1L414.6 256.2L414.5 255.0L414.4 253.8L414.3 252.6L414.2 251.4L414.1 250.3L414.0 249.3L413.9 248.4L413.7 247.8Z" fill="#b0b0b0"/>
<path d="M413.4 247.7L413.3 248.3L413.2 249.1L413.1 250.1L412.9 251.2L412.8 252.3L412.6 253.5L412.4 254.7L412.3 255.8L412.1 256.8L412.0 257.7L411.9 258.5L411.8 259.5L411.7 260.5L411.5 261.6L411.3 263.1L410.9 264.8L410.5 266.9L410.0 269.4L409.4 272.1L408.8 275.0L408.1 277.9L407.3 280.9L406.5 283.7L405.6 286.4L404.6 288.9L403.5 291.3L402.4 293.7L401.2 296.1L400.0 298.4L398.6 300.7L397.2 303.0L395.7 305.3L394.0 307.6L392.2 309.9L390.3 312.2L388.3 314.4L386.3 316.6L384.3 318.8L382.3 321.1L380.4 323.3L378.5 325.6L376.7 328.0L374.9 330.5L373.0 333.0L371.2 335.3L369.4 337.6L367.5 339.7L365.6 341.5L363.7 343.0L361.7 344.3L359.6 345.4L357.6 346.3L355.6 347.1L353.8 348.0L352.1 348.9L350.5 349.9L349.2 351.0L347.9 352.2L346.7 353.3L345.7 354.5L344.7 355.7L343.9 356.9L343.3 358.1L342.8 359.3L342.4 360.5L342.2 361.7L342.2 363.0L342.2 364.3L342.4 365.6L342.7 366.9L343.1 368.1L343.5 369.3L344.0 370.5L344.8 371.7L345.6 372.9L346.6 374.2L347.5 375.3L348.4 376.3L349.2 377.2L349.7 377.8L352.1 375.9L351.5 375.2L350.8 374.3L349.9 373.3L349.0 372.2L348.2 371.1L347.4 370.0L346.8 369.0L346.4 368.1L346.1 367.1L345.8 366.1L345.6 365.0L345.5 364.0L345.4 363.0L345.5 362.1L345.6 361.2L345.8 360.4L346.2 359.5L346.7 358.6L347.4 357.6L348.2 356.7L349.1 355.6L350.2 354.6L351.3 353.6L352.5 352.6L353.8 351.8L355.3 351.0L357.0 350.2L359.0 349.3L361.1 348.4L363.4 347.2L365.6 345.7L367.9 344.0L369.9 342.0L371.9 339.8L373.8 337.4L375.7 335.0L377.6 332.5L379.4 330.1L381.2 327.7L383.0 325.4L384.9 323.3L386.8 321.1L388.8 318.9L390.9 316.7L392.9 314.4L394.9 312.1L396.7 309.7L398.5 307.3L400.1 304.9L401.5 302.5L402.9 300.1L404.2 297.6L405.4 295.2L406.5 292.7L407.6 290.1L408.6 287.5L409.4 284.7L410.2 281.7L410.9 278.6L411.5 275.6L412.1 272.7L412.5 269.9L412.9 267.4L413.3 265.3L413.6 263.5L413.8 262.0L413.9 260.8L413.9 259.7L414.0 258.8L414.0 257.9L414.0 257.0L414.0 256.1L414.0 254.9L414.0 253.7L413.9 252.5L413.9 251.3L413.9 250.2L413.8 249.2L413.7 248.4L413.6 247.7Z" fill="#c0c0c0"/>
<path d="M310.9 247.8L310.6 248.5L310.3 249.4L310.1 250.5L309.9 251.7L309.8 252.9L309.6 254.2L309.4 255.4L309.2 256.6L309.2 257.5L309.2 258.4L309.1 259.3L309.1 260.2L309.1 261.4L309.2 262.7L309.3 264.3L309.6 266.1L309.9 268.2L310.3 270.6L310.8 273.3L311.3 276.3L312.0 279.4L312.7 282.6L313.6 285.8L314.6 288.9L315.8 291.8L317.0 294.6L318.3 297.5L319.8 300.3L321.3 303.1L323.0 305.9L324.7 308.7L326.5 311.4L328.5 314.1L330.7 316.7L333.0 319.4L335.3 321.9L337.7 324.4L340.0 326.7L342.2 329.0L344.4 331.1L346.6 333.2L348.9 335.2L351.0 337.1L353.1 338.8L355.1 340.4L356.9 341.9L358.7 343.4L360.3 344.9L361.8 346.3L363.3 347.8L364.8 349.4L366.3 350.9L367.7 352.4L369.2 354.0L370.8 355.6L372.4 357.2L374.1 358.7L375.8 360.2L377.5 361.5L379.0 362.7L380.4 363.8L381.5 364.9L382.4 365.7L383.0 366.4L383.4 366.9L383.8 367.6L384.2 368.5L384.5 369.5L384.8 370.5L385.1 371.6L385.5 372.7L385.8 373.6L399.6 369.1L399.5 368.6L399.3 367.8L399.0 366.6L398.5 365.0L398.0 363.3L397.2 361.4L396.2 359.4L394.9 357.4L393.4 355.6L391.8 354.0L390.2 352.5L388.6 351.1L387.1 349.8L385.6 348.6L384.2 347.3L382.9 346.1L381.6 344.8L380.2 343.4L378.8 341.9L377.3 340.4L375.8 338.8L374.2 337.1L372.4 335.4L370.6 333.6L368.6 331.9L366.6 330.2L364.6 328.6L362.6 327.1L360.6 325.5L358.6 323.9L356.7 322.2L354.8 320.4L352.8 318.4L350.7 316.3L348.5 314.0L346.3 311.7L344.2 309.4L342.2 307.1L340.4 304.8L338.7 302.5L337.0 300.2L335.3 297.9L333.8 295.6L332.3 293.3L330.9 290.9L329.6 288.5L328.3 286.1L327.2 283.7L326.1 281.3L325.1 278.8L324.2 276.1L323.3 273.3L322.5 270.6L321.8 268.0L321.1 265.5L320.4 263.4L319.8 261.8L319.3 260.5L318.9 259.5L318.6 258.6L318.2 257.8L317.9 256.9L317.5 256.0L317.1 255.0L316.5 253.9L315.8 252.8L315.1 251.7L314.4 250.7L313.7 249.7L313.1 248.8L312.5 248.1L311.9 247.6Z" fill="#6a6a6a"/>
<path d="M310.9 247.8L310.7 248.5L310.5 249.4L310.4 250.5L310.2 251.6L310.1 252.8L310.0 254.1L309.9 255.3L309.7 256.5L309.7 257.5L309.7 258.3L309.7 259.2L309.7 260.1L309.7 261.2L309.8 262.6L310.0 264.1L310.2 265.9L310.6 268.0L311.0 270.4L311.5 273.2L312.1 276.1L312.7 279.2L313.5 282.3L314.4 285.5L315.4 288.6L316.5 291.4L317.8 294.3L319.1 297.1L320.6 299.9L322.1 302.7L323.7 305.4L325.4 308.1L327.2 310.8L329.3 313.5L331.4 316.1L333.7 318.7L336.0 321.3L338.4 323.7L340.7 326.1L342.9 328.3L345.1 330.5L347.3 332.6L349.5 334.5L351.6 336.4L353.7 338.1L355.7 339.7L357.5 341.2L359.3 342.7L360.9 344.2L362.5 345.7L364.0 347.2L365.5 348.7L367.0 350.2L368.4 351.8L369.9 353.4L371.4 354.9L373.0 356.5L374.7 358.0L376.4 359.4L378.1 360.8L379.6 362.0L381.0 363.1L382.2 364.2L383.1 365.1L383.7 365.8L384.2 366.5L384.6 367.2L385.0 368.2L385.4 369.2L385.7 370.3L386.0 371.3L386.3 372.5L386.7 373.4L398.3 369.6L398.1 369.0L397.9 368.2L397.6 367.0L397.2 365.5L396.6 363.8L395.9 362.0L394.9 360.1L393.7 358.3L392.3 356.6L390.8 355.0L389.3 353.6L387.7 352.3L386.1 351.0L384.6 349.7L383.2 348.5L381.9 347.2L380.5 345.9L379.1 344.5L377.7 343.0L376.3 341.4L374.7 339.8L373.1 338.2L371.4 336.5L369.6 334.7L367.6 333.0L365.6 331.4L363.6 329.8L361.6 328.2L359.6 326.6L357.7 325.0L355.7 323.3L353.8 321.5L351.8 319.5L349.6 317.3L347.4 315.0L345.3 312.7L343.1 310.4L341.1 308.0L339.2 305.7L337.5 303.4L335.8 301.1L334.1 298.7L332.6 296.3L331.1 293.9L329.7 291.5L328.3 289.1L327.1 286.6L326.0 284.2L324.9 281.8L323.9 279.1L323.0 276.4L322.2 273.6L321.4 270.8L320.6 268.2L320.0 265.8L319.3 263.7L318.8 262.0L318.3 260.7L317.9 259.7L317.6 258.8L317.3 257.9L317.0 257.1L316.7 256.1L316.4 255.1L315.8 254.1L315.2 253.0L314.6 251.9L314.0 250.8L313.4 249.8L312.8 248.9L312.3 248.1L311.8 247.6Z" fill="#949494"/>
<path d="M311.0 247.8L310.8 248.5L310.7 249.4L310.6 250.4L310.5 251.6L310.4 252.8L310.4 254.0L310.3 255.2L310.2 256.4L310.2 257.4L310.2 258.2L310.2 259.1L310.2 260.0L310.3 261.1L310.4 262.4L310.6 264.0L310.9 265.7L311.3 267.8L311.7 270.3L312.2 273.0L312.8 275.9L313.4 279.0L314.2 282.1L315.1 285.2L316.1 288.2L317.3 291.1L318.5 293.9L319.9 296.7L321.3 299.5L322.8 302.2L324.5 304.9L326.2 307.6L328.0 310.3L330.0 312.9L332.1 315.6L334.4 318.1L336.7 320.7L339.0 323.1L341.3 325.5L343.5 327.7L345.7 329.8L347.9 331.9L350.1 333.8L352.2 335.7L354.2 337.4L356.2 339.0L358.1 340.5L359.9 342.0L361.5 343.5L363.1 345.0L364.7 346.5L366.2 348.1L367.6 349.6L369.1 351.2L370.6 352.7L372.1 354.3L373.7 355.8L375.3 357.3L377.0 358.7L378.6 360.1L380.2 361.3L381.6 362.5L382.8 363.5L383.7 364.5L384.4 365.3L385.0 366.0L385.4 366.9L385.8 367.9L386.2 368.9L386.6 370.0L386.9 371.1L387.2 372.2L387.5 373.1L396.6 370.1L396.4 369.5L396.2 368.6L395.9 367.4L395.5 366.0L395.0 364.4L394.3 362.8L393.4 361.0L392.3 359.3L391.0 357.8L389.6 356.3L388.1 355.0L386.5 353.7L385.0 352.4L383.5 351.1L382.0 349.8L380.6 348.5L379.2 347.2L377.8 345.7L376.4 344.2L374.9 342.7L373.4 341.1L371.8 339.4L370.1 337.8L368.3 336.1L366.4 334.4L364.5 332.8L362.5 331.2L360.5 329.6L358.5 328.0L356.5 326.4L354.5 324.6L352.5 322.8L350.5 320.7L348.3 318.5L346.1 316.3L343.9 313.9L341.8 311.6L339.7 309.2L337.8 306.8L336.0 304.4L334.3 302.1L332.6 299.7L331.1 297.2L329.6 294.8L328.2 292.3L326.8 289.8L325.6 287.3L324.5 284.8L323.4 282.3L322.4 279.6L321.5 276.8L320.7 274.0L320.0 271.2L319.3 268.5L318.6 266.1L318.0 264.0L317.5 262.3L317.1 261.0L316.8 259.9L316.5 259.0L316.2 258.1L316.0 257.3L315.7 256.3L315.4 255.3L314.9 254.2L314.4 253.1L313.9 252.0L313.4 250.9L313.0 249.9L312.5 249.0L312.1 248.2L311.7 247.6Z" fill="#a2a2a2"/>
<path d="M311.1 247.8L310.9 248.5L310.8 249.3L310.8 250.4L310.8 251.5L310.8 252.7L310.7 253.9L310.7 255.2L310.7 256.3L310.8 257.3L310.8 258.1L310.8 259.0L310.8 259.9L310.9 261.0L311.0 262.3L311.3 263.8L311.6 265.6L312.0 267.7L312.4 270.1L312.9 272.8L313.5 275.7L314.2 278.8L315.0 281.9L315.9 285.0L316.9 287.9L318.1 290.7L319.3 293.5L320.7 296.3L322.1 299.0L323.6 301.7L325.2 304.4L326.9 307.1L328.7 309.8L330.7 312.4L332.9 315.0L335.1 317.5L337.4 320.0L339.7 322.5L342.0 324.8L344.2 327.0L346.4 329.2L348.5 331.2L350.7 333.1L352.8 334.9L354.8 336.6L356.8 338.2L358.7 339.8L360.5 341.3L362.2 342.8L363.8 344.3L365.3 345.9L366.8 347.4L368.3 349.0L369.8 350.5L371.3 352.1L372.8 353.6L374.3 355.1L375.9 356.6L377.6 358.0L379.2 359.3L380.8 360.6L382.2 361.8L383.4 362.9L384.4 363.8L385.2 364.7L385.8 365.5L386.3 366.5L386.7 367.5L387.1 368.7L387.4 369.8L387.7 370.9L388.0 372.0L388.3 372.8L394.4 370.8L394.2 370.1L394.0 369.2L393.7 368.1L393.3 366.7L392.8 365.3L392.2 363.7L391.4 362.2L390.4 360.8L389.3 359.4L387.9 358.1L386.5 356.8L385.0 355.5L383.5 354.2L381.9 352.9L380.4 351.6L378.9 350.3L377.5 348.9L376.1 347.4L374.6 345.9L373.2 344.3L371.7 342.8L370.1 341.1L368.4 339.5L366.7 337.9L364.9 336.2L363.0 334.6L361.0 333.1L359.0 331.5L357.0 329.8L355.0 328.1L352.9 326.4L350.9 324.5L348.8 322.4L346.6 320.2L344.4 317.9L342.2 315.5L340.0 313.1L337.9 310.7L335.9 308.3L334.1 305.8L332.3 303.4L330.7 300.9L329.1 298.4L327.6 295.9L326.2 293.4L324.9 290.8L323.6 288.2L322.5 285.7L321.4 283.0L320.5 280.2L319.6 277.3L318.8 274.4L318.1 271.6L317.5 269.0L316.9 266.5L316.3 264.4L315.9 262.7L315.5 261.3L315.2 260.2L315.0 259.2L314.8 258.3L314.6 257.5L314.4 256.6L314.2 255.6L313.8 254.5L313.5 253.3L313.1 252.2L312.7 251.1L312.4 250.0L312.1 249.1L311.8 248.3L311.5 247.7Z" fill="#b8b8b8"/>
<path d="M311.1 247.8L311.1 248.4L311.0 249.3L311.1 250.3L311.1 251.4L311.1 252.6L311.2 253.8L311.2 255.0L311.3 256.2L311.4 257.1L311.4 258.0L311.5 258.9L311.5 259.8L311.6 260.9L311.8 262.1L312.0 263.6L312.4 265.4L312.8 267.5L313.3 269.9L313.8 272.6L314.4 275.5L315.1 278.5L315.9 281.6L316.8 284.6L317.8 287.5L319.0 290.3L320.2 293.1L321.6 295.8L323.0 298.5L324.5 301.2L326.1 303.8L327.8 306.5L329.6 309.1L331.6 311.7L333.7 314.2L335.9 316.8L338.2 319.3L340.5 321.7L342.7 324.0L345.0 326.3L347.1 328.4L349.2 330.4L351.4 332.3L353.5 334.1L355.5 335.8L357.5 337.4L359.4 338.9L361.2 340.4L362.9 342.0L364.6 343.5L366.1 345.1L367.6 346.6L369.1 348.2L370.6 349.7L372.1 351.3L373.6 352.8L375.1 354.3L376.7 355.8L378.3 357.2L379.9 358.5L381.5 359.7L382.9 360.9L384.2 362.0L385.2 363.1L386.1 364.0L386.7 365.0L387.2 366.0L387.7 367.2L388.1 368.3L388.5 369.5L388.8 370.6L389.1 371.7L389.4 372.5L392.4 371.5L392.2 370.7L391.9 369.8L391.6 368.6L391.2 367.4L390.8 366.0L390.2 364.7L389.5 363.3L388.7 362.1L387.7 360.9L386.4 359.6L385.1 358.4L383.6 357.2L382.1 355.9L380.5 354.6L378.9 353.3L377.4 351.9L375.9 350.4L374.5 348.9L373.0 347.4L371.6 345.9L370.1 344.3L368.5 342.7L366.9 341.1L365.2 339.5L363.4 337.9L361.5 336.3L359.6 334.8L357.6 333.2L355.6 331.5L353.5 329.8L351.5 328.0L349.4 326.0L347.3 323.9L345.1 321.7L342.8 319.4L340.6 317.0L338.4 314.6L336.2 312.1L334.2 309.6L332.3 307.1L330.5 304.6L328.9 302.1L327.3 299.5L325.8 296.9L324.3 294.3L323.0 291.7L321.8 289.1L320.6 286.4L319.6 283.7L318.6 280.8L317.8 277.8L317.1 274.9L316.4 272.0L315.8 269.3L315.2 266.9L314.7 264.8L314.3 263.1L314.0 261.7L313.8 260.5L313.6 259.5L313.5 258.6L313.3 257.7L313.2 256.8L313.0 255.8L312.8 254.7L312.6 253.5L312.3 252.4L312.1 251.2L311.9 250.1L311.7 249.1L311.5 248.3L311.4 247.7Z" fill="#c8c8c8"/>
<path d="M308.3 249.0C309.9 248.7 310.4 254.9 311.4 259.4C312.3 263.8 313.4 269.2 314.1 275.5C314.8 281.8 315.8 290.2 315.7 297.1C315.5 303.9 314.6 310.2 313.2 316.8C311.8 323.4 309.8 333.1 307.1 336.6C304.4 340.0 299.7 339.5 297.0 337.5C294.4 335.4 292.1 329.5 291.3 324.0C290.5 318.5 291.4 311.1 292.2 304.2C292.9 297.4 294.1 289.9 295.8 282.7C297.4 275.5 300.0 266.8 302.1 261.2C304.2 255.5 306.8 249.3 308.3 249.0Z" fill="url(#hTL)" stroke="#4a4a4a" stroke-width="0.4" stroke-linejoin="round"/>
<path d="M416.0 249.0C417.4 249.0 420.4 256.1 422.7 261.2C425.0 266.2 427.6 272.5 429.9 279.1C432.1 285.7 434.7 294.1 436.1 300.7C437.6 307.2 439.0 314.1 438.8 318.6C438.7 323.2 437.0 325.8 435.3 327.9C433.5 330.1 430.3 331.4 428.1 331.5C425.9 331.7 423.9 331.8 422.0 329.0C420.1 326.3 418.1 320.3 416.6 315.0C415.1 309.7 413.6 303.0 413.0 297.1C412.4 291.1 412.8 285.1 413.0 279.1C413.2 273.1 413.9 266.2 414.4 261.2C414.9 256.1 414.7 249.0 416.0 249.0Z" fill="url(#hTR)" stroke="#4a4a4a" stroke-width="0.4" stroke-linejoin="round"/>
<path d="M346.5 378.9C346.5 377.5 357.2 374.4 365.4 373.3C373.6 372.2 387.4 372.9 395.6 372.3C403.7 371.7 410.3 369.0 414.4 369.5C418.5 370.0 423.2 373.3 420.1 375.1C416.9 377.0 404.7 379.7 395.6 380.8C386.4 381.9 373.6 382.1 365.4 381.7C357.2 381.4 346.5 380.3 346.5 378.9Z" fill="#6a6a6a"/>
<path d="M339.4 388.3C339.9 385.7 340.7 382.2 342.4 380.6C344.0 378.9 344.8 379.0 349.2 378.6C353.5 378.2 362.1 378.3 368.6 378.3C375.1 378.3 388.1 378.6 388.1 378.6C388.1 378.6 395.8 369.4 400.7 366.9C405.6 364.5 413.0 363.4 417.2 364.0C421.4 364.7 424.7 367.6 426.0 370.8C427.3 374.1 426.5 379.3 425.0 383.5C423.6 387.7 421.0 392.4 417.2 396.1C413.5 399.8 409.1 403.3 402.6 405.8C396.2 408.4 386.4 410.5 378.3 411.2C370.2 411.8 360.0 410.9 354.0 409.7C348.0 408.5 344.8 406.2 342.4 403.9C339.9 401.6 339.9 398.7 339.4 396.1C339.0 393.5 339.0 390.9 339.4 388.3Z" fill="url(#hC)" stroke="#5e5e5e" stroke-width="0.6" stroke-linejoin="round"/>
<path d="M379.300 615.200L376.600 479.500" stroke="#dc1420" stroke-width="2"/><path d="M379.300 615.200L509.500 589.300" stroke="#1ee02c" stroke-width="2"/><path d="M379.300 615.200L316 572.800" stroke="#f8f020" stroke-width="2"/><circle cx="377.900" cy="543" r="3" fill="#7c8a1c" stroke="#2a2a10" stroke-width="1"/><text x="379" y="489.500" font-family="Liberation Sans,sans-serif" font-size="10" font-weight="bold" fill="#e8141c">z</text><text x="511" y="600" font-family="Liberation Sans,sans-serif" font-size="11" font-weight="bold" fill="#18d020">x</text><text x="0" y="0" transform="translate(316 580) rotate(35)" font-family="Liberation Sans,sans-serif" font-size="11" font-weight="bold" fill="#f0e81c">y</text><rect x="382.500" y="625.500" width="35" height="19" fill="none" stroke="#f0e628" stroke-width="1"/><text x="385" y="640" font-family="Liberation Sans,sans-serif" font-size="12" fill="#e6e6a8" stroke="#f0e628" stroke-width=".3">WCS</text></svg>
<svg class="a" style="left:0;top:980px" width="1167" height="28" viewBox="0 980 1167 28"><path d="M0.5 980V985M28.5 980V989M57.5 980V985M86.5 980V985M114.5 980V985M143.5 980V985M171.5 980V994M200.5 980V985M229.5 980V985M257.5 980V985M286.5 980V985M314.5 980V989M343.5 980V985M372.5 980V985M400.5 980V985M429.5 980V985M457.5 980V994M486.5 980V985M515.5 980V985M543.5 980V985M572.5 980V985M600.5 980V989M629.5 980V985M658.5 980V985M686.5 980V985M715.5 980V985M743.5 980V994M772.5 980V985M801.5 980V985M829.5 980V985M858.5 980V985M886.5 980V989M915.5 980V985M944.5 980V985M972.5 980V985M1001.5 980V985M1029.5 980V994M1058.5 980V985M1087.5 980V985M1115.5 980V985M1144.5 980V985" stroke="#50505a" stroke-width="1"/><text x="171.5" y="1009" text-anchor="middle" font-family="Liberation Sans,sans-serif" font-size="12" fill="#101018">2</text><text x="457.5" y="1009" text-anchor="middle" font-family="Liberation Sans,sans-serif" font-size="12" fill="#101018">3</text><text x="743.5" y="1009" text-anchor="middle" font-family="Liberation Sans,sans-serif" font-size="12" fill="#101018">4</text><text x="1029.5" y="1009" text-anchor="middle" font-family="Liberation Sans,sans-serif" font-size="12" fill="#101018">5</text><text x="1136" y="1003" font-family="Liberation Sans,sans-serif" font-size="12" fill="#101018">cm</text></svg>
<!-- right panel -->
<div class="a" id="rp"></div>
<div class="a" style="left:1167px;top:113px;width:3px;height:895px;background:linear-gradient(90deg,#fafafa,#f0f0f0);"></div>
<div class="a" style="left:1290px;top:113px;width:47px;height:19px;background:linear-gradient(#bdbdbd,#c9c9c9);border-bottom:1px solid #a9a9a9;box-sizing:border-box;"></div>
<div class="a" style="left:1290px;top:132px;width:47px;height:6px;background:#ededed;"></div>
<div class="a" style="left:1284px;top:138px;width:48px;height:17px;box-sizing:border-box;border:1px solid #b4b4b4;border-bottom:none;border-radius:3px 3px 0 0;background:linear-gradient(#e9e9e9,#d2d2d2 55%,#b2b2b2);"></div>
<div class="a" style="left:1333px;top:138px;width:20px;height:17px;box-sizing:border-box;border:1px solid #b4b4b4;border-bottom:none;border-radius:3px 3px 0 0;background:linear-gradient(#e9e9e9,#d2d2d2 55%,#b2b2b2);"></div>
<div class="t" style="letter-spacing:-0.198px;left:1289.3px;top:140.63px;font-size:11.3px;color:#222;">Section</div>
<div class="a" style="left:1290px;top:155px;width:47px;height:136px;background:#ffffff;border-top:1px solid #b9b9b9;border-bottom:1px solid #d0d0d0;box-sizing:border-box;"></div>
<div class="t" style="letter-spacing:-0.480px;left:1284.1px;top:192.63px;font-size:11.3px;clip-path:inset(0 0 0 9.700px);">Wire</div>
<div class="t" style="letter-spacing:-0.771px;left:1266.7px;top:224.43px;font-size:11.3px;">Always Visible</div>
<div class="t" style="letter-spacing:-0.416px;left:1283.7px;top:254.73px;font-size:11.3px;">Triangles Visible</div>
<div class="a" style="left:1290px;top:291px;width:47px;height:5px;background:#f0f0f0;"></div>
<div class="a" style="left:1290px;top:296px;width:47px;height:1px;background:#9c9c9c;"></div>
<div class="a" style="left:1290px;top:297px;width:47px;height:1px;background:#fdfdfd;"></div>
<div class="a" style="left:1290px;top:298px;width:47px;height:1px;background:#b4b4b4;"></div>
<div class="a" style="left:1290px;top:304px;width:47px;height:19px;background:linear-gradient(#bdbdbd,#c9c9c9);border-top:1px solid #ababab;border-bottom:1px solid #a9a9a9;box-sizing:border-box;"></div>
<div class="a" style="left:1294px;top:329px;width:60px;height:17px;box-sizing:border-box;border:1px solid #b4b4b4;border-bottom:none;border-radius:3px 3px 0 0;background:linear-gradient(#e9e9e9,#d2d2d2 55%,#b2b2b2);"></div>
<div class="t" style="left:1298.3px;top:331.23px;font-size:11.3px;letter-spacing:-0.25px;color:#222;">Part Fixing</div>
<div class="a" style="left:1290px;top:346px;width:47px;height:24px;background:linear-gradient(#f2f2f2,#fcfcfc);border-top:1px solid #a9a9a9;box-sizing:border-box;"></div>
<div class="a" style="left:1290px;top:370px;width:47px;height:454px;background:#ffffff;border-top:1px solid #a0a0a0;box-sizing:border-box;"></div>
<div class="a" style="left:1302px;top:372px;width:1px;height:22px;background:#e2e2e2;"></div>
<div class="a" style="left:1326px;top:372px;width:1px;height:22px;background:#e2e2e2;"></div>
<div class="t" style="left:1306.5px;top:380.11px;font-size:10.5px;color:#222;clip-path:inset(0 0 0 3px);">C...</div>
<div class="t" style="left:1331.5px;top:380.11px;font-size:10.5px;color:#222;">V</div>
<div class="a" style="left:1307.500px;top:398.500px;width:10px;height:10px;border-radius:6px;border:1px solid #1a1a1a;background:#c4c4c4;box-sizing:border-box;"></div>
<div class="a" style="left:1334px;top:397px;width:4px;height:9px;background:#9fb4e4;border-radius:1px;"></div>
<div class="a" style="left:1290px;top:824px;width:47px;height:15px;background:linear-gradient(#c0c0c0,#c8c8c8);"></div>
<div class="a" style="left:1290px;top:839px;width:47px;height:2px;background:#dcdcdc;"></div>
<div class="a" style="left:1290px;top:841px;width:47px;height:1px;background:#8e8e8e;"></div>
<div class="a" style="left:1290px;top:842px;width:47px;height:36px;background:#eeeeee;"></div>
<svg class="a" style="left:1293px;top:845px" width="44" height="28" viewBox="1293 845 44 28"><path d="M1294.500 849.500l6 -3 9 3v9l-7 4 -8 -5z" fill="#8890d8" stroke="#6068b0" stroke-width=".7"/><path d="M1294.500 849.500l8 3v10l-8 -5z" fill="#d0d4f6"/><path d="M1302.500 852.500l7 -3" stroke="#6068b0" stroke-width=".6"/><circle cx="1301" cy="854.800" r="2.300" fill="#1c1c24"/><circle cx="1303.300" cy="865.500" r="2.500" fill="none" stroke="#fafafa" stroke-width="1.300"/><circle cx="1311.300" cy="865.500" r="2.500" fill="none" stroke="#fafafa" stroke-width="1.300"/><path d="M1313.500 863.500l4 -5" stroke="#fafafa" stroke-width="1.300"/><path d="M1324.500 845v25" stroke="#8c8c8c"/><path d="M1335 854h3v8l-2 2 -1 -3z" fill="#e060a0"/><path d="M1335 854h3v3h-3z" fill="#9a8fe0"/></svg>
<div class="a" style="left:1290px;top:878px;width:47px;height:1px;background:#8e8e8e;"></div>
<div class="a" style="left:1290px;top:879px;width:47px;height:4px;background:#f6f6f6;"></div>
<div class="a" style="left:1290px;top:883px;width:47px;height:1px;background:#a8a8a8;"></div>
<div class="a" style="left:1290px;top:884px;width:47px;height:17px;background:linear-gradient(#c0c0c0,#c8c8c8);"></div>
<div class="a" style="left:1290px;top:901px;width:47px;height:1px;background:#9c9c9c;"></div>
<div class="a" style="left:1290px;top:902px;width:47px;height:4px;background:#f4f4f4;"></div>
<div class="a" style="left:1180px;top:905px;width:157px;height:19px;background:#f0f0f0;border-left:1px solid #8c8c8c;border-bottom:2px solid #787878;box-sizing:border-box;"></div>
<div class="a" style="left:1185px;top:905px;width:38px;height:17px;box-sizing:border-box;border:1px solid #c9c9c9;border-bottom:none;border-radius:4px 4px 0 0;background:#fff;"></div>
<div class="a" style="left:1223px;top:906px;width:50px;height:16px;box-sizing:border-box;border:1px solid #b4b4b4;border-bottom:none;border-radius:3px 3px 0 0;background:linear-gradient(#e9e9e9,#d2d2d2 55%,#b2b2b2);"></div>
<div class="a" style="left:1274px;top:906px;width:70px;height:16px;box-sizing:border-box;border:1px solid #b4b4b4;border-bottom:none;border-radius:3px 3px 0 0;background:linear-gradient(#e9e9e9,#d2d2d2 55%,#b2b2b2);"></div>
<div class="t" style="left:1193.5px;top:911.43px;font-size:11.3px;">Text</div>
<div class="t" style="left:1226.5px;top:911.43px;font-size:11.3px;color:#222;">Drawing</div>
<div class="t" style="left:1277.5px;top:911.43px;font-size:11.3px;color:#222;">Attachments</div>
<div class="a" style="left:1182px;top:929px;width:160px;height:18px;box-sizing:border-box;border:1px solid #ababab;border-radius:2px;background:linear-gradient(#c4c4c4,#cbcbcb);"></div>
<div class="t" style="left:1187.3px;top:932.53px;font-size:11.9px;font-weight:bold;">Measurement Pages</div>
<div class="a" style="left:1180px;top:949px;width:157px;height:21px;background:#f0f0f0;border-left:1px solid #8c8c8c;border-bottom:1px solid #8c8c8c;box-sizing:border-box;"></div>
<div class="a" style="left:1185px;top:951px;width:57px;height:18px;box-sizing:border-box;border:1px solid #c9c9c9;border-bottom:none;border-radius:4px 4px 0 0;background:#fff;"></div>
<div class="a" style="left:1242px;top:953px;width:43px;height:16px;box-sizing:border-box;border:1px solid #b4b4b4;border-bottom:none;border-radius:3px 3px 0 0;background:linear-gradient(#e9e9e9,#d2d2d2 55%,#b2b2b2);"></div>
<div class="a" style="left:1286px;top:953px;width:38px;height:16px;box-sizing:border-box;border:1px solid #b4b4b4;border-bottom:none;border-radius:3px 3px 0 0;background:linear-gradient(#e9e9e9,#d2d2d2 55%,#b2b2b2);"></div>
<div class="a" style="left:1324px;top:953px;width:30px;height:16px;box-sizing:border-box;border:1px solid #b4b4b4;border-bottom:none;border-radius:3px 3px 0 0;background:linear-gradient(#e9e9e9,#d2d2d2 55%,#b2b2b2);"></div>
<div class="t" style="left:1192.4px;top:955.83px;font-size:11.3px;">Distance</div>
<div class="t" style="left:1245.4px;top:955.83px;font-size:11.3px;color:#333;">Radius</div>
<div class="t" style="left:1289.7px;top:955.83px;font-size:11.3px;color:#333;">Angle</div>
<div class="t" style="left:1327.5px;top:955.83px;font-size:11.3px;color:#333;">Info</div>
<div class="a" style="left:1182px;top:974px;width:160px;height:18px;box-sizing:border-box;border:1px solid #ababab;border-radius:2px;background:linear-gradient(#c4c4c4,#cbcbcb);"></div>
<div class="t" style="left:1187.3px;top:977.43px;font-size:11.9px;font-weight:bold;">Fix Pages</div>
<div class="a" style="left:1180px;top:994px;width:157px;height:14px;background:#f0f0f0;border-left:1px solid #8c8c8c;box-sizing:border-box;"></div>
<div class="a" style="left:1185px;top:996px;width:51px;height:14px;box-sizing:border-box;border:1px solid #c9c9c9;border-bottom:none;border-radius:4px 4px 0 0;background:#fff;"></div>
<div class="a" style="left:1237px;top:998px;width:33px;height:12px;box-sizing:border-box;border:1px solid #b4b4b4;border-bottom:none;border-radius:3px 3px 0 0;background:linear-gradient(#e9e9e9,#d2d2d2 55%,#b2b2b2);"></div>
<div class="a" style="left:1271px;top:998px;width:32px;height:12px;box-sizing:border-box;border:1px solid #b4b4b4;border-bottom:none;border-radius:3px 3px 0 0;background:linear-gradient(#e9e9e9,#d2d2d2 55%,#b2b2b2);"></div>
<div class="a" style="left:1304px;top:998px;width:50px;height:12px;box-sizing:border-box;border:1px solid #b4b4b4;border-bottom:none;border-radius:3px 3px 0 0;background:linear-gradient(#e9e9e9,#d2d2d2 55%,#b2b2b2);"></div>
<div class="t" style="left:1193.0px;top:1000.43px;font-size:11.3px;">Autofix</div>
<div class="t" style="left:1240.3px;top:1000.43px;font-size:11.3px;color:#333;">Basic</div>
<div class="t" style="left:1275.3px;top:1000.43px;font-size:11.3px;color:#333;">Hole</div>
<div class="t" style="left:1308.0px;top:1000.43px;font-size:11.3px;color:#333;">Triangle</div>
<!-- dialog -->
<svg width="0" height="0" style="position:absolute"><defs><radialGradient id="lens2" cx="38%" cy="32%" r="75%"><stop offset="0" stop-color="#dff2ff"/><stop offset=".55" stop-color="#86c4f2"/><stop offset="1" stop-color="#4e9fe2"/></radialGradient><linearGradient id="hand2" x1="0" y1="0" x2="1" y2="1"><stop offset="0" stop-color="#c2c486"/><stop offset="1" stop-color="#7d8446"/></linearGradient></defs></svg>
<div class="a" id="dlg"></div>
<div class="a" id="dtitle"></div>
<svg class="a" style="left:839px;top:118px" width="16" height="16" viewBox="0 0 16 16"><g transform="rotate(8 8 8)"><path d="M5.300 1.300h5v4h4.300v5h-4.300v4.300h-5v-4.300h-4.200v-5h4.200z" fill="#ee1414"/></g></svg>
<div class="t" style="letter-spacing:-0.031px;left:860.8px;top:120.48px;font-size:11.6px;">Fix Wizard (Part: CC38-5) &gt; Diagnostics</div>
<svg class="a" style="left:1165px;top:112px" width="125" height="30" viewBox="1165 112 125 30"><path d="M1173 126.500h10" stroke="#111" stroke-width="1.100"/><rect x="1218.500" y="121.500" width="9" height="9" fill="none" stroke="#c8c8c8"/><path d="M1264 121l10 10M1274 121l-10 10" stroke="#111" stroke-width="1.100"/></svg>
<div class="a" style="left:835px;top:146px;width:122px;height:766px;box-sizing:border-box;border:1px solid #828282;background:#fff;"><div style="position:absolute;left:1px;top:1px;right:1px;bottom:1px;border:1px solid #6e6e6e;border-right-color:#e4e4e4;border-bottom-color:#e4e4e4;"></div></div>
<div class="a" style="left:862px;top:150px;width:89px;height:20px;background:#efefef;"></div>
<div class="a" style="left:838px;top:201px;width:113px;height:1px;background:#5a5a5a;"></div>
<div class="a" style="left:838px;top:369px;width:113px;height:1px;background:#5a5a5a;"></div>
<div class="t" style="letter-spacing:0.024px;left:864.6px;top:154.18px;font-size:11.6px;">Diagnostics</div>
<div class="t" style="letter-spacing:0.081px;left:864.6px;top:174.78px;font-size:11.6px;">Combined Fix</div>
<div class="t" style="letter-spacing:0.133px;left:864.6px;top:216.58px;font-size:11.6px;">Normals</div>
<div class="t" style="letter-spacing:0.103px;left:864.6px;top:237.58px;font-size:11.6px;">Stitching</div>
<div class="t" style="letter-spacing:-0.188px;left:864.6px;top:258.58px;font-size:11.6px;">Noise Shells</div>
<div class="t" style="letter-spacing:-0.071px;left:864.6px;top:279.58px;font-size:11.6px;">Holes</div>
<div class="t" style="letter-spacing:-0.241px;left:864.6px;top:300.58px;font-size:11.6px;">Triangles</div>
<div class="t" style="letter-spacing:-0.126px;left:864.6px;top:321.58px;font-size:11.6px;">Overlaps</div>
<div class="t" style="letter-spacing:-0.380px;left:864.6px;top:342.58px;font-size:11.6px;">Shells</div>
<div class="t" style="letter-spacing:-0.046px;left:864.6px;top:384.08px;font-size:11.6px;">Profiles</div>
<svg class="a" style="left:840px;top:148px" width="24" height="24" viewBox="-14 -8 24 24"><path d="M-4.600 3l2.300 2.300 -7.800 7.400c-1.200 1 -3.600 -1.300 -2.600 -2.500z" fill="url(#hand2)" stroke="#7c8048" stroke-width=".5"/><circle cx="0" cy="0" r="5.500" fill="url(#lens2)" stroke="#3583c8" stroke-width="1.200"/></svg>
<svg class="a" style="left:844px;top:171px" width="18" height="18" viewBox="0 0 18 18"><g stroke="#7f9cc8" stroke-width=".8" fill="#dbe8fa"><path d="M5.500 1.500l8.500 1.200v11l-8.500 -1.500z"/><path d="M3.500 3l8.500 1.200v11l-8.500 -1.500z" fill="#cfe0f7"/><path d="M1.500 4.500l8.500 1.200v11l-8.500 -1.500z" fill="#e2edfb"/></g></svg>
<svg class="a" style="left:842px;top:212px" width="20" height="21" viewBox="0 0 20 21"><path d="M0.8 4 L9.5 0.8 L18.8 4.3 L9.3 8.3Z" fill="#c9cff6"/><path d="M0.8 4 L9.3 8.3 L9.3 19.6 L1.3 14.8Z" fill="#e4e7fb"/><path d="M18.8 4.3 L9.3 8.3 L9.3 19.6 L18.3 15.4Z" fill="#d42a22"/><path d="M0.8 4 L9.5 0.8 L18.8 4.3 L9.3 8.3ZM9.3 8.3V19.6M0.8 4L1.3 14.8L9.3 19.6L18.3 15.4L18.8 4.3" fill="none" stroke="#5a64ad" stroke-width=".9" stroke-linejoin="round"/></svg>
<svg class="a" style="left:842px;top:233px" width="20" height="21" viewBox="0 0 20 21"><path d="M0.8 4 L9.5 0.8 L18.8 4.3 L9.3 8.3Z" fill="#c9cff6"/><path d="M0.8 4 L9.3 8.3 L9.3 19.6 L1.3 14.8Z" fill="#e4e7fb"/><path d="M18.8 4.3 L9.3 8.3 L9.3 19.6 L18.3 15.4Z" fill="#8c93dc"/><path d="M0.8 4 L9.5 0.8 L18.8 4.3 L9.3 8.3ZM9.3 8.3V19.6M0.8 4L1.3 14.8L9.3 19.6L18.3 15.4L18.8 4.3" fill="none" stroke="#5a64ad" stroke-width=".9" stroke-linejoin="round"/><path d="M9.5 8.800l8.600 -3.700v2.300l-8.600 3.800z" fill="#f2e33a" stroke="#a89a20" stroke-width=".4"/></svg>
<svg class="a" style="left:842px;top:254px" width="20" height="21" viewBox="0 0 20 21"><path d="M0.8 4 L9.5 0.8 L18.8 4.3 L9.3 8.3Z" fill="#c9cff6"/><path d="M0.8 4 L9.3 8.3 L9.3 19.6 L1.3 14.8Z" fill="#e4e7fb"/><path d="M18.8 4.3 L9.3 8.3 L9.3 19.6 L18.3 15.4Z" fill="#8c93dc"/><path d="M0.8 4 L9.5 0.8 L18.8 4.3 L9.3 8.3ZM9.3 8.3V19.6M0.8 4L1.3 14.8L9.3 19.6L18.3 15.4L18.8 4.3" fill="none" stroke="#5a64ad" stroke-width=".9" stroke-linejoin="round"/><circle cx="5" cy="3.3" r="1.25" fill="#141420"/><circle cx="10" cy="2.6" r="1.25" fill="#141420"/><circle cx="13.5" cy="5" r="1.25" fill="#141420"/><circle cx="8" cy="5.8" r="1.25" fill="#141420"/><circle cx="3" cy="8.5" r="1.25" fill="#141420"/><circle cx="6.5" cy="13" r="1.25" fill="#141420"/><circle cx="3.2" cy="13" r="1.25" fill="#141420"/><circle cx="12" cy="11" r="1.25" fill="#141420"/><circle cx="16" cy="8.5" r="1.25" fill="#141420"/><circle cx="13" cy="16" r="1.25" fill="#141420"/><circle cx="16.5" cy="13.5" r="1.25" fill="#141420"/></svg>
<svg class="a" style="left:842px;top:275px" width="20" height="21" viewBox="0 0 20 21"><path d="M0.8 4 L9.5 0.8 L18.8 4.3 L9.3 8.3Z" fill="#d8202c"/><path d="M0.8 4 L9.3 8.3 L9.3 19.6 L1.3 14.8Z" fill="#e4e7fb"/><path d="M18.8 4.3 L9.3 8.3 L9.3 19.6 L18.3 15.4Z" fill="#8c93dc"/><path d="M0.8 4 L9.5 0.8 L18.8 4.3 L9.3 8.3ZM9.3 8.3V19.6M0.8 4L1.3 14.8L9.3 19.6L18.3 15.4L18.8 4.3" fill="none" stroke="#5a64ad" stroke-width=".9" stroke-linejoin="round"/></svg>
<svg class="a" style="left:842px;top:296px" width="20" height="21" viewBox="0 0 20 21"><path d="M0.8 4 L9.5 0.8 L18.8 4.3 L9.3 8.3Z" fill="#c9cff6"/><path d="M0.8 4 L9.3 8.3 L9.3 19.6 L1.3 14.8Z" fill="#e4e7fb"/><path d="M18.8 4.3 L9.3 8.3 L9.3 19.6 L18.3 15.4Z" fill="#8c93dc"/><path d="M0.8 4 L9.5 0.8 L18.8 4.3 L9.3 8.3ZM9.3 8.3V19.6M0.8 4L1.3 14.8L9.3 19.6L18.3 15.4L18.8 4.3" fill="none" stroke="#5a64ad" stroke-width=".9" stroke-linejoin="round"/><path d="M0.8 4L9.3 19.6M9.3 8.3L18.3 15.4M0.8 4L18.8 4.3M9.5 .8L9.3 8.3" stroke="#5a64ad" stroke-width=".8" fill="none"/></svg>
<svg class="a" style="left:842px;top:317px" width="20" height="21" viewBox="0 0 20 21"><path d="M3 2.500L9 .6l6 2.200v9l-6 2.500 -6 -3z" fill="#aab0ea" stroke="#5a64ad" stroke-width=".8"/><path d="M7.5 7.500l5.800 -2.200 5.700 2.300v9.400l-5.700 2.800 -5.800 -3.500z" fill="#8c93dc" stroke="#5a64ad" stroke-width=".8"/><path d="M7.5 7.500l5.800 2.500v9.800l-5.800 -3.500z" fill="#dfe3fb" stroke="#5a64ad" stroke-width=".6"/><path d="M13.300 10l5.700 -2.400" stroke="#5a64ad" stroke-width=".6"/></svg>
<svg class="a" style="left:842px;top:338px" width="20" height="21" viewBox="0 0 20 21"><path d="M0.8 4 L9.5 0.8 L18.8 4.3 L9.3 8.3Z" fill="#c9cff6"/><path d="M0.8 4 L9.3 8.3 L9.3 19.6 L1.3 14.8Z" fill="#e4e7fb"/><path d="M18.8 4.3 L9.3 8.3 L9.3 19.6 L18.3 15.4Z" fill="#8c93dc"/><path d="M0.8 4 L9.5 0.8 L18.8 4.3 L9.3 8.3ZM9.3 8.3V19.6M0.8 4L1.3 14.8L9.3 19.6L18.3 15.4L18.8 4.3" fill="none" stroke="#5a64ad" stroke-width=".9" stroke-linejoin="round"/></svg>
<svg class="a" style="left:846px;top:381px" width="14" height="19" viewBox="0 0 14 19"><path d="M1 .8h7.500l4.500 4.500v12.700h-12z" fill="#e3f6fd" stroke="#4a9fd0" stroke-width=".9"/><path d="M8.500 .8v4.500h4.500" fill="#bfe6f7" stroke="#4a9fd0" stroke-width=".8"/><path d="M3.300 8.500h7M3.300 10.700h7M3.300 12.900h7" stroke="#3a7ab8" stroke-width="1"/></svg>
<div class="t" style="letter-spacing:-0.317px;left:968.3px;top:146.00px;font-size:11.1px;">Current Part:</div>
<div class="a" style="left:1041px;top:146px;width:197px;height:21px;box-sizing:border-box;border:1px solid #adadad;background:#e2e2e2;"></div>
<div class="t" style="letter-spacing:-0.315px;left:1044.2px;top:151.90px;font-size:11.1px;">CC38-5.8MM-STL</div>
<svg class="a" style="left:1224px;top:153px" width="11" height="8" viewBox="0 0 11 8"><path d="M1 1.500l4.300 4.300 4.300 -4.300" fill="none" stroke="#404040" stroke-width="1.200"/></svg>
<div class="a" style="left:1243px;top:147px;width:44px;height:22px;background:#cccccc;border:1px solid #c2c2c2;box-sizing:border-box;"></div>
<div class="t" style="letter-spacing:-0.528px;left:1254.3px;top:152.70px;font-size:11.1px;color:#a3a3a3;">Next</div>
<div class="a" style="left:964px;top:178px;width:320px;height:381px;box-sizing:border-box;border:1px solid #b9b9b9;border-radius:5px;background:linear-gradient(#fbfbfb,#f6f6f6 40%,#f2f2f2);box-shadow:inset 0 0 0 1px #fdfdfd;"></div>
<div class="grp" style="left:974px;top:205px;width:299px;height:68px;"></div>
<div class="grpl" style="left:981px;top:199.600px;letter-spacing:-0.42px;">Advice</div>
<div class="t" style="letter-spacing:-0.072px;left:986.0px;top:220.13px;font-size:11.3px;">No more errors are detected. It seems that the part</div>
<div class="t" style="letter-spacing:-0.147px;left:986.0px;top:233.13px;font-size:11.3px;">is ok. Note that not all parameters were analysed.</div>
<div class="a" style="left:1248px;top:218px;width:16px;height:46px;background:#e9e9e9;"></div>
<svg class="a" style="left:1248px;top:218px" width="16" height="46" viewBox="0 0 16 46"><path d="M4.500 9.500l3.500 -3.500 3.500 3.500M4.500 36.500l3.500 3.500 3.500 -3.500" fill="none" stroke="#b4b4b4" stroke-width="1.300"/></svg>
<div class="grp" style="left:974px;top:284px;width:299px;height:265px;"></div>
<div class="grpl" style="left:981px;top:279.600px;letter-spacing:-0.42px;">Diagnostics</div>
<div class="cb" style="left:984px;top:299px"></div>
<div class="t" style="letter-spacing:-0.466px;left:1000.4px;top:300.80px;font-size:11.1px;">Full Analysis</div>
<div class="cb" style="left:1004px;top:329px"><svg width="11" height="11" viewBox="0 0 11 11" style="display:block"><path d="M1.800 5.300L4.500 8L9.500 2.300" fill="none" stroke="#2a2a2a" stroke-width="1.300"/></svg></div>
<svg class="a" style="left:1023.5px;top:327.79999999999995px" width="18" height="16" viewBox="0 0 18 16"><path d="M0 6.6 L3 4.6 L6.600 10.300 L15.600 0 L17 .5 L7.600 15.600 L6 15.600Z" fill="#1f8f40"/></svg>
<div class="t" style="left:1044.6px;top:330.08px;font-size:10.3px;font-weight:bold;font-family:'DejaVu Sans','Liberation Sans',sans-serif;">0</div>
<div class="t" style="letter-spacing:-0.164px;left:1088.6px;top:329.63px;font-size:11.3px;">inverted normals detected</div>
<div class="cb" style="left:1004px;top:349px"><svg width="11" height="11" viewBox="0 0 11 11" style="display:block"><path d="M1.800 5.300L4.500 8L9.500 2.300" fill="none" stroke="#2a2a2a" stroke-width="1.300"/></svg></div>
<svg class="a" style="left:1023.5px;top:347.79999999999995px" width="18" height="16" viewBox="0 0 18 16"><path d="M0 6.6 L3 4.6 L6.600 10.300 L15.600 0 L17 .5 L7.600 15.600 L6 15.600Z" fill="#1f8f40"/></svg>
<div class="t" style="left:1044.6px;top:350.08px;font-size:10.3px;font-weight:bold;font-family:'DejaVu Sans','Liberation Sans',sans-serif;">0</div>
<div class="t" style="letter-spacing:-0.203px;left:1088.6px;top:349.63px;font-size:11.3px;">bad edges detected</div>
<svg class="a" style="left:1043.5px;top:367.79999999999995px" width="18" height="16" viewBox="0 0 18 16"><path d="M0 6.6 L3 4.6 L6.600 10.300 L15.600 0 L17 .5 L7.600 15.600 L6 15.600Z" fill="#1f8f40"/></svg>
<div class="t" style="left:1064.6px;top:370.08px;font-size:10.3px;font-weight:bold;font-family:'DejaVu Sans','Liberation Sans',sans-serif;">0</div>
<div class="t" style="letter-spacing:-0.143px;left:1108.6px;top:369.63px;font-size:11.3px;">bad contours detected</div>
<div class="cb" style="left:1024px;top:389px"><svg width="11" height="11" viewBox="0 0 11 11" style="display:block"><path d="M1.800 5.300L4.500 8L9.500 2.300" fill="none" stroke="#2a2a2a" stroke-width="1.300"/></svg></div>
<svg class="a" style="left:1043.5px;top:387.79999999999995px" width="18" height="16" viewBox="0 0 18 16"><path d="M0 6.6 L3 4.6 L6.600 10.300 L15.600 0 L17 .5 L7.600 15.600 L6 15.600Z" fill="#1f8f40"/></svg>
<div class="t" style="left:1064.6px;top:390.08px;font-size:10.3px;font-weight:bold;font-family:'DejaVu Sans','Liberation Sans',sans-serif;">0</div>
<div class="t" style="letter-spacing:-0.174px;left:1108.6px;top:389.63px;font-size:11.3px;">near bad edges detected</div>
<div class="cb" style="left:1024px;top:409px"><svg width="11" height="11" viewBox="0 0 11 11" style="display:block"><path d="M1.800 5.300L4.500 8L9.500 2.300" fill="none" stroke="#2a2a2a" stroke-width="1.300"/></svg></div>
<svg class="a" style="left:1043.5px;top:407.79999999999995px" width="18" height="16" viewBox="0 0 18 16"><path d="M0 6.6 L3 4.6 L6.600 10.300 L15.600 0 L17 .5 L7.600 15.600 L6 15.600Z" fill="#1f8f40"/></svg>
<div class="t" style="left:1064.6px;top:410.08px;font-size:10.3px;font-weight:bold;font-family:'DejaVu Sans','Liberation Sans',sans-serif;">0</div>
<div class="t" style="letter-spacing:-0.216px;left:1108.6px;top:409.63px;font-size:11.3px;">planar holes detected</div>
<div class="cb" style="left:1004px;top:429px"><svg width="11" height="11" viewBox="0 0 11 11" style="display:block"><path d="M1.800 5.300L4.500 8L9.500 2.300" fill="none" stroke="#2a2a2a" stroke-width="1.300"/></svg></div>
<svg class="a" style="left:1023.5px;top:427.79999999999995px" width="18" height="16" viewBox="0 0 18 16"><path d="M0 6.6 L3 4.6 L6.600 10.300 L15.600 0 L17 .5 L7.600 15.600 L6 15.600Z" fill="#1f8f40"/></svg>
<div class="t" style="left:1044.6px;top:430.08px;font-size:10.3px;font-weight:bold;font-family:'DejaVu Sans','Liberation Sans',sans-serif;">1</div>
<div class="t" style="letter-spacing:-0.265px;left:1088.6px;top:429.63px;font-size:11.3px;">shells detected</div>
<svg class="a" style="left:1043.5px;top:447.79999999999995px" width="18" height="16" viewBox="0 0 18 16"><path d="M0 6.6 L3 4.6 L6.600 10.300 L15.600 0 L17 .5 L7.600 15.600 L6 15.600Z" fill="#1f8f40"/></svg>
<div class="t" style="left:1064.6px;top:450.08px;font-size:10.3px;font-weight:bold;font-family:'DejaVu Sans','Liberation Sans',sans-serif;">0</div>
<div class="t" style="letter-spacing:-0.330px;left:1108.6px;top:449.63px;font-size:11.3px;">possible noise shells detected</div>
<div class="cb" style="left:1004px;top:469px"></div>
<div class="a" style="left:1030.3px;top:474.0px;width:3.4px;height:3.400px;border-radius:2px;background:#2a2ac4;"></div>
<div class="t" style="letter-spacing:-0.161px;left:1088.6px;top:469.63px;font-size:11.3px;">overlapping triangles detected</div>
<div class="cb" style="left:1004px;top:489px"></div>
<div class="a" style="left:1030.3px;top:494.0px;width:3.4px;height:3.400px;border-radius:2px;background:#2a2ac4;"></div>
<div class="t" style="letter-spacing:-0.135px;left:1088.6px;top:489.63px;font-size:11.3px;">intersecting triangles detected</div>
<div class="a" style="left:1168px;top:516px;width:96px;height:24px;box-sizing:border-box;border:2px solid #0078d7;background:#e3e3e3;"><div style="position:absolute;left:1px;top:1px;right:1px;bottom:1px;border:1px dotted #222;"></div></div>
<svg class="a" style="left:1170.4px;top:515.9px" width="24" height="24" viewBox="-14 -8 24 24"><path d="M-4.600 3l2.300 2.300 -7.800 7.400c-1.200 1 -3.600 -1.300 -2.600 -2.500z" fill="url(#hand)" stroke="#a9792c" stroke-width=".5"/><circle cx="0" cy="0" r="5.500" fill="url(#lens)" stroke="#5b8dbd" stroke-width="1.200"/></svg>
<div class="t" style="letter-spacing:-0.364px;left:1206.4px;top:522.10px;font-size:11.1px;">Update</div>
<div class="a" style="left:993px;top:887px;width:150px;height:25px;background:#cccccc;border:1px solid #c4c4c4;box-sizing:border-box;"></div>
<svg class="a" style="left:996px;top:889px" width="23" height="20" viewBox="0 0 23 20"><path d="M1.500 6.500h10v-4.500l9.500 8 -9.500 8v-4.500h-10z" fill="#a6d99a" stroke="#8fc585" stroke-width="1"/></svg>
<div class="t" style="letter-spacing:-0.102px;left:1044.5px;top:895.90px;font-size:11.1px;color:#ffffff;">Follow Advice</div>
<div class="t" style="letter-spacing:-0.102px;left:1043.5px;top:894.90px;font-size:11.1px;color:#b4b4b4;">Follow Advice</div>
<div class="btn" style="left:1149px;top:887px;width:58px;height:24px;"></div>
<div class="t" style="letter-spacing:-0.515px;left:1164.5px;top:893.90px;font-size:11.1px;">Close</div>
<div class="btn" style="left:1214px;top:887px;width:58px;height:24px;"></div>
<div class="t" style="letter-spacing:-0.457px;left:1232.2px;top:893.90px;font-size:11.1px;">Help</div>
<svg class="a" style="left:1279px;top:902px" width="13" height="13" viewBox="0 0 13 13"><path d="M12 2L2 12M12 6L6 12M12 10L10 12" stroke="#b8b8b8" stroke-width="1.200"/></svg>
</body></html>
